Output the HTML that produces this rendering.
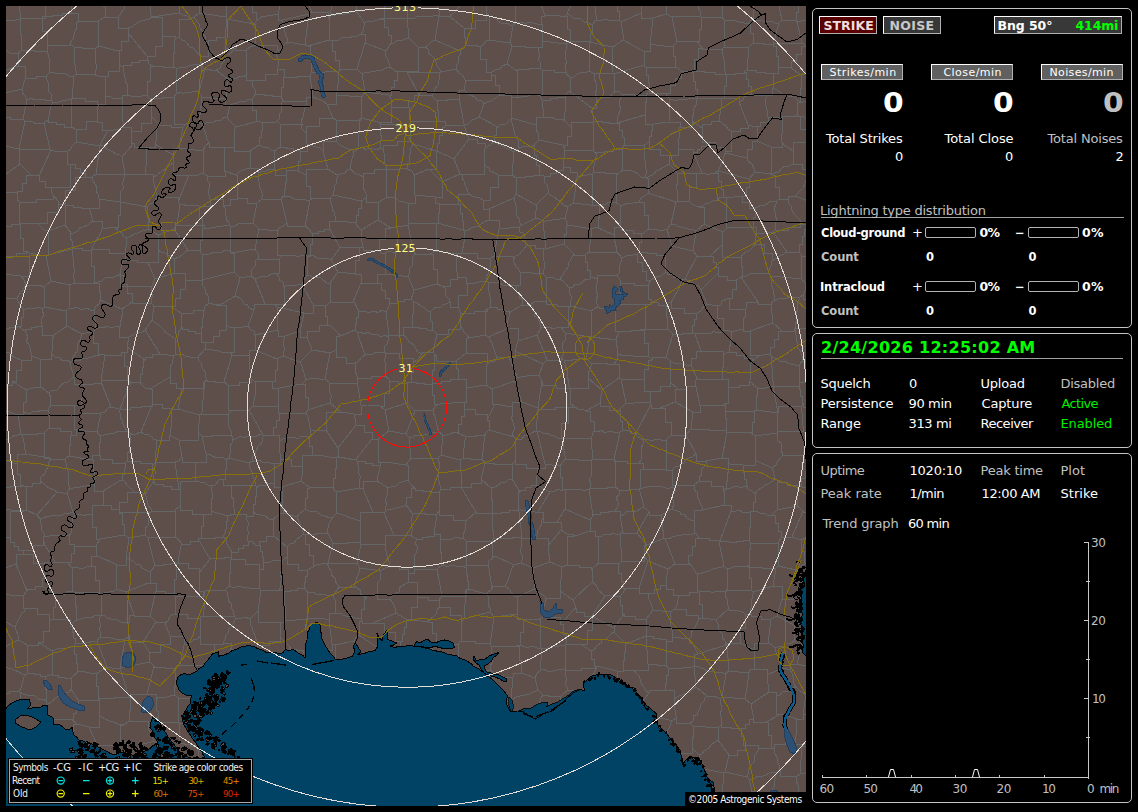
<!DOCTYPE html>
<html><head><meta charset="utf-8"><title>Lightning Monitor</title>
<style>
html,body{margin:0;padding:0;background:#000;}
body{width:1138px;height:812px;position:relative;overflow:hidden;font-family:"DejaVu Sans","Liberation Sans",sans-serif;font-size:13px;color:#fff;}
#map{position:absolute;left:6px;top:6px;width:800px;height:800px;overflow:hidden;background:#5e4f4b;}
#map svg{position:absolute;left:0;top:0;}
.panel{position:absolute;left:812px;width:318px;border:1px solid #c4c4c4;border-radius:5px;}
.t{position:absolute;white-space:nowrap;line-height:16px;height:16px;}
.c{font-family:"DejaVu Sans Condensed","DejaVu Sans","Liberation Sans",sans-serif;}
.btn{position:absolute;box-sizing:border-box;border:1px solid #e8e8e8;background:#606060;}
.bar{position:absolute;box-sizing:border-box;border:1px solid #b4b4b4;border-radius:2px;width:51px;height:11px;}
.hl{position:absolute;height:1px;background:#a0a0a0;}
#graph{position:absolute;left:812px;top:530px;}
</style></head><body>
<div id="map">
<svg width="800" height="800" viewBox="6 6 800 800" shape-rendering="crispEdges" fill="none" stroke-width="1">
<path d="M17 -8L21 18M47 -10L47 4L45 4L45 18L42 18M42 18L21 18M1 22L-9 16M1 22L5 21L7 20L13 20L16 20L20 19M20 19L21 18M1 22L-9 47M82 334L86 333L89 332L93 332M82 334L81 337L80 340L78 343L77 347L77 351L75 354L72 359L72 361M93 332L93 343L98 343L98 354L103 354M72 361L74 360L80 361L82 358L85 359L88 358L92 357L97 355L100 355L103 354M119 512L119 502L127 502L127 492L135 492M119 512L119 513M119 513L119 512L151 512M135 492L141 492L145 494M145 494L146 496L147 500L148 505L151 509L151 511M151 511L151 512M104 505L111 505L111 509L119 509L119 512M104 505L103 505L103 491M103 491L121 480M121 480L124 481L128 486L130 488L132 489L135 492M104 505L92 505L92 515M92 515L92 527L96 527L96 539L100 539M124 535L100 539M124 535L124 524L122 524L122 513L119 513M21 50L21 50L21 34L20 34L20 19M21 50L18 54M18 54L13 53L10 53L5 50L2 50L-2 50L-6 48L-9 47M231 1L226 -10M231 1L226 1L226 17M226 17L199 13M199 -3L199 13M273 519L273 523L274 528L273 532L274 536M273 519L269 519L265 516L261 515L256 514L253 512M253 512L253 516L246 516M246 516L247 520L248 522L248 526L247 529L249 533L247 537L248 541M274 536L266 536L266 541L259 541L259 545M248 541L253 542L255 545L259 545M283 513L287 514L289 515L294 516L297 517M283 513L279 514L276 517L273 519M297 517L304 534M304 534L302 535L300 537L296 540L294 543L290 544L287 547M287 547L274 536M436 355L436 361L456 361M436 355L434 355L434 370L432 370L432 385M432 385L432 383L441 383L441 381L450 381L450 379L458 379M456 361L457 364L456 367L459 371L458 376L458 379M615 310L615 304L620 304M615 310L612 309L608 310L603 308L602 309L597 307M617 275L597 275L597 279M617 275L620 280M620 280L620 304M597 307L597 304L596 300L598 295L596 292L596 286L597 283L597 279M569 288L573 287L575 284L580 284L583 282L585 279L590 279L592 277M569 288L569 292L571 296L571 300L570 302L571 306M597 307L591 311M592 277L597 279M591 311L571 306M42 18L42 18M21 50L21 50L34 50L34 51L47 51M47 51L47 45L52 45M42 18L42 31L47 31L47 45L52 45M52 -12L72 4M72 4L71 9L72 13M42 18L42 16L52 16L52 15L62 15L62 13L72 13M72 4L74 -1L78 -3M120 273L118 275M120 273L120 286L152 286M152 286L151 291L152 294L152 297L151 303M151 303L132 303L132 302M118 275L123 275L123 284L127 284L127 293L132 293L132 302M-1 331L0 330M-6 304L-6 308L-4 310L-4 316L-3 319L-2 324L-0 326L0 330M103 491L94 491L94 484M121 480L122 480L122 474L124 474L124 468L125 468L125 463M94 484L94 472L93 472L93 460L92 460M92 460L92 455L100 455M100 455L100 459L112 459L112 463L125 463M101 381L105 355M101 381L127 380M127 380L127 366L124 366L124 352L121 352M105 355L121 355L121 352M251 276L255 279M251 276L246 277L240 278M255 279L265 304M265 304L254 304L254 310M254 310L249 308L247 304L244 304L242 300L240 298L235 296M240 278L235 296M795 196L824 207M795 196L798 193L800 191L803 188L805 183L806 180L809 177L811 175M813 175L811 175M308 819L310 804M310 804L313 803L317 801L320 800L322 798L326 797L329 796M334 825L335 822L334 818L334 813L334 811L336 807L335 802L335 799M329 796L335 799M5 801L1 798L0 796L-3 793L-5 791M5 801L-2 801L-2 825M5 801L19 799M30 823L30 811L24 811L24 799L19 799M97 745L89 727M97 745L95 750M89 727L77 724M73 756L73 750L95 750M73 756L73 748L69 748M77 724L73 724L73 736L69 736L69 748M279 589L281 587L280 583L282 579L280 574L281 571L281 567L282 564L283 560M279 589L284 591M284 591L290 591L290 590L297 590L297 588L304 588L304 587M304 587L304 582L305 582L305 576L307 576L307 570L308 570M308 570L298 570L298 564L287 564L287 557M287 557L283 560M263 562L266 562L270 562L274 560L278 560L283 560M263 562L263 557L262 557L262 551L260 551L260 545L259 545M287 547L287 557M231 557L224 557L224 558L217 558L217 558L210 558L210 559M231 557L232 552M232 552L230 549L228 546L227 544L226 539L223 537M199 538L207 538L207 538L215 538L215 537L223 537L223 537M199 538L198 539M210 559L198 539M176 537L175 510M176 537L182 544M175 510L180 506M180 506L180 510L192 510L192 514L203 514M203 514L203 526L201 526L201 538L199 538M182 544L190 544L190 541L198 541L198 539M124 535L129 538M151 512L149 514L149 518L148 523L148 525L145 529L145 531L145 535M129 538L145 535M176 537L148 538M175 510L175 511L163 511L163 511L151 511M148 538L145 535M231 559L230 559L230 573L229 573L229 586M231 559L245 559L245 564L259 564L259 569M229 586L232 587L236 587L240 586L244 588L247 587L251 589L257 588L260 589M259 569L260 589M231 557L231 559M232 552L238 552L238 548L243 548L243 545L248 545L248 541M263 562L263 569L259 569M261 590L260 589M261 590L267 590L267 590L273 590L273 590L279 590L279 589M-1 331L0 335L0 338L2 341L3 346L3 348L4 352M4 352L4 356L-1 356L-1 360L-5 360L-5 364L-10 364M12 381L12 385L-2 385M12 381L16 381L16 370L21 370L21 360M21 360L16 358L14 357L10 354L9 352L4 352M16 564L16 554L23 554M16 564L27 591M23 554L33 554L33 563L44 563L44 572M44 572L45 576L42 580L43 583L42 586M42 586L35 586L35 589L27 589L27 591M23 550L23 554M23 550L18 550L18 546L14 546L14 542L10 542L10 538M-3 571L16 564M-3 537L10 537L10 538M-3 594L23 596M23 596L27 591M23 550L33 550L33 545L43 545L43 540M55 562L53 558L51 555L50 553L48 550L45 545L44 542L43 540M55 562L44 562L44 572M57 595L55 595L55 607L53 607L53 619M57 595L42 586M53 619L49 621M23 596L23 608L26 608M49 621L49 614L37 614L37 608L26 608M-7 615L15 627M26 608L24 612L22 613L19 619L18 620L17 623L15 627M795 332L796 335L796 340L798 344L797 348L799 349L801 352L802 356L802 361M795 332L794 331M802 361L799 366M799 366L795 365L791 364L788 363L785 361L780 361L777 358L774 358L771 356M770 355L770 347L774 347L774 339L778 339L778 331L782 331M770 355L771 356M794 331L782 331M828 353L828 361L802 361M795 332L795 328L822 328M254 24L255 24L255 45M254 24L227 19M227 19L225 37M246 50L250 47L255 45M246 50L235 50L235 48M235 48L225 48L225 37M194 17L199 13M194 17L197 22L199 24L200 28L202 31L202 34L206 37L205 41L208 43M226 17L227 19M225 37L216 37L216 40L208 40L208 43M510 43L489 40M510 43L511 38L511 33L513 29L512 26M512 26L510 25L507 23L501 23L498 21L495 18L492 17L489 16M489 16L489 40M75 515L73 518L72 523L71 525L71 528L71 533L69 536M75 515L73 512M73 512L70 513L66 513L62 515L59 515L55 515L50 516L48 516L43 518L40 519M69 536L66 535L62 536L57 535L56 535L50 535L49 536L44 536M44 536L44 534L41 529L42 526L40 522L40 519M92 515L87 514L84 516L80 514L78 514L75 515M100 539L96 546M96 546L74 546L74 544M74 544L69 544L69 536M67 493L73 512M67 493L70 488M94 484L91 485L87 485L85 486L80 487L77 487L73 488L70 488M55 562L67 562L67 562M43 540L44 536M74 544L74 553L71 553L71 562L67 562M10 538L10 511L24 511M-2 509L24 511M283 513L283 510L282 505L283 502L282 498L282 495L283 492L282 487M310 488L301 481M310 488L307 488L307 498L305 498L305 509M305 509L303 511L300 513L297 517M301 481L282 487M253 512L253 504L255 504L255 496L256 496L256 487L258 487M258 487L258 485L266 485L266 483L274 483M282 487L274 487L274 483M258 487L256 486M256 486L255 482L254 479L252 475L252 472L250 468L249 463M274 483L274 483L274 473L274 473L274 463M274 463L270 463L267 462L262 462L259 460L255 461L252 461M252 461L249 463M414 302L412 327M414 302L417 303L421 306L425 308L426 310L430 312M412 327L415 328L418 327L421 329L425 328L428 330L433 330M430 312L430 321L432 321L432 330L433 330M648 193L676 202M648 193L648 178L646 178M677 173L678 178L677 180L678 183L676 186L677 190L678 193L677 199L677 202M677 173L675 170L673 168L669 164M676 202L677 202M669 164L666 166L662 168L659 170L656 171L654 174L650 176L646 178M617 275L619 273L619 269L620 265L621 262L622 258M620 280L620 283L634 283L634 285L648 285M648 285L651 280M651 280L646 280L646 271L642 271L642 262L637 262L637 254M622 258L626 256L629 255L633 255L637 254M639 202L644 202L644 215L648 215L648 229M639 202L634 202L632 204L628 203L623 205L620 205M620 205L621 227M648 229L644 233M644 233L633 233L633 230L621 230L621 227M665 256L665 255L656 255L656 253L647 253L647 252L639 252M665 256L665 272L667 272M651 280L654 278L658 276L661 276L663 274L667 272M637 254L639 252M569 288L566 284L563 281L560 279M592 277L590 277L590 270L587 270L587 262L585 262L585 255M585 255L574 255L574 254M574 254L572 257L570 261L568 263L568 267L566 270L563 273L563 275L560 279M589 252L592 229M589 252L616 252L616 251M614 235L614 235L614 241L615 241L615 246L616 246L616 251M614 235L596 227M596 227L592 229M585 255L589 252M622 258L616 251M644 233L641 233L641 242L639 242L639 252M621 227L614 227L614 235M407 383L398 383L398 381L389 381L389 379M407 383L407 383L407 403M389 379L389 393L384 393L384 406L380 406M380 406L385 410M385 410L407 403M338 448L356 425M338 448L338 456L338 456M356 425L364 425L364 432L372 432L372 439M338 456L338 457L344 457L344 458L350 458L350 459L356 459M356 459L372 439M354 414L355 418L355 420L356 425M354 414L361 414L361 405M361 405L380 406M385 410L389 431M389 431L378 439M372 439L378 439M338 448L326 430M354 414L341 412M341 412L326 412L326 430M306 413L308 417L309 422L309 423L310 428M306 413L308 410M341 412L330 403M326 430L310 430L310 428M330 403L308 410M281 413L278 413L278 406M281 413L281 413L294 413L294 413L306 413M302 384L305 384L305 397L308 397L308 410M302 384L279 388M278 406L278 388L279 388M512 26L516 23M489 16L486 11M486 -1L486 -1L486 11M515 -2L515 23L516 23M538 -4L545 16M516 23L520 22L524 23L525 24L529 22L533 23L537 24L541 24M541 24L541 16L545 16M248 -2L248 5L252 5L252 12L256 12L256 19L259 19M280 -3L280 3L280 6L279 10L278 14M278 14L273 15L270 15L267 16L263 16L259 19M231 1L231 -0L240 -0L240 -2L248 -2M254 24L259 19M439 15L435 15L433 16L428 16L426 17L421 16L417 16L415 18L410 18L407 18M439 15L440 13L437 6L437 3L438 -1L438 -4L436 -9M407 18L407 7L407 7L407 -3L407 -3M98 282L102 281L105 278L111 277L114 277L118 275M98 282L97 283M122 309L132 302M122 309L100 300M97 283L99 283L99 291L100 291L100 300M91 251L91 266L94 266L94 282L98 282M91 251L91 250L82 250L82 248L73 248M73 248L72 249M72 249L72 252L73 257L73 260L73 264L74 268L74 273L73 276L74 279L74 283M97 283L74 283M96 329L94 310M96 329L100 327L105 328L106 326L112 328L116 326L119 326M119 326L120 326L120 320L121 320L121 315L122 315L122 309M94 310L96 306L99 304L100 300M125 258L125 260L137 260L137 262L148 262M125 258L123 261L122 265L121 269L120 273M152 286L155 279M148 262L155 279M91 251L92 249M125 258L125 256M92 249L109 249L109 253L125 253L125 256M73 248L73 246L72 241L70 238L71 233M71 233L74 233L78 231L80 227L83 227L88 225L90 223L93 221M93 221L102 221L102 229M92 249L93 246L95 242L97 239L99 236L101 232L102 229M257 203L261 200M257 203L247 203L247 198L237 198L237 193M250 168L246 169L243 170L239 172L236 175M250 168L258 168L258 172M261 200L262 197L262 193L261 190L259 186L259 182L258 178L259 176L258 172M236 175L237 175L237 193M36 223L38 224L41 227L44 230L48 231M36 223L47 223L47 212L58 212L58 201M48 231L65 225M65 225L65 214L65 214L65 204L64 204M58 201L58 204L64 204M72 249L48 255M48 255L48 243L48 243L48 231L48 231M71 233L65 225M65 203L64 204M65 203L65 205L73 205L73 207L81 207L81 208L89 208M93 221L89 208M145 494L154 481M127 461L125 463M127 461L140 461L140 463L152 463L152 466M152 466L154 481M231 485L223 485L223 479M231 485L232 490L231 493L231 496L234 500L233 504L234 508L234 510L234 514M223 479L219 480L215 485L212 486M212 486L211 490L212 492L213 496L211 501L211 503L211 507L211 511M211 511L227 516M234 514L227 516M256 486L231 485M249 463L229 458M226 460L229 458M226 460L226 469L225 469L225 479L223 479M246 516L246 514L234 514M203 514L211 514L211 511M223 537L225 533L226 529L226 524L228 519L227 516M248 326L244 326L242 328L239 327L234 328M248 326L250 329L254 331L255 335M249 356L232 355M249 356L249 350L255 350M232 355L230 352M255 350L255 335M234 328L234 352L230 352M198 357L193 358L190 357L185 356L182 354L180 354L175 355M198 357L199 361L201 363L202 367L205 372L205 376L207 380M207 380L204 382M204 382L204 388L182 388M173 356L175 355M173 356L173 359L172 364L170 367L170 371L170 374L170 377M170 377L170 383L176 383L176 388L182 388M232 355L224 382M230 352L226 352L221 352L217 350L213 350L211 349L205 349M205 349L198 357M224 382L215 382L215 381L207 381L207 380M200 415L178 409M200 415L201 414M201 414L202 412L202 407L202 404L203 400L203 397L204 392L203 389L203 385L204 382M178 409L182 388M171 412L171 408L162 408L162 404L152 404M171 412L171 409L178 409M150 389L152 389L152 404M150 389L170 377M248 326L254 310M255 335L278 330M275 304L277 307M275 304L265 304M277 307L278 330M255 350L277 359M283 356L277 359M283 356L283 353L285 349L283 345L284 339L285 336M285 336L278 336L278 330M275 304L284 304L284 287M255 279L258 278L262 276L265 277L268 276L271 274L276 273M284 287L283 282L279 280L279 277L276 273M323 151L328 169M323 151L320 148L316 147L310 145L307 144M328 169L306 169L306 175M300 151L307 151L307 144M300 151L300 161L298 161L298 170L296 170M306 175L302 173L300 172L296 170M287 223L281 199M287 223L287 226L305 226M305 226L310 200M310 200L306 200L303 199L297 199L294 199L290 196L288 196L283 196M281 199L283 196M313 198L310 200M313 198L310 198L310 186L306 186L306 175M286 175L286 182L285 182L285 189L284 189L284 196L283 196M286 175L286 170L296 170M261 200L281 199M275 169L275 175L286 175M275 169L271 169L266 171L261 172L258 172M277 231L259 229M277 231L277 255L283 255M259 229L255 249M283 255L279 259M279 259L258 259L258 254M258 254L255 249M253 223L257 227L259 229M253 223L257 203M287 223L285 225L279 228L277 231M308 256L310 256L310 244L312 244L312 233M308 256L307 256M312 233L309 229L305 226M307 256L302 255L300 256L296 256L292 255L286 255L283 255M251 276L251 274L252 269L255 266L255 261L258 258L258 254M276 273L279 273L279 259M240 278L236 274L234 272M255 249L231 253M234 272L234 253L231 253M230 226L230 234L230 234L230 242L230 242L230 251L229 251M230 226L235 226L238 224L241 223L246 223L249 224L253 223M231 253L229 251M235 296L231 299L229 299L224 303L221 304L216 305M234 328L229 327L226 324M216 305L226 305L226 324M205 349L206 342M226 324L226 330L219 330L219 336L213 336L213 342L206 342M755 172L759 172L763 173L769 173M755 172L754 169L752 164L748 161L747 158M747 158L747 149L752 149L752 141L757 141M769 173L771 173L771 147M757 141L771 147M793 164L793 151L793 151M793 164L789 166L785 166L782 168L779 172L776 172L772 175M769 173L772 175M793 151L789 148L787 147L784 145L782 142M771 147L782 147L782 142M811 175L811 169L802 169L802 164L793 164M793 151L793 142L806 142M821 143L806 142M795 196L788 196L788 201M823 223L817 223L817 225L812 225L812 227L806 227L806 229M806 229L806 224L800 224M788 201L789 204L791 206L792 210L794 214L798 218L800 220L800 224M772 175L775 175L775 187L779 187L779 199M788 201L788 199L779 199M755 172L749 179M747 158L725 153M749 179L718 171M725 153L724 156L723 161L721 164L720 167L718 171M677 173L702 173M689 201L677 202M689 201L689 187L696 187L696 173L702 173M702 173L702 173M645 177L646 174L646 169L645 167L646 164L644 158L645 155L644 153L644 148L644 145M645 177L641 177L638 174L635 172L632 171L628 170L623 170M624 145L644 145M624 145L622 149M623 170L622 170L622 149M123 768L122 794M123 768L112 768L112 769L102 769L102 769M122 794L108 798M102 769L99 773L97 778M97 778L108 778L108 798M79 818L79 812L78 812L78 806L77 806L77 800L75 800M104 818L104 799L107 799M107 799L103 799L101 798L96 799L92 798L89 798L87 800L83 799L78 799L75 800M229 800L227 801L223 799L219 800L216 800L212 798L207 799L205 798L201 797L198 797M229 800L230 800L230 811L231 811L231 821M198 797L198 800L200 805L200 809L201 812L199 817L201 820M230 798L229 800M230 798L233 798L239 796L242 796L246 796L250 794L253 794L257 793M257 793L257 800L265 800M265 800L265 813L255 813L255 827L244 827M586 358L591 363M586 358L590 337M591 363L599 363L599 363L607 363L607 364L614 364L614 364M591 336L590 337M591 336L591 337L599 337L599 338L608 338L608 339L616 339M616 339L616 346L617 346L617 354L618 354M618 354L617 360L614 364M561 358L563 355L563 350L562 348L562 344L565 340L565 336L565 333M561 358L564 360M565 333L590 337M564 360L572 360L572 359L579 359L579 358L586 358L586 358M588 378L588 373L590 370L591 366L591 363M588 378L602 390M602 390L619 378M619 378L619 364L614 364M561 327L568 327L568 308M561 327L565 333M591 311L591 319L591 319L591 328L591 328L591 336L591 336M568 308L571 306M621 331L615 331L615 310M621 331L618 334L616 339M650 391L650 403L650 403M650 391L644 391L644 379M644 379L621 379M621 379L626 403M626 403L628 403L634 403L635 402L639 402L643 403L646 402L650 403M519 754L520 757L521 763L519 765L520 770M519 754L538 747M520 770L520 776L528 776L528 782L536 782M538 747L538 749L542 754L544 757L544 760L548 765L547 767L550 771L551 775M551 775L536 782M510 779L510 778L502 778L502 776L495 776L495 775L488 775M510 779L510 770L520 770M519 754L514 751M514 751L510 752L506 751L501 751L499 751M499 751L488 775M510 779L510 779L510 787L510 787L510 795M483 798L489 798L489 804M483 798L488 776M489 804L489 795L510 795M488 776L488 775M465 800L471 800L471 800L477 800L477 799L483 799L483 798M465 800L460 797M460 797L459 793L459 788L458 786L458 781L458 777L459 775L458 769M458 769L458 763L464 763M488 776L464 763M499 751L497 748L494 746L490 744L488 742M464 763L464 755L465 755M465 755L471 755L471 746M471 746L488 742M514 751L514 751L514 721M488 742L492 725M492 725L514 721M-4 776L0 771M-7 750L0 771M304 534L305 534M308 570L316 565M316 565L313 565L313 555L309 555L309 544L305 544L305 534M305 509L309 511L312 511L315 511L320 514L321 515L325 516L330 518L333 517M333 517L331 520L329 524L328 528L327 531M305 534L316 534L316 533L327 533L327 531M210 559L199 573M225 590L215 590L215 590L205 590L205 591M225 590L229 586M199 573L199 591L205 591M235 617L234 615L233 611L231 607L231 603L228 601L228 597L227 592L225 590M235 617L203 616M203 616L203 611L204 609L204 603L204 600L203 595L204 592M205 591L204 592M258 645L269 645L269 641L280 641L280 637M258 645L257 641L255 638L255 636L253 631L252 627L251 626L250 621L250 619M258 611L250 619M258 611L258 622L284 622M284 622L280 622L280 637M236 618L240 619L242 618L245 617L250 619M236 618L235 617M261 590L258 611M286 621L284 591M286 621L284 622M254 696L258 696L262 696L264 696L269 699L272 697L276 700L280 700L283 700M254 696L254 700L253 704L254 706L255 709L254 714L254 718L255 720L255 724M255 724L258 725L263 725L264 727L268 727L273 728M273 728L285 707M285 707L283 700M362 621L362 623L373 623M362 621L359 621L359 635M373 623L384 623L384 632L395 632L395 642M395 642L384 642L384 652M359 635L384 652M400 641L395 642M400 641L400 649L411 649M411 649L410 654L411 656L409 661L410 665L409 669L407 673M385 669L388 671L393 670L396 671L400 672L403 672L407 673M385 669L381 665M381 665L384 665L384 652M120 668L150 662M120 668L129 697M150 662L154 666M129 697L130 698M130 698L130 694L147 694M154 666L147 694M333 767L333 763L333 759L333 755L333 753M333 767L326 775M333 753L329 751L325 751L321 749L318 748L313 747L311 747M326 775L324 775L319 773L315 774L311 772L307 770L305 770M305 770L311 747M302 799L277 802M302 799L302 785L301 785L301 772L300 772M300 772L300 769L286 769M277 802L276 801M276 801L283 771M286 769L283 771M310 804L305 801L302 799M280 824L280 817L279 817L279 809L278 809L278 802L277 802M329 796L328 791L329 787L327 783L327 779L326 775M305 770L300 772M280 745L279 746M280 745L280 736L305 736M305 736L311 747M279 746L283 746L283 757L286 757L286 769M265 800L270 800L276 801M231 769L230 769L230 752M231 769L231 773L255 773M230 752L237 752L237 751L244 751L244 749L251 749L251 748M255 773L256 773M256 773L258 773L258 762L259 762L259 752M259 752L259 748L251 748M230 798L231 795L228 789L228 787L229 783L227 779L227 775M257 793L255 793L255 773M227 775L231 769M283 771L280 771L275 771L272 771L268 771L264 771L260 774L256 773M279 746L276 747L274 748L268 750L266 751L263 750L259 752M280 745L276 745L276 736L273 736L273 728M253 725L253 748L251 748M253 725L255 724M127 753L132 752L134 750L138 748L141 746L143 744L147 743L151 742L154 741M127 753L127 741L120 741M120 741L120 725L124 725M154 741L148 728M148 728L148 721L129 721M124 725L129 721M128 763L144 770M128 763L127 757L127 753M144 770L144 757L152 757L152 745L160 745M160 745L154 741M123 768L123 763L128 763M97 745L120 745L120 741M102 769L95 750M89 727L99 727L99 716M99 716L102 717L105 719L110 721L113 722L118 724L121 724L124 725M99 716L99 708L99 708L99 700L99 700M99 700L99 699M99 699L99 698L114 698L114 697L129 697M130 698L130 710L129 710L129 721L129 721M794 331L796 326L795 325L797 320L796 315L797 312L797 308L797 305L799 300L799 298M782 331L773 323M773 323L771 304M771 304L774 300M774 300L776 300L780 298L783 299L787 298L791 297L797 297L799 298M770 355L767 354L763 355L760 355M773 323L750 331M760 355L750 355L750 331M806 229L804 229L804 236L802 236L802 244L799 244L799 252M799 252L801 254M801 254L801 256L814 256L814 257L828 257M17 66L-8 76M17 66L25 66L25 79M25 79L22 89M22 89L-4 95M18 54L18 66L17 66M246 50L246 75M246 75L243 77L240 76L237 78L231 78L228 79M235 48L233 50L231 53L228 55L225 58L224 61L220 66L220 68L216 70M228 79L216 70M510 43L512 46M489 40L486 41L484 44L480 47M512 46L507 64M507 64L502 66L500 69L495 70L492 72M480 47L480 59L486 59L486 72L492 72M464 90L465 85L465 80M464 90L467 93L470 95L475 97L477 100L482 101L484 104M499 95L496 98L491 101L487 102L484 104M499 95L499 85L495 85L495 75L491 75M491 75L491 80L465 80M12 381L26 390M26 390L26 402L23 402L23 414L19 414M-6 407L18 415M19 414L18 415M-5 443L-1 442L1 441L6 440L8 439L11 438L15 435L18 435L21 434M18 415L21 434M-2 487L10 487L10 486L22 486L22 485M-7 457L17 464M17 464L17 474L20 474L20 485L22 485M25 454L25 450L24 447L24 443L23 438L22 434M25 454L17 454L17 464M21 434L22 434M24 486L26 486L26 510M24 486L32 486L32 483L40 483L40 481M57 492L37 515M57 492L54 490L49 488L46 486L43 483L40 481M37 515L26 510M24 511L26 510M22 485L24 486M67 493L63 493L57 492M40 519L37 515M279 441L283 439L286 438L291 437L294 437L298 439L301 436L306 436M279 441L280 453M280 453L280 459L291 459L291 466L302 466M306 436L309 436L309 446L312 446L312 455M312 455L302 455L302 466M281 413L279 413L279 420L276 420L276 427L273 427L273 435M273 435L279 435L279 441M310 428L310 436L306 436M273 435L263 435M274 463L280 463L280 453M263 435L263 437L262 442L260 445L258 446L256 451L255 455L252 457L252 461M301 481L301 478L303 474L302 470L302 466M338 456L336 458M336 458L332 457L329 457L324 456L321 455L316 456L312 455M310 488L310 487L332 487M336 458L336 468L335 468L335 478L333 478L333 487L332 487M460 325L460 313L461 313M460 325L462 328L464 332L467 335L469 338M461 313L474 313L474 311L487 311L487 309M487 309L485 309L485 335M469 338L485 335M430 312L432 310L436 307L441 307L444 304L446 304L450 302M433 330L437 334M437 334L448 334L448 329L460 329L460 325M450 302L450 307L458 307M458 307L461 313M436 355L433 352M433 352L437 334M456 361L466 353M466 353L466 338L469 338M488 282L487 281M488 282L488 286L488 290L489 292L490 297L491 300L490 302L491 307M487 281L483 281L479 282L475 283M475 283L467 283L467 295L458 295L458 307M491 307L487 309M489 337L485 335M489 337L508 328M491 307L497 307L497 309L503 309L503 311L509 311L509 313M508 328L507 324L508 320L509 317L509 313M466 353L487 353L487 365M497 357L495 361L491 361L487 365M497 357L495 353L494 349L493 347L492 343L490 340L489 337M475 283L466 283L466 277L457 277L457 272M450 302L449 299L446 296L445 293L445 288L442 286M457 272L457 279L450 279L450 286L442 286M433 352L422 352L422 354M412 327L403 327L403 335M403 335L406 337L409 342L411 343L414 345L416 349L418 352L422 354M409 382L411 382L411 372L413 372L413 363M409 382L416 382L416 383L424 383L424 384L432 384L432 385M432 385L432 385M422 354L419 358L417 360L413 363M361 405L357 381M330 383L329 387L329 391L331 395L331 398L330 403M330 383L357 383L357 380M357 380L357 381M389 379L385 376M357 381L357 378L371 378L371 376L385 376M409 382L407 383M413 363L413 358L399 358L399 353L385 353M385 376L386 372L385 368L386 364L384 360L386 356L385 353M693 251L696 231M693 251L672 246M696 231L692 229L688 229L685 228L681 227L677 226L675 224L671 224M672 246L667 229M667 229L671 224M648 229L651 229L655 229L658 230L664 230L667 229M665 256L666 253L670 250L672 246M648 193L646 195L641 198L639 202M676 202L671 224M621 331L621 331L631 331L631 330L640 330M618 354L623 356L625 355L628 355L633 356L637 356L640 356L643 357L648 356M640 330L644 330L644 343L648 343L648 356M644 379L644 369L648 369L648 360L652 360M621 379L619 378M648 356L652 360M666 305L666 317L667 317L667 329L668 329M666 305L658 305L658 302L651 302L651 299M645 304L651 304L651 299M645 304L645 329L642 329M642 329L642 329L668 329M620 304L645 304M648 285L648 299L651 299M640 330L642 329M545 249L564 244M545 249L546 247L545 241L544 240L544 235L544 231L543 229L543 225L544 221M564 244L564 234L566 234L566 225L568 225M544 221L546 221L552 220L555 219L558 220L562 218L565 218M568 225L565 218M574 254L564 244M592 229L568 225M568 207L565 218M568 207L573 203M596 227L598 227L598 217L599 217L599 206M573 203L599 206M547 360L537 335M547 360L543 364M543 364L515 351M537 335L518 341M518 341L515 351M561 358L561 360L547 360M541 328L537 335M541 328L545 327L549 327L554 329L556 328L561 327M517 377L509 357M517 377L521 377L524 376L527 376L531 375L535 375L539 375M539 375L543 364M509 357L515 357L515 351M497 357L509 357M508 328L518 328L518 341M403 335L398 336L393 335L389 335M385 353L385 352M385 352L384 347L387 344L388 341L388 337M389 335L388 337M356 459L357 461M386 462L378 462L378 439M386 462L380 462L380 467M380 467L380 465L372 465L372 463L365 463L365 461L357 461M325 379L321 380L317 378L314 378L309 379L306 380M325 379L330 353M306 380L305 377L304 373L302 368L302 366L300 362M300 362L312 350M312 350L318 350L318 351L324 351L324 352L330 352L330 353M302 384L306 380M330 383L325 379M283 356L300 362M277 359L277 370L275 370L275 381L272 381M279 388L272 388L272 381M507 64L517 71M499 95L511 95L511 101M511 101L511 97L517 97M491 75L492 72M517 97L517 97L517 71M638 -3L640 -3L640 5L641 5L641 13M621 22L641 13M621 22L619 20M619 20L619 11L617 11L617 2L616 2L616 -7L615 -7M614 74L614 91L619 91M614 74L612 73M619 91L615 92L613 93L610 97L606 97L603 97L600 99L596 101M612 73L606 73L606 73L601 73L601 73L595 73L595 74M596 101L597 97L595 94L597 89L596 85L596 83L594 78L595 74M613 47L589 42M613 47L612 73M589 42L589 52L589 52L589 61L589 61L589 71L589 71M589 71L595 74M567 14L565 16M567 14L570 15L573 18L578 18L581 19L584 22L589 23L592 25M565 16L567 16L567 29L570 29L570 42M570 42L588 41M592 25L592 33L590 33L590 41L588 41M613 47L623 40M589 42L588 41M623 40L624 35L623 34L622 28L621 25L621 22M596 20L599 21L605 19L608 20L611 20L615 20L619 20M596 20L592 25M541 24L542 24L542 33L542 33L542 41M545 16L550 15L554 16L557 15L560 16L565 16M570 42L566 44M566 44L542 41M512 46L512 46L525 46L525 47L538 47M517 71L517 69L529 69L529 68L540 68M540 68L540 62L538 60L540 55L538 51L538 47M538 47L542 47L542 41M567 14L568 11L570 8L571 5L573 2L574 -1L575 -5M596 20L596 15L595 12L595 7L593 5L593 0L592 -4M672 17L666 14M672 17L677 42M677 42L673 46M666 14L653 18M653 18L650 45M673 46L669 46L664 46L662 45L658 46L654 44L650 45M614 74L644 65M623 40L643 51M644 65L644 51L643 51M653 18L641 18L641 13M643 51L650 51L650 45M435 40L439 16M435 40L460 51M464 28L450 17M464 28L464 37L465 37L465 45L466 45M450 17L439 16M460 51L466 45M409 38L418 47M409 38L407 18M439 15L439 16M407 18L407 18M425 47L418 47M425 47L427 46L431 42L435 40M456 69L456 65L458 63L458 57L460 55L460 51M456 69L441 72M441 72L439 68L437 66L436 62L434 58L431 55L428 53L428 49L425 47M473 -6L472 -4L467 0L465 1L462 5L460 6L458 8L454 13L452 14L450 17M486 11L486 20L475 20L475 28L464 28M480 47L475 45L472 46L466 45M465 80L463 76L460 73L459 73L456 69M278 14L278 20L283 20M311 12L311 10L309 6L309 1L309 -4L308 -6M311 12L309 14M283 20L309 14M382 18L384 18L384 6L385 6L385 -7M382 18L407 18L407 18M52 45L70 45L70 43M72 13L78 13L78 21M70 43L73 39L74 35L74 33L77 28L76 24L78 21M158 235L149 229M158 235L158 235L158 250M148 262L158 262L158 250M125 256L127 238M149 229L146 230L142 231L138 233L134 234L131 236L127 238M102 229L115 227M127 238L123 236L122 233L118 231L115 227M99 199L99 208L89 208M99 199L120 202M115 227L118 227L118 215L120 215L120 202M277 121L275 123L270 122L267 122L263 123M277 121L280 124M280 124L280 147M263 123L262 123L262 130L261 130L261 137L259 137L259 145M259 145L263 147L268 147L271 150L274 151M274 151L280 147M255 94L252 100M255 94L264 94L264 95L272 95L272 96L281 96L281 97M281 97L283 100M283 100L282 102L281 108L281 112L279 114L279 119L277 121M259 121L256 121L256 110L252 110L252 100M259 121L263 123M301 128L301 124L280 124M301 128L303 124L301 122L303 117L304 112L305 108L306 105L306 101M306 101L295 101L295 101L283 101L283 100M301 128L306 133M306 133L307 144M300 151L300 150L293 150L293 148L286 148L286 147L280 147M250 151L234 151L234 141M250 151L259 145M234 141L235 136L234 131L236 127M259 121L236 127M250 151L250 151L250 157L250 157L250 162L250 162L250 168M275 169L274 151M173 155L155 144M173 155L173 148L179 148M159 124L157 129L156 132L156 137L156 141L155 144M159 124L159 125L171 125L171 127L183 127M183 127L179 148M225 171L225 176L208 176M225 171L224 171L224 159L224 159L224 147M224 147L209 147L209 143M202 173L208 176M202 173L203 173L203 166L203 166L203 159L203 159L203 151M203 151L205 146L209 143M234 141L234 147L224 147M236 175L225 171M189 175L194 175L198 175L202 173M189 175L173 175L173 163M173 163L173 163L173 155M179 148L203 151M-10 205L-2 205L-2 198L5 198L5 192M-3 227L4 227L4 226L11 226L11 224L19 224L19 223M19 223L19 202L19 202M5 192L17 192L17 199M19 202L17 199M-1 179L5 192M20 224L20 238L23 238L23 251L26 251M20 224L19 223M26 251L26 253L16 253L16 256L5 256L5 258L-5 258M53 195L53 199L36 199L36 202L19 202M53 195L58 201M36 223L20 223L20 224M31 175L26 175L26 183L22 183L22 191L17 191L17 199M31 175L20 164M20 164L-1 179M31 175L39 176M53 195L51 191L51 187M39 176L39 181L45 181L45 187L51 187M82 334L67 326M70 363L72 361M70 363L68 360L62 361L60 358L55 357L51 354M67 326L54 335M54 335L52 340L53 342L52 347L52 351L51 354M21 360L31 360L31 356M41 387L36 387L33 388L29 389L26 390M41 387L40 387L40 359M40 359L31 356M26 251L29 253M-2 274L3 274L5 274L9 274L15 276L17 275L21 276M21 276L29 276L29 253M48 255L46 256M29 253L46 256M152 405L152 406L141 406L141 407L130 407L130 409L120 409M152 405L141 432M141 432L136 434L132 434M119 409L120 413L120 417L122 420L123 424L125 428L127 431M119 409L120 409M132 434L127 431M140 382L135 382L131 382M140 382L142 385L145 388L150 389M131 382L130 385L127 388L126 391L126 395L124 398L123 401L122 404L120 409M152 404L152 405M100 436L104 435L109 434L111 433L114 433L119 431L123 431L127 431M100 436L97 432M97 432L101 413M111 407L108 408L105 412L101 413M111 407L119 409M101 381L101 382M127 380L131 382M111 407L101 382M100 455L99 451L99 448L99 445L101 440L100 436M127 461L127 452L129 452L129 443L130 443L130 434L132 434M145 360L127 347M145 360L145 357L152 357L152 354L160 354M160 354L145 330M145 330L142 332L139 332L135 333L133 335L129 337M127 347L129 337M121 352L127 352L127 347M140 382L140 374L142 374L142 367L143 367L143 360L145 360M173 356L168 355L165 354L160 354M96 329L93 332M103 354L105 355M119 326L119 337L129 337M175 355L175 339M145 330L152 320M175 339L173 337L168 334L166 333L164 330L161 327L159 325L154 322L152 320M151 303L154 306M154 306L152 320M249 356L250 361L249 365L249 368L250 370L250 376L251 379M224 382L228 385M228 385L239 385L239 382L251 382L251 379M272 381L256 382M251 379L256 382M278 406L253 406M256 382L255 387L255 389L256 393L254 399L254 401L253 406M70 363L74 377M101 382L101 383L93 383L93 384L84 384M74 377L74 384L84 384M41 387L49 393M51 354L51 359L40 359M74 377L71 379L68 382L64 383L61 385L59 388L57 390L51 391L49 393M101 413L81 413L81 405M84 384L81 405M158 250L161 252L165 253L167 254L171 257L174 259M155 279L174 273M174 273L174 259L174 259M158 235L174 229M174 229L188 250M174 259L179 257L182 255L184 253L188 250M234 272L202 280M229 251L225 250L222 252L219 252L214 252L209 254L205 254L202 254M202 280L202 280L202 271L202 271L202 263L202 263L202 254M174 229L177 225M177 225L204 225L204 229M204 229L202 229L202 240L200 240L200 252M188 250L200 250L200 252M757 141L757 126L752 126M752 126L760 126L760 122L768 122L768 117M782 142L781 138L782 134L782 130L782 126L782 122M782 122L782 117L768 117M806 142L806 129L800 129L800 116L795 116M782 122L782 116L795 116M823 125L820 124L817 123L813 121L810 120L807 119L802 116L800 117L797 114M797 114L795 116M801 75L826 69M801 75L801 88L800 88L800 101L799 101M819 98L815 98L811 99L808 101L803 102L800 102M800 102L799 101M797 114L797 102L800 102M725 153L725 151M693 152L702 173M693 152L697 152L697 149L701 149L701 146L706 146L706 142M715 173L718 171M715 173L710 174L706 174L702 173M725 151L725 147L715 147L715 142L706 142M752 126L748 125M748 125L748 128L740 128L740 131L731 131M725 151L731 151L731 131M721 98L721 102L721 106L721 108L720 114L719 116L720 121M721 98L697 98M697 98L696 99M696 99L696 102L696 105L693 110L694 114L692 117L692 121M720 121L711 121L711 124L702 124L702 128M692 121L702 128M739 102L748 125M739 102L739 98L722 98M722 98L721 98M731 131L728 129L726 126L723 124L720 121M726 74L715 74L715 72L704 72L704 71L694 71L694 70M726 74L726 86L724 86L724 98L722 98M691 72L694 70M691 72L693 72L693 81L695 81L695 89L697 89L697 98M706 142L702 142L702 128M654 124L652 124L652 130L651 130L651 136L649 136L649 142M654 124L669 122M649 142L649 149L660 149L660 155L670 155M680 127L680 122L669 122M680 127L678 131L680 133L679 138L678 142L679 146L678 149M678 149L678 155L670 155M669 164L669 161L670 155M646 178L645 177M644 145L649 142M670 99L669 122M670 99L673 100L678 100L683 99L684 100L688 99L693 98L696 99M692 121L692 127L680 127M693 152L693 149L678 149M622 94L634 94L634 95L646 95L646 95M622 94L622 97L619 101L619 104L621 109L620 111L618 116L617 120L617 123M617 123L645 115M646 95L646 102L645 102L645 108L645 108L645 115L645 115M624 145L624 137L622 137L622 130L619 130L619 123L616 123M616 123L617 123M654 124L645 124L645 115M592 174L592 205L602 205M592 174L594 172M594 172L605 172L605 173L616 173L616 175M616 175L616 184L616 184L616 193L616 193L616 203L616 203M616 203L611 202L609 202L606 204L602 205M573 203L574 199L574 195L575 192L575 188L575 183L576 180L577 177M577 177L592 174M599 206L602 205M565 150L563 167M565 150L594 151M563 167L570 167L570 172L577 172L577 177M594 151L596 154M596 154L596 157L595 161L594 166L593 168L594 172M623 170L616 175M622 149L613 149L613 151L604 151L604 152L596 152L596 154M620 205L616 203M97 778L92 778L89 778L87 779L84 781L78 780L75 781L72 781M108 798L107 799M75 800L73 797L70 792M70 792L72 781M47 818L47 802L49 802M70 792L49 802M73 756L71 760L69 764L69 767L67 771M72 781L69 779L69 774L67 771M69 748L62 748L62 745L55 745L55 741L48 741L48 738M48 738L52 768M67 771L52 771L52 768M178 828L178 815L178 815L178 801L178 801M198 797L196 795M196 795L193 797L190 797L186 798L181 800L178 801M155 822L152 804M128 820L133 799M152 804L143 797M133 799L143 797M178 801L171 797M171 797L152 804M122 794L133 799M148 776L148 776L155 776L155 775L162 775L162 775L169 775M148 776L143 797M169 775L170 775L170 786L171 786L171 797M144 770L148 776M515 827L515 815L520 815L520 804L525 804M551 826L544 826L544 814L536 814L536 803M525 804L532 801M532 801L536 803M489 804L495 823M510 795L514 796L515 800L519 801L521 802L525 804M536 782L534 782L534 791L532 791L532 801M551 775L551 776L563 776M563 776L567 776L567 786L570 786L570 796M570 796L536 803M465 800L463 800L463 813L461 813L461 827M437 822L436 822L436 811L435 811L435 800M460 797L435 800M675 402L675 389L678 389M675 402L693 412M693 412L700 412L700 406M700 406L695 382M695 382L695 386L686 386L686 389L678 389M650 391L660 391L660 386L670 386L670 382M660 408L651 408L651 404M660 408L675 402M650 403L651 404M670 382L678 389M798 539L802 540L805 538L808 539L813 539L815 539L819 538L823 538M798 539L792 537M792 537L803 511M803 511L803 512L810 512L810 513L818 513L818 513L825 513M798 539L801 539L801 551L804 551L804 564M804 564L824 562M436 644L458 644M436 644L432 648M432 648L432 648L432 655L432 655L432 662L432 662L432 669M459 666L458 644M459 666L456 668L452 670L449 669L448 673L442 674L440 675M440 675L432 669M411 649L432 648M407 673L412 679M412 679L432 669M443 693L418 695M443 693L443 688L441 685L442 681L440 679L440 675M418 695L412 686M412 686L412 679M440 724L449 698M440 724L451 724L451 726L463 726L463 728M470 719L463 719L463 728M470 719L457 696M457 696L457 698L449 698M443 693L449 693L449 698M418 695L418 698L417 703L415 704L415 709L414 712L413 717L414 720M414 720L436 726M436 726L440 724M465 755L461 752L459 752L456 749L451 748L449 748L444 745L441 744L437 742M471 746L469 743L467 738L467 736L464 733L463 728M437 742L437 738L436 733L436 729L436 726M484 716L484 725L492 725M484 716L470 716L470 719M466 565L466 565L466 541M466 565L464 567M440 539L440 552L441 552L441 565L442 565M440 539L443 539L448 539L452 539L456 537L459 538L463 538M463 538L466 541M442 565L445 566L449 566L454 565L456 566L461 566L464 567M77 724L71 719M99 700L99 700L88 700L88 700L78 700M71 719L73 719L73 713L76 713L76 706L78 706L78 700M96 674L79 671M96 674L96 686L98 686L98 699L99 699M79 671L71 678M71 678L71 689M78 700L71 689M71 719L71 719L59 719L59 719L47 719M71 689L69 692L66 692L62 695L59 696L55 698L53 701L51 702L47 705M47 705L47 705L47 719M48 738L46 735M46 735L45 730L43 728L44 722M44 722L47 719M16 771L19 768L23 767L28 764M16 771L16 784L18 784L18 797L21 797M28 764L39 771M39 771L39 782L38 782L38 792L37 792M21 797L21 792L37 792M-5 747L14 743M0 771L16 771L16 771M14 743L27 755M27 755L28 759L28 764M19 799L21 797M46 735L36 735L36 745L27 745L27 755M52 768L39 771M49 802L49 792L37 792M316 565L327 563M333 543L327 531M333 543L328 563M328 563L327 563M333 596L335 600L336 603L335 608L336 613M333 596L330 595L326 595L323 594L319 594L316 594L313 592L308 593M307 618L309 618L314 619L319 618L320 618L325 619L329 620M307 618L307 593L308 593M329 620L329 613L336 613M361 619L361 609L364 609L364 599L366 599M361 619L358 618L355 618L350 616L346 616L343 615L341 613L336 613M366 599L363 595L360 594L360 590L357 588L354 586M354 586L354 587L339 587M339 587L333 596M304 587L308 593M339 587L338 585L335 581L335 578L331 575L331 571L329 568L327 563M286 621L306 619M306 619L307 618M182 544L180 548L180 551L179 556L178 559L178 563M199 573L199 568L188 568L188 563L178 563M178 563L178 563M148 538L155 566M178 563L170 563L170 564L163 564L163 565L155 565L155 566M204 592L204 596L175 596M175 596L174 595M178 563L176 563L176 579L174 579L174 595M134 615L134 616L150 616M134 615L129 615L129 623M150 616L156 622M143 642L156 622M143 642L128 642L128 637M129 623L128 637M256 649L258 645M256 649L259 653L258 659L260 663M260 663L262 665M262 665L276 669M280 637L284 641L286 643L290 647M276 669L278 667L279 662L281 660L284 657L285 654L288 651L290 647M305 736L308 730M335 748L333 753M335 748L325 727M308 730L314 730L314 729L319 729L319 728L325 728L325 727M285 707L289 710L293 711L296 712L299 715L302 716M308 730L308 716L302 716M335 748L357 738M356 727L357 738M356 727L356 721L330 721M325 727L325 721L330 721M359 635L356 637L354 641M381 665L361 667M354 641L354 645L355 650L357 652L357 657L359 660L360 663L361 667M231 673L230 675M231 673L230 671L231 666L232 663L231 660L231 656L230 652L231 648M230 675L219 675L219 674L207 674L207 674M207 674L211 674L211 659L214 659L214 644M231 648L231 643L223 643M223 643L223 644L214 644M253 694L256 694L256 685L259 685L259 675L262 675L262 665M253 694L249 694L245 695L242 693L238 694M260 663L231 673M238 694L230 675M256 649L248 649L248 649L239 649L239 649L231 649L231 648M236 618L234 622L232 626L229 629L228 633L226 635L225 639L223 643M174 614L187 614L187 618L200 618L200 622M174 614L170 616L168 621L165 623M165 623L170 636M170 636L184 636L184 645M184 645L187 644L191 642L194 639L198 639L200 636M200 636L200 636L200 622M203 616L200 616L200 622M175 596L175 605L175 605L175 614L174 614M150 616L156 591M156 622L165 623M174 595L174 593L165 593L165 591L156 591M143 642L149 652M149 652L160 652L160 644L170 644L170 636M150 662L149 662L149 652M180 665L176 668M180 665L181 661L181 656L182 653L183 650L184 645M154 666L154 667L165 667L165 668L176 668M180 665L205 665L205 676M205 676L207 674M214 644L200 644L200 636M158 717L159 712L157 711L156 707L157 703L156 699M158 717L158 722L178 722M178 722L178 710L178 710L178 698L179 698M156 699L159 697L163 698L167 697L170 696L174 695M174 695L179 698M147 694L156 694L156 699M148 728L152 725L152 721L155 719L158 717M176 668L175 668L175 677L175 677L175 686L174 686L174 695M205 676L205 679L204 684L204 688L203 692L203 696M203 696L203 697L191 697L191 698L179 698M253 725L230 725M229 751L230 752M229 751L229 728L227 728M230 725L227 728M254 696L253 694M238 694L233 698M230 725L233 698M203 696L204 698M233 698L233 698L219 698L219 698L204 698M567 691L567 687L565 683L567 679L565 675L565 670M567 691L584 690M565 670L581 670L581 668L596 668L596 666M584 690L586 686L587 684L590 681L591 678L594 673L595 671L596 666M333 767L362 771M357 738L357 744L362 744M362 744L362 744L362 753L362 753L362 762L362 762L362 771M362 771L362 771M335 799L349 798M362 771L362 780L358 780L358 789L354 789L354 798L349 798M771 304L758 304L758 302M750 331L743 331L743 329M743 329L743 326L743 320L746 316L745 313L746 309M758 302L746 302L746 309M803 295L805 291L805 288L805 283M803 295L803 299L809 299L809 302L814 302L814 306L819 306M805 283L809 283L813 282L817 282L819 281L823 280L827 278L830 277L833 276M774 300L774 295L773 292L773 289L771 283L771 281L771 276M771 276L802 279M799 298L803 295M802 279L805 283M802 279L801 254M150 99L150 98L162 98L162 97L174 97M150 99L151 99L151 108L151 108L151 116M151 116L159 124M183 127L186 124M174 97L174 124L186 124M666 14L666 5L667 5L667 -3L668 -3L668 -11L669 -11M730 -7L726 -7L726 5L722 5L722 17M722 17L722 17L712 17L712 17L701 17M700 16L700 11L698 8L698 3L698 -1M700 16L701 17M672 17L700 16M677 42L677 41L697 41M697 41L699 41L699 29L701 29L701 17M739 102L743 100L744 97L749 95L751 94M768 117L767 115L767 110L766 106L765 103L766 98L766 95M751 94L751 95L766 95M799 101L797 100L794 97L788 96L785 95L782 94L780 92L775 89L772 88M766 95L772 95L772 88M801 75L798 73L794 70L791 68M773 73L773 88L772 88M773 73L778 73L778 67M791 68L787 67L783 68L778 67M773 45L773 44L763 44L763 43L753 43M773 45L779 23M753 18L756 20L760 20L763 21L768 22L771 21L775 23L779 23M753 18L748 23M753 43L753 33L750 33L750 23L748 23M722 17L724 20M755 -4L756 -1L754 3L753 8L754 9L753 15L753 18M724 20L727 21L732 20L736 21L739 22L744 23L748 23M821 17L817 18L814 19L809 21L807 20L801 21L797 22M797 22L802 43M822 48L822 46L807 46M802 43L807 46M791 68L791 61L796 61L796 54L801 54L801 46L807 46M778 67L778 56L776 56L776 46L773 46M773 46L773 43L802 43M479 117L498 127M479 117L475 119L472 120L468 124L464 124M464 125L464 124M464 125L469 139M469 139L477 139L477 143L485 143L485 148M498 127L496 127L496 135L494 135L494 142M485 148L490 145L494 142M511 101L511 110L511 110L511 118L512 118M484 104L479 117M511 119L512 118M511 119L509 121L506 124L500 125L498 127M464 90L459 90L459 97M459 97L464 124M445 127L445 121L438 121M445 127L445 125L464 125M459 97L459 99L447 99L447 100L436 100M438 121L438 110L437 110L437 100L436 100M407 72L440 73M407 72L419 95M440 73L439 76L439 80L438 85L435 89L434 92L432 96M419 95L432 95L432 96M406 71L418 71L418 47M406 71L407 72M441 72L440 73M436 100L432 96M413 144L411 141M413 144L411 148L410 152L410 154L409 158L409 163L407 164L407 169M407 169L402 168L399 169L394 170L390 169L386 169M386 169L386 166L384 162L385 158L384 153L383 150M411 141L397 141L397 145L383 145L383 150M72 568L75 567L79 568L84 568L86 567L91 566M72 568L72 576L72 576L72 583L72 583L72 591L72 591M91 566L95 566L95 580L99 580L99 593M99 593L74 592M72 591L74 592M96 546L96 556L98 556M67 562L72 568M98 556L91 556L91 566M57 595L61 594L66 594L67 591L72 591M101 615L97 615L94 616L91 618L87 617L84 618L78 620L76 620M101 615L102 595M76 620L76 606L75 606L75 592L74 592M102 595L99 593M53 619L70 619L70 626M70 626L72 624L76 620M25 454L50 458M22 434L29 434L29 434L37 434L37 433L44 433L44 433M44 433L44 458L50 458M70 488L68 484L68 482L69 478L68 473L68 471L67 468L66 463L65 459M92 460L69 456M69 456L65 459M40 481L41 477L45 474L46 470L48 467L49 462L51 459M65 459L51 459L51 459M51 459L50 458M491 258L490 262L491 267L488 270L488 274L486 277L487 281M491 258L477 258L477 253L462 253L462 247M457 272L456 253M462 247L462 253L456 253M414 302L411 299M411 299L413 294L414 290M442 286L437 284M414 290L437 284M456 253L456 253L449 253L449 252L442 252L442 251L435 251M435 251L430 254M437 284L437 269L433 269L433 254L430 254M277 307L304 313M285 336L300 331M304 313L300 331M312 350L307 337M300 331L300 337L307 337M357 380L357 376L355 371L356 366L355 363M385 352L379 353L376 352L373 354L368 354L365 355M355 363L359 361L362 357L365 355M330 353L336 350M355 363L346 363L346 357L336 357L336 350M388 337L385 335L381 337L377 334L374 334L371 334L368 332L365 334L360 332L357 332M365 355L357 332M779 199L776 202M800 224L800 227L788 227L788 230L775 230M776 202L776 204L774 209L775 212L775 216L777 219L776 222L775 225L775 230M749 179L749 187L746 187L746 196L742 196M776 202L771 201L768 203L765 205L761 205L758 207L755 208M742 196L742 202L749 202L749 208L755 208M749 382L749 385L739 385L739 387L728 387M749 382L750 380L750 375L751 371L750 368L751 363L752 361M722 379L728 379L728 387M722 379L722 379L722 367L723 367L723 355M752 361L752 358L744 358L744 355L736 355L736 352L728 352M723 355L728 352M760 355L755 359L752 361M743 329L731 332M728 352L729 352L729 345L730 345L730 339L731 339L731 332M746 309L729 309L729 298M731 332L728 330M728 330L723 330L723 318L717 318L717 306M717 306L721 305L722 301L727 299L729 298M568 207L563 205L561 202L558 200L554 197L550 195L548 193M563 167L563 170L556 170L556 173L550 173L550 176L544 176M548 193L548 189L547 185L544 182L544 179L544 176M513 285L520 285L520 272M513 285L516 285L516 292L519 292L519 298L522 298L522 305M520 272L543 274M535 301L530 305M535 301L546 301L546 277M546 277L543 274M522 305L526 305L530 305M491 258L494 256M488 282L492 282L494 283L499 282L503 285L507 285L509 286L513 285M494 256L513 256L513 260M513 260L514 262L516 267L518 268L520 272M509 313L522 305M513 260L516 256L520 254L521 252L524 249L527 245M543 250L544 254L543 259L545 263L544 266L544 269L543 274M543 250L543 248L535 248L535 245L527 245M541 328L540 324L539 321L537 317L534 316L534 312L533 307L530 305M568 308L568 306L557 306L557 304L546 304L546 301L535 301M560 279L557 280L553 277L550 278L546 277M545 249L543 250M433 410L433 412L435 417L436 421L437 425L437 427L439 432M433 410L424 410L424 410L415 410L415 411M439 432L436 432L431 433L428 434L424 435L419 436L415 435L413 437L409 437M415 411L406 434M409 437L406 434M432 385L432 395L434 395L434 404L437 404M407 403L415 411M437 404L433 410M389 431L406 434M386 462L406 465M406 465L411 458M411 458L409 437M495 404L487 420M495 404L492 404L492 389M487 420L487 414L475 414L475 409L464 409M492 389L486 385M486 385L466 388M466 388L466 402L460 402M460 402L464 402L464 409M512 407L512 410L513 416L511 417L513 422L514 426L514 430L512 434L514 437M512 407L495 404M489 430L489 420L487 420M489 430L514 437M515 381L492 389M515 381L522 402M522 402L512 402L512 407M515 381L517 377M487 365L486 385M458 379L466 379L466 388M437 404L440 404L445 403L450 404L452 403L456 402L460 402M538 408L538 409M538 408L542 381M538 409L555 409L555 407L572 407L572 404M542 381L542 385L556 385L556 388L570 388M572 404L570 404L570 388M570 388L570 388M522 402L538 408M539 375L542 381M564 360L565 363L565 366L567 369L567 373L567 377L569 382L568 384L570 388M588 378L588 388L570 388M602 390L600 403M626 403L619 410M600 403L600 406L609 406L609 410L619 410M636 433L651 404M636 433L631 433L629 431L625 430L622 431M622 431L622 421L620 421L620 410L619 410M514 437L517 439M538 409L536 431M517 439L522 439L524 436L529 435L531 433L536 431M484 165L485 148M484 165L484 174L462 174M462 174L460 174M469 139L454 159M454 159L460 174M445 127L442 127L442 135L439 135L439 143L437 143L437 151M454 159L437 151M413 144L436 151M438 121L410 121L410 126M411 141L410 126M437 151L436 151M312 233L318 233L318 231L324 231L324 229L329 229L329 227M313 198L330 198L330 198M330 198L331 203L332 206L332 209L334 212L335 216L335 221M329 227L329 221L335 221M411 299L404 299L404 301L397 301L397 303L389 303L389 306M389 335L386 312M389 306L386 312M406 465L408 465L408 480M380 467L379 471L378 475L377 478L377 481M377 481L388 488M408 480L405 481L402 482L399 483L396 486L391 487L388 488M439 432L443 435M464 409L464 416L461 416L461 424L458 424L458 432L455 432M455 432L450 434L446 435L443 435M463 692L488 698M463 692L466 674M466 674L491 670M488 698L489 697M489 697L490 693L490 691L491 687L492 684L493 681L492 677L493 673M493 673L491 670M484 716L484 707L486 707L486 698L488 698M457 696L463 692M459 666L466 674M492 647L490 645M492 647L491 651L491 655L493 658L492 663L490 666L491 670M458 644L461 641M461 641L475 641L475 643L490 643L490 645M514 721L516 719M516 719L509 702M509 702L505 700L501 699L496 699L492 698L489 697M488 562L495 556M488 562L492 589M492 589L492 586L505 586M505 586L507 582L508 580L509 577L511 571L512 568L514 565M495 556L514 565M488 562L488 565L466 565M466 541L492 541M495 556L492 556L492 541M487 593L488 596L489 600L488 605L490 608L490 612M487 593L483 593L479 592L475 591L473 590L468 589M466 590L468 589M466 590L464 619M464 619L490 612M492 589L487 593M517 614L494 617M517 614L518 597M494 617L490 612M518 597L514 596L511 592L510 590L505 586M464 567L466 567L466 574L467 574L467 581L468 581L468 589M461 623L461 641M461 623L464 619M490 645L494 617M563 145L539 140M563 145L567 145L567 136L571 136L571 127M544 117L536 117L536 125M544 117L547 117L552 117L555 119L556 120L562 119L565 121M536 125L536 130L538 133L538 136L539 140M565 121L571 127M565 150L563 145M594 151L593 122M571 127L571 122L593 122M619 91L622 94M616 123L616 123L609 123L609 122L602 122L602 121L594 121M596 101L596 108L592 108M592 108L594 121M594 121L593 122M570 77L570 91L569 91M570 77L566 74M566 74L566 72L554 72L554 70L542 70M565 95L569 91M565 95L565 97L557 97L557 98L550 98L550 100L542 100M542 70L542 94L535 94M542 100L540 96L535 94M589 71L585 73L583 72L577 74L574 77L570 77M592 108L569 91M566 44L566 48L566 50L565 55L566 60L567 62L565 65L566 71L566 74M540 68L542 70M565 121L564 117L565 112L565 109L565 106L565 103L566 98L565 95M544 117L542 100M517 97L521 97L525 96L528 96L532 94L535 94M536 125L512 118M681 71L677 67M681 71L681 78L675 78L675 85L670 85L670 93L665 93M677 67L677 67L645 67M645 67L646 67L646 75L648 75L648 83L649 83L649 91M665 93L649 93L649 91M697 41L702 48M702 48L698 48L698 59L694 59L694 70M691 72L691 71L681 71M673 46L673 56L675 56L675 67L677 67M670 99L665 93M644 65L645 67M646 95L649 91M255 45L277 45L277 51M252 80L246 80L246 75M252 80L265 80L265 74L277 74L277 69M277 69L278 66L278 62L278 59L276 55L277 51M252 80L252 85L255 90L255 94M281 97L281 87L283 87L283 77L284 77M277 69L284 69L284 77M283 20L282 23L284 26L285 32L286 36L287 38L288 42M277 51L281 49L284 45L288 42M309 14L305 45M288 42L305 45M397 72L390 67M397 72L397 80L394 80L394 87L391 87L391 95L389 95M389 95L365 92M365 92L362 74M390 67L386 68L382 70L379 70L376 71L371 71L369 73L366 72L362 74M311 12L328 12L328 18M308 46L305 45M308 46L329 40M329 40L329 29L329 29L329 18L328 18M330 -7L331 -4L330 -0L330 4L332 8L330 12L331 16M331 16L328 18M356 -1L356 -1L356 11M331 16L335 15L339 14L341 14L345 14L350 13L352 12L356 11M105 17L118 17L118 20M105 17L98 21M98 21L98 46L99 46M118 20L118 28L128 28M128 28L128 33M128 33L128 41L121 41L121 50L114 50M114 50L99 46M131 -11L129 -7L129 -4L127 -2L126 3L125 6L124 9L121 13L119 17L118 20M101 -4L103 -4L103 6L105 6L105 17M78 21L88 21L88 21L98 21L98 21M70 43L74 47M74 47L82 47L82 48L89 48L89 48L96 48L96 48M96 48L99 46M150 -4L150 -2L151 3L150 6L151 11L150 13L152 17M152 17L149 19L145 20L141 21L137 23L136 24L131 27L128 28M151 116L151 123L141 123L141 131L131 131M155 144L155 147L146 147M146 147L134 147L134 143M134 143L131 143L131 131M153 66L149 64L148 60M153 66L150 66L150 81L147 81L147 96M148 60L139 60L139 62L131 62L131 65L123 65L123 67M123 67L123 72L124 73L125 78L125 81L127 84L128 89L127 92L128 95M147 96L145 95L139 97L135 96L131 96L128 95M119 65L123 67M119 65L119 50L114 50M147 56L148 60M147 56L128 33M150 99L147 96M122 98L122 101L122 107L122 110L122 112L123 116L122 119L123 122L123 127M122 98L122 95L128 95M131 131L131 127L123 127M152 17L179 13M152 17L162 17L162 36M162 36L175 36L175 39M190 19L187 16L183 15L179 13M190 19L179 19L179 37M179 37L175 39M172 -10L179 -10L179 13M152 17L152 17M147 56L155 56L155 46L162 46L162 36M173 67L173 53L174 53L174 39L175 39M173 67L163 67L163 66L153 66L153 66M194 17L190 19M208 43L208 56L201 56M201 56L198 54L196 51L193 48L190 47L187 43L185 41L182 40L179 37M157 197L155 200L153 203L150 204L147 207M157 197L153 178M147 207L121 202M153 178L153 174L146 174M146 174L139 174L139 174L132 174L132 174L125 174L125 174M121 202L120 199L120 196L121 191L124 188L122 184L123 182L124 178L125 174M125 174L125 174M178 202L180 204M178 202L178 197L157 197M149 229L147 207M177 225L180 204M189 175L178 202M173 163L153 178M120 202L121 202M146 147L147 152L146 156L147 159L146 162L146 166L145 169L146 174M122 157L134 143M122 157L125 174M210 199L223 199L223 205M210 199L210 206L199 206M199 206L199 218L202 218L202 229L204 229M223 205L225 208L225 212L226 216L226 219L229 223L229 225M229 225L204 229M237 193L237 199L230 199L230 205L223 205M208 176L207 180L210 183L209 189L208 193L209 195L210 199M180 204L183 204L186 206L191 205L196 205L199 206M204 229L204 229M230 226L229 225M200 252L202 254M20 164L19 164L19 149M19 149L14 148L10 147L8 146L4 147L0 146L-4 145M19 149L25 121M19 149L19 149M23 119L25 121M23 119L10 119L10 117L-3 117L-3 116M22 89L22 92L25 96L27 100M27 100L23 119M54 335L42 335L42 326M31 356L31 353L30 348L29 345L26 341L28 338L26 333L25 331M42 326L36 326L36 327L31 327L31 329L25 329L25 331M0 330L3 329L7 329L12 327L15 328L18 326M18 326L25 331M226 460L224 458L219 457L217 458L212 456L209 454L206 454M212 486L208 485L203 482L200 482L196 481M206 454L206 462L195 462M195 462L196 481M180 506L180 490M196 481L180 481L180 490M154 481L154 484L163 484L163 486L171 486L171 489L179 489M180 490L179 489M155 463L175 462M155 463L157 440M157 440L169 440L169 435M175 462L179 461L182 457M182 457L179 440M169 435L179 440M152 466L155 463M179 489L175 462M141 432L144 434L147 434L152 437L153 439L157 440M171 412L171 420L171 420L171 427L170 427L170 435L169 435M195 462L182 462L182 457M206 454L202 436M198 432L198 440L179 440M198 432L202 436M200 415L198 432M206 342L201 342L201 333M175 339L178 336L178 333L180 330L182 327M201 333L195 333L195 331L188 331L188 329L182 329L182 327M249 410L240 410L240 410L232 410L232 410M249 410L263 435M263 435L260 434L257 436L250 436L248 436L243 438L241 436L235 439L233 439M228 414L232 410M228 414L229 417L228 423L229 427L231 431L231 434M231 434L233 439M228 385L228 410L232 410M253 406L249 410M263 435L263 435M229 458L230 454L230 451L230 446L232 443L233 439M201 414L228 414M202 436L211 436L211 435L221 435L221 435L231 435L231 434M337 175L340 174L345 173L347 170L351 169M337 175L337 178L336 184L334 186L334 191L333 195M333 195L361 201M351 169L354 173L360 175L363 177M363 177L364 179L363 184L363 188L365 191L366 194L366 198M361 201L366 198M354 152L353 156L352 159L351 163L350 165L351 169M354 152L351 149L348 149L342 146L340 145L336 141M336 141L323 141L323 151M328 169L337 175M330 198L333 195M354 222L351 223L345 221L343 221L340 222L335 221M354 222L356 222L356 215L358 215L358 208L361 208L361 201M354 152L358 149M386 169L386 169M358 149L363 147L365 150L369 148L374 149L376 150L381 148M383 150L381 148M386 169L374 169L374 173L363 173L363 177M185 281L189 280L193 280L199 281L202 280M185 281L185 289L180 289L180 298L175 298L175 306L170 306M202 280L202 284L205 289L205 292L208 296L208 298L209 303M170 306L181 313M181 313L193 313L193 310L204 310L204 307M209 303L204 307M174 273L185 273L185 281M202 280L202 280M154 306L170 306M216 305L209 303M182 327L181 327L181 313M201 333L201 329L203 326L202 321L203 318L203 315L204 311L204 307M169 775L173 771M196 795L197 795L197 785L198 785L198 776M173 771L198 776M160 745L160 747L171 747M173 771L171 747M229 751L199 752M227 775L223 775L220 775L217 776L214 774L210 776L205 776L203 774L198 775M199 752L198 775M198 775L198 776M686 435L696 454M686 435L671 435M696 454L692 457L689 458L686 459L684 463L680 465L679 466L675 467L672 470M671 435L666 440M666 440L666 448L666 448L666 456L666 456L666 464L666 464M672 470L666 470L666 464M660 408L665 408L665 422L671 422L671 435M691 429L693 412M691 429L686 435M636 433L637 436L640 438L643 440M643 440L647 439L651 441L654 440L659 439L663 441L666 440M666 357L673 334M666 357L670 361M670 361L674 363L679 363L682 364L686 365L691 365M691 365L691 358L696 358L696 351L701 351M701 351L695 334M673 334L682 334L682 333L692 333L692 331M692 331L695 334M652 360L652 357L666 357M668 329L673 334M670 382L670 361M697 378L695 382M697 378L691 365M722 379L697 379L697 378M723 355L723 351L701 351M728 330L724 330L722 332L716 333L714 331L711 333L707 333L702 334L700 333L695 334M514 565L521 563M521 563L522 560L522 555L520 551L521 548L521 543L522 539M493 539L492 541M493 539L493 538L502 538L502 538L512 538L512 537L521 537M521 537L522 539M781 538L792 537M781 538L778 543M804 564L796 570M796 570L778 566M778 566L778 566L778 555L778 555L778 543M698 574L697 589M698 574L702 573L705 572L709 571L713 569L717 568L722 567L724 566M699 591L697 589M699 591L703 591L708 591L711 592L714 592L718 591L723 591L726 592M724 566L727 569M727 569L727 589M727 589L726 592M728 609L728 606L727 602L727 599L725 596L726 592M728 609L716 620M716 620L713 619L710 619L705 618M705 618L702 618L702 604L699 604L699 591M622 561L620 534M622 561L618 565M595 536L597 536L601 537L604 534L609 535L614 533L616 535L620 534M595 536L598 536L598 563M618 565L618 563L598 563M575 536L590 531M575 536L567 536L567 565M567 565L579 565L579 567L591 567L591 569M595 536L595 531L590 531M598 563L596 566L591 569M624 614L622 614L622 605L620 605L620 596M624 614L614 628M614 628L592 616M605 596L609 595L613 597L615 596L620 596M605 596L592 616M592 616L592 616M639 588L639 593L648 593M639 588L639 588L626 588M648 593L648 597L650 601L651 604L653 610M653 610L646 619M646 619L635 619L635 616L624 616L624 614M626 588L623 593L620 596M626 588L623 588L623 581L621 581L621 573L618 573L618 565M592 582L596 585L597 587L599 591L603 594L605 596M592 582L592 569L591 569M576 608L573 600M576 608L576 612L584 612L584 616L592 616M573 600L592 582M566 644L566 634L563 634L563 624L560 624M566 644L581 644L581 644M560 624L562 622L566 619L568 616L571 613L572 611L576 608M581 644L587 644L587 630L592 630L592 616M826 380L799 383M825 407L803 407L803 403M803 403L802 403L802 396L800 396L800 389L799 389L799 383M799 366L799 366L799 374L799 374L799 383M799 383L799 383M728 387L728 403L725 403M700 406L700 405L708 405L708 405L716 405L716 405L723 405M725 403L723 405M691 429L709 429L709 430L726 430L726 431M723 405L725 405L725 418L726 418L726 431M706 461L722 458M706 461L696 461L696 454M722 458L727 432M726 431L727 432M797 506L777 510M797 506L797 506L797 496L797 496L797 486M777 510L777 480M777 480L777 482L787 482L787 485L797 485M797 486L797 485M781 538L781 531L778 531L778 523L775 523L775 515L772 515M803 511L800 508L797 506M772 515L777 510M825 492L797 486M797 485L801 485L801 478L805 478L805 471L810 471L810 464M810 464L810 466L823 466M728 609L731 611L735 610L739 611L742 612L747 615L750 614M726 645L725 641L722 637L722 633L719 631L718 627L718 624L716 620M726 645L726 645M726 645L726 643L740 643M750 614L745 614L745 628L740 628L740 643M538 747L540 744M540 744L540 732L537 732L537 721L534 721M516 719L516 718L532 718M534 721L532 718M509 702L511 699M493 673L493 675L503 675L503 677L513 677M513 677L511 699M543 695L541 698L540 701L538 705L537 709L536 711L533 715L532 718M543 695L538 690M511 699L513 699L518 696L520 696L525 695L529 694L533 692L536 691L538 690M14 743L14 739L18 736L18 732L20 727L20 723M20 723L17 722L12 721L11 719L7 718L3 715L-1 715L-4 713M44 722L36 722L36 722L28 722L28 721M20 723L28 721M47 705L46 701M28 721L20 721L20 692M46 701L43 699L38 699L35 696L29 695L27 695L23 694L20 692M373 512L360 512L360 521M373 512L363 489M360 521L337 513M360 488L363 489M360 488L336 492M336 492L337 513M377 481L363 481L363 489M384 513L380 512L375 512L373 512M384 513L385 512M388 488L387 493L387 495L385 501L387 504L385 508L385 512M333 517L337 513M333 543L347 543L347 542L360 542L360 542M360 542L360 521M357 461L358 465L359 468L358 472L360 476L360 479L359 484L360 488M332 487L336 492M385 547L385 544L361 544M385 547L390 566M381 571L385 568L390 566M381 571L377 570L375 570L371 569L367 569L365 568L360 569M361 544L357 563M360 569L357 563M384 513L394 535M394 535L385 535L385 547M360 542L361 544M366 599L366 595L377 595M354 586L360 569M377 595L378 591L377 586L378 582L380 580L380 575L381 571M328 563L357 563M150 572L150 583L148 583M150 572L146 570L142 568L140 565L136 564L133 561L129 559L126 558M148 583L126 592M126 558L126 565L117 565M117 565L116 589M126 592L116 589M155 566L150 572M156 591L156 583L148 583M129 538L126 558M134 615L126 592M98 556L117 565M102 595L105 592L109 592L114 591L116 589M101 615L101 615M101 615L104 615L107 618L111 619L114 619L117 620L121 622L126 622L129 623M125 639L122 639L117 640L113 638L111 638L108 637L103 637L100 637M125 639L120 668M120 668L117 669L112 668L107 667M107 667L97 641M97 641L100 637M101 615L99 619L100 623L101 627L99 628L101 634L100 637M128 637L125 639M120 668L120 668M96 674L107 667M74 646L75 644M74 646L74 654L76 654L76 663L77 663L77 671L79 671M75 644L75 643L83 643L83 642L90 642L90 641L97 641M75 644L75 638L73 638L73 632L72 632L72 626L70 626M362 717L366 717L369 717L372 716L378 716L381 715L385 715L389 716M362 717L359 713L358 710L357 707L356 703L356 699M358 693L356 699M358 693L382 689M389 716L388 712L390 709L389 703L388 700L388 696M388 696L382 689M385 669L384 674L383 679L384 681L382 686L382 689M355 673L361 667M355 673L357 673L357 683L358 683L358 693M412 686L410 687L406 688L403 690L398 692L395 692L391 695L388 696M302 716L302 709L310 709L310 702L317 702M330 721L329 721L329 711L328 711L328 700M317 702L317 700L328 700M356 727L362 727L362 717M356 699L347 699L347 699L338 699L338 699L329 699L329 699M329 699L328 700M306 619L310 650M329 620L332 644M332 644L332 650L310 650M362 621L361 619M354 641L335 645M332 644L335 645M355 673L339 671M335 645L335 671L339 671M290 647L290 649L296 649L296 650L303 650L303 652L309 652M310 650L309 652M329 699L329 696L328 693L328 688L327 686L327 681L326 678M339 671L326 671L326 678M212 724L205 724L205 715M212 724L203 724L203 735L195 735L195 746M205 715L202 717L196 718L193 719L191 719L186 722L183 723L179 724M179 724L179 728L179 732L179 737L179 741M179 741L179 743L184 743L184 744L190 744L190 746L195 746M227 728L212 724M204 698L204 703L205 706L205 710L205 715M199 752L195 746M178 722L179 724M171 747L171 741L179 741M407 743L391 743L391 754M407 743L407 722L409 722M409 722L392 722L392 718M392 718L381 744M381 744L381 754L391 754M414 720L409 722M389 716L392 718M362 744L367 743L370 744L375 743L378 745L381 744M434 747L423 747L423 748L412 748L412 748M434 747L432 770M412 748L413 751L413 755L416 760L416 762L417 766L418 770M418 770L431 771M432 770L431 771M437 742L434 747M407 743L412 748M458 769L432 769L432 770M435 800L434 799M434 799L431 771M391 754L391 765M418 770L408 774M391 765L408 774M362 771L362 775L376 775M391 765L391 768L386 768L386 772L381 772L381 775L376 775M349 798L352 801L356 804M356 804L355 826M176 94L181 92L183 94L187 92L192 92L195 91L199 92M176 94L176 94L176 81L176 81L176 68M199 92L205 69M176 68L179 68L182 67L186 67L190 65L193 65L196 64L200 64M200 64L205 69M173 67L176 68M174 97L176 94M201 56L200 56L200 64M216 70L212 71L209 69L205 69M202 97L201 97L201 106L200 106L200 114L199 114L199 123M202 97L210 97L210 98L218 98L218 98L225 98L225 99M227 118L230 105M227 118L225 117L221 120L217 120L214 122L208 122L206 123L202 124M202 124L199 123M225 99L225 105L230 105M186 124L191 123L195 123L199 123M199 92L202 97M228 79L228 82L226 88L225 90L227 95L225 99M252 100L248 99L245 102L241 101L237 103L233 104L230 105M236 127L227 118M209 143L207 139L206 135L205 132L204 129L202 124M802 -8L800 -8L800 2L798 2L798 12L796 12L796 21M777 -3L782 20M796 21L791 20L790 20L786 21L782 20M797 22L796 21M779 23L782 20M773 45L773 46M749 47L749 47L737 47L737 47L724 47M749 47L747 69M726 74L725 71L724 66L725 63L724 60L723 55L722 52L722 49M726 74L735 74L735 73L744 73L744 72M722 49L724 47M744 72L747 69M753 43L749 47M724 20L724 47M773 73L765 73L765 72L756 72L756 70L747 70L747 69M726 74L726 74M702 48L702 49L712 49L712 49L722 49M751 94L751 86L748 86L748 79L746 79L746 72L744 72M342 69L339 71M342 69L339 69L339 60L335 60L335 51L332 51L332 41M308 46L310 46L310 60L311 60L311 73M329 40L332 41M339 71L311 73M284 77L297 77L297 76L310 76L310 76M311 73L310 76M306 101L306 97L313 97M310 76L313 97M362 97L336 95M362 97L361 118M360 119L361 118M360 119L360 120L348 120L348 120L336 120M336 120L333 118M333 118L327 104M327 104L336 104L336 95M365 92L362 97M342 69L357 69L357 69M362 74L357 69M339 71L338 75L339 78L338 84L337 87L337 91L336 95M336 141L336 141L336 131L336 131L336 120M358 149L360 119M306 133L306 126L319 126L319 118L333 118M313 97L318 99L321 100L323 101L327 104M378 122L381 124M378 122L391 122L391 99M381 124L395 124L395 125L410 125L410 125M391 99L391 107L408 107M408 107L409 107L409 113L409 113L409 119L410 119L410 125M381 148L380 144L381 140L382 138L380 133L380 129L381 124M361 118L378 122M389 95L391 99M410 126L410 125M397 72L406 71M419 95L414 95L414 101L408 101L408 107M49 428L60 428L60 431L71 431L71 435M49 428L49 425L49 420L49 418L49 413L48 410M48 410L51 405M51 405L74 405L74 412M74 412L74 429L76 429M76 429L76 435L71 435M44 433L49 428M69 456L69 445L70 445L70 435L71 435M19 414L23 415L25 412L29 414L34 411L38 412L41 410L43 411L48 410M49 393L51 398L50 400L51 405M81 405L74 405L74 412M97 432L93 431L91 431L87 432L83 430L80 429L76 429M386 169L386 197L391 197M366 198L366 202L379 202M379 202L382 200L386 198L391 197M458 204L449 204L449 204L439 204L439 203M458 204L460 204L460 213L462 213L462 221L463 221L463 230M463 230L437 223M439 203L439 213L438 213L438 223L437 223M462 247L463 247L463 242L464 242L464 236L464 236L464 231M464 231L463 230M435 251L436 251L436 237L436 237L436 223M437 223L436 223M408 276L409 274L409 269L412 266L412 260L413 257L415 253M408 276L404 277L400 275L397 275L393 274L389 275L385 274M381 253L385 253L385 274M381 253L385 253L389 251L392 252L397 252L402 251L406 251L409 251L413 250M413 250L415 253M414 290L408 276M430 254L415 254L415 253M389 306L389 298L385 298L385 290L381 290L381 283L377 283M377 283L377 274L385 274M408 225L408 224M408 225L413 250M436 223L408 223L408 224M284 287L288 285L294 286L297 285L302 284M304 313L313 313L313 305M313 305L302 284M307 256L307 275M307 275L302 284M353 302L355 303L357 308L359 311M353 302L342 302L342 302L330 302L330 302M359 311L358 311L358 317L356 317L356 324L355 324L355 330M330 302L325 307M325 307L325 316L327 316L327 325L330 325M330 325L333 328L335 330L338 333L340 336M340 336L355 330M386 312L382 310L378 313L375 311L371 312L367 312L362 311L359 311M377 283L372 283L372 283L366 283L366 283L361 283L361 283M361 283L353 302M357 332L355 330M313 305L325 305L325 307M330 283L330 302M330 283L327 283L323 280L321 278L317 277L312 277L310 275L307 275M307 337L307 331L319 331L319 325L330 325M336 350L336 336L340 336M773 232L756 234M773 232L787 252M772 261L787 252M772 261L772 253L764 253L764 244L755 244M755 244L756 234M775 230L773 232M755 208L755 217L753 217L753 227L750 227M750 227L756 227L756 234M799 252L787 252L787 252M768 273L771 276M768 273L770 268L771 266L772 261M723 197L726 198M723 197L720 197L718 200L713 201L709 203L706 203L703 206L699 207M726 198L727 228M699 207L704 207L704 224M704 224L723 232M723 232L727 228M715 173L718 173L718 181L721 181L721 189L723 189L723 197M742 196L726 198M689 201L692 204L696 206L699 207M750 227L727 228M696 231L704 224M717 306L707 304M692 331L692 325L694 325L694 319L696 319L696 313L697 313M697 313L701 311L704 306L707 304M666 305L671 302M697 313L684 313L684 308L671 308L671 302M667 272L667 274L673 274L673 277L678 277L678 279L683 279M671 302L673 299L674 297L677 292L678 290L680 285L681 283L683 279M755 244L753 247L750 250L746 252L743 254L741 257M723 232L722 232L722 245M722 245L722 257L741 257M768 273L765 273L761 273L757 274L754 273L750 274L746 276L743 276M741 257L741 266L742 266L742 276L743 276M758 302L741 277M729 298L732 298L732 289L736 289L736 280M736 280L741 277M743 276L741 277M484 165L489 168L490 171L495 173L498 175M462 174L462 178L464 181L465 185L466 187L468 192L469 194M469 194L472 196L475 197L480 198L483 200M498 175L498 187L490 187L490 200L483 200M542 175L533 175L533 176L525 176L525 177L516 177L516 178M542 175L539 175L539 165L536 165L536 155L534 155L534 145M534 145L531 147L526 146L522 147L519 148M512 175L516 178M512 175L514 152M514 152L519 148M539 140L534 145M544 176L542 175M511 119L512 123L513 126L514 131L514 134L516 136L518 140L518 143L519 148M494 142L514 152M498 175L498 175L512 175M572 404L575 407M600 403L586 411M575 407L579 410L582 409L586 411M643 440L643 444L641 449L642 451L641 455L641 460L639 463M666 464L666 469L643 469M639 463L643 463L643 469M644 507L639 488M644 507L640 509L637 511L635 512L631 511L626 512L625 514L620 516M620 516L620 511L615 511M639 488L639 489L629 489L629 490L619 490M615 511L617 508L618 505L618 502L616 497L619 495L619 490M640 488L639 488M640 488L640 469L643 469M614 460L615 460L615 469L615 469L615 478L615 478L615 487M614 460L614 461L627 461L627 463L639 463M619 490L615 487M408 225L403 226L400 226L395 227L391 228M381 253L379 250M379 250L379 239L385 239L385 228L391 228M354 222L361 230M379 202L378 220M361 230L378 220M391 197L395 197L399 201L404 202L407 203M407 203L408 203L408 224M391 228L378 220M355 274L355 260L359 260L359 247L363 247M355 274L338 272M331 260L340 248M331 260L332 262L334 264L336 269L338 272M340 248L363 247M363 247L363 247M361 283L361 274L355 274M379 250L363 250L363 247M330 283L333 279L335 276L338 272M308 256L313 255L317 258L319 258L322 258L327 258L331 260M329 227L340 248M361 230L362 235L361 237L362 242L363 247M408 480L411 485L415 488M385 512L388 509L393 509L396 508L400 507L404 506L406 505M415 488L411 488L411 497L406 497L406 505M434 534L434 536L428 536L428 537L422 537L422 539L417 539M434 534L437 514M411 536L417 539M411 536L412 531L412 527L411 525L411 520L412 517L412 513M437 514L437 514L425 514L425 513L412 513M394 535L411 536M406 505L409 509L412 513M411 458L438 458M443 435L441 455M438 458L441 455M492 647L492 646L504 646L504 646L516 646M517 614L517 619L523 619M523 619L523 632L520 632L520 645L517 645M516 646L517 645M513 677L513 673L521 673M516 646L519 646L519 660L521 660L521 673M523 619L539 619M539 619L540 619L540 629L540 629L540 638L540 638L540 648M517 645L520 645L525 647L529 647L533 646L537 648L540 648M538 690L535 678M521 673L535 678M533 568L533 568L533 579L534 579L534 589M533 568L550 562M562 567L560 591M562 567L550 562M534 589L536 591L539 593L543 595L546 598M546 598L560 598L560 591M518 597L534 589M521 563L533 568M567 565L562 567M573 600L560 591M543 617L544 613L543 608L544 607L545 603L546 598M543 617L539 619M560 624L560 617L543 617M391 43L386 51M391 43L391 35L388 35L388 27L384 27L384 19L380 19M386 51L365 43M365 43L365 34L361 34M361 34L363 31L364 26L364 23M380 19L377 20L371 22L368 21L364 23M409 38L405 39L401 41L398 40L394 43L391 43M390 67L389 63L388 60L385 55L386 51M382 18L380 19M357 69L365 43M332 41L337 40L339 40L342 37L347 37L350 38L353 36L357 36L361 34M356 11L359 15L362 19L364 23M19 149L50 149M25 121L28 121L33 122L36 124L41 123L44 123M44 123L50 149M39 176L51 150M50 149L51 150M25 79L25 78L36 78L36 76L46 76M27 100L31 98L34 100L38 99L43 99L48 101L51 100M51 100L51 94L48 91L48 87L49 84L47 80L46 76M47 51L48 54L49 58L49 62L50 66L49 70L50 72M50 72L46 76M74 283L70 285M46 256L51 281M51 281L70 285M94 310L90 310L87 308L84 309L80 309L76 307L73 309L69 308M70 285L69 308M67 326L66 311M69 308L66 311M719 542L724 566M719 542L719 540L709 540L709 538L699 538M698 574L696 573L693 568L692 566L688 563M699 538L695 538L695 546L692 546L692 555L688 555L688 563M703 510L694 510L694 521M703 510L702 507L700 503L699 500L697 497L697 492L694 490L694 485M694 521L691 520L687 518L685 515L680 514L680 512L674 510L672 509M672 509L674 504L673 500L672 497L673 493L676 491L675 487M694 485L677 485M677 485L675 487M699 481L699 477L702 475L701 470L703 467L706 465L706 461M699 481L694 485M672 470L672 485L677 485M640 488L643 488L647 487L651 486L654 487L659 486L663 487L666 488L670 488L675 487M492 513L501 513L501 512L509 512L509 510L518 510L518 509M492 513L492 522L492 522L492 530L493 530L493 539L493 539M521 537L521 534L521 529L520 526L520 522L519 517L519 512L518 509M518 509L518 509M522 539L522 538L535 538M550 562L549 562L549 554L548 554L548 546M548 546L548 538L535 538M575 536L572 534L567 534L564 532L561 530M548 546L561 530M489 430L485 434M455 432L465 436M485 434L485 435L475 435L475 436L465 436M584 690L593 701M596 666L597 666M593 701L596 701L599 700L603 697L608 697L609 697L613 696L616 694M616 694L617 694L617 686L617 686L617 679L617 679L617 671M597 666L617 671M581 644L591 651M614 628L614 632M591 651L594 650L597 646L601 643L602 640L606 639L608 637L611 634L614 632M747 566L748 565M747 566L749 566L749 578L751 578L751 590M748 565L748 567L762 567L762 568L776 568M753 592L751 590M753 592L773 586M773 586L776 568M719 542L720 541M749 541L746 540L741 542L737 541L736 543L731 542L729 542L723 541L720 541M749 541L750 542M750 542L750 549L749 549L749 557L749 557L749 565L748 565M727 569L731 568L735 566L738 566L743 566L747 566M727 589L727 590L739 590L739 590L751 590M778 566L776 568M778 543L750 543L750 542M751 614L750 614M751 614L750 610L751 608L751 602L752 599L753 594L753 592M782 599L793 599L793 596L805 596L805 593M782 599L782 586L773 586M805 593L801 593L801 581L796 581L796 570M771 356L771 361L771 363L772 367L772 372L773 374L772 378L773 381L773 386M749 382L752 383L754 386L758 388M758 388L760 388L765 388L769 387L773 386M799 383L799 386L773 386M773 386L773 386M729 755L737 755L737 750L745 750L745 745M729 755L725 772M745 745L758 745L758 750M725 772L747 777M747 777L748 774L748 771L751 766L752 764L755 761L754 756L756 754L758 750M753 715L753 719L749 719L749 724L745 724L745 728L741 728M753 715L753 722L766 722M741 728L741 736L743 736L743 745L745 745M758 750L758 748L771 748M766 722L768 722L768 735L771 735L771 748M822 626L807 620M807 620L807 617L806 613L806 609L806 604L807 602L805 597L805 593M825 590L815 590L815 591L805 591L805 593M805 593L805 593M767 675L769 692M767 675L767 669L755 669M749 673L749 669L755 669M749 673L748 677L748 680L747 684L747 687L746 693L745 695L745 699M769 692L751 704M745 699L751 704M728 671L749 673M728 671L728 658L727 658L727 645L726 645M740 643L754 650M754 650L755 669M753 715L751 704M766 722L781 714M776 696L776 714L781 714M776 696L776 692L769 692M751 614L751 616L761 616L761 619L771 619M754 650L754 643L768 643M768 643L771 619M782 599L777 616M807 620L794 625M794 625L777 616M777 616L771 619M802 821L805 804M805 804L812 804L812 802L819 802L819 800L826 800L826 797M417 539L415 543L417 546L417 550L416 553L414 557L414 561L414 564L414 569M390 566L399 566L399 569L408 569L408 573M414 569L414 573L408 573M440 539L440 534L434 534M442 565L437 569M414 569L414 569L437 569M466 590L466 596L442 596M437 569L442 596M20 692L19 691M-1 696L-1 693L9 693L9 691L19 691M299 688L316 673M299 688L288 688L288 690M288 690L288 675L283 675M283 675L283 667L296 667L296 658L309 658M309 658L310 661L314 666L314 669L316 673M317 702L317 695L308 695L308 688L299 688M326 678L326 673L316 673M283 700L284 697L285 693L288 690M276 669L279 671L283 675M309 652L309 658M672 637L689 639M672 637L673 633L672 630L671 628L670 623L671 618L671 617L670 612M689 639L692 636L691 633L695 627L696 625L698 621M698 621L698 615L686 615L686 609L675 609M670 612L675 609M653 610L670 612M646 619L647 636M647 636L653 636L653 638L660 638L660 639L666 639L666 641M666 641L672 641L672 637M726 645L698 654M705 618L698 618L698 621M698 654L697 652L695 648L693 644L690 643L689 639M680 595L689 595L689 592L697 592L697 589M680 595L678 599L677 601L677 605L675 609M666 582L666 589L673 589L673 595L680 595M666 582L666 585L660 585L660 589L654 589L654 593L648 593M382 821L381 821L381 815L381 815L381 810L380 810L380 804M409 827L409 803L411 803M384 799L403 797M384 799L380 804M411 803L406 800L403 797M356 804L368 804L368 804L380 804L380 804M434 799L411 799L411 803M376 775L377 780L377 782L380 786L380 789L381 791L383 794L384 799M408 774L408 797L403 797M442 182L429 169M442 182L442 197L435 197M435 197L415 195M415 195L414 175M414 175L429 169M460 174L442 182M436 151L436 169L429 169M469 194L458 194L458 204M439 203L435 203L435 197M407 203L415 203L415 195M407 169L412 171L414 175M685 279L689 281L691 282L695 285L699 286L701 290M685 279L697 256M701 290L718 273M718 273L718 267L716 267L716 262L713 262L713 256L710 256M697 256L710 256L710 256M707 304L701 290M683 279L685 279M693 251L697 256M736 280L727 280L727 276L718 276L718 273M722 245L710 256M464 231L468 230L471 228L474 227L479 226L481 224L484 222L489 220M483 200L483 209L489 209M489 220L489 209L489 209M494 256L499 229M489 220L499 220L499 229M527 245L525 242L525 238L523 233L520 232L519 227M499 229L519 227M622 431L620 432M586 411L590 411L590 421L594 421L594 431M594 431L598 432L601 430L605 433L609 431L613 432L617 433L620 432M614 460L614 459M620 432L614 459M536 431L537 431M575 407L568 407L568 423L561 423L561 438M537 431L541 432L543 433L547 433L550 435L554 436L558 438L561 438M492 513L492 513M518 509L518 492L520 492M512 479L520 492M512 479L508 480L506 482L501 483L498 485L495 487L491 488M491 488L491 488L491 500L492 500L492 513M540 671L542 649M540 671L544 669L547 671L553 671L557 670L561 669L564 669M542 649L565 645M564 669L565 669L565 645M535 678L537 673L540 671M540 648L542 649M567 691L563 694L560 697M565 670L564 669M543 695L548 695L548 696L554 696L554 696L560 696L560 697M566 644L565 645M597 666L594 666L594 659L591 659L591 651M48 120L48 122L56 122L56 124L64 124L64 127L72 127M48 120L49 116L49 112L50 110L51 106L53 102M72 127L71 127L71 113L71 113L71 99M53 102L57 102L59 102L62 101L67 100L71 99M44 123L48 120M51 100L53 102M122 157L120 155L116 154L113 152L109 150L107 149L103 146L100 145M123 127L119 129L114 130L113 130L108 130M100 145L108 130M72 98L74 76M72 98L85 98L85 101L97 101L97 104M76 74L95 75M76 74L74 76M98 76L105 76L105 97M98 76L95 75M105 97L105 104L97 104M50 72L53 72L57 74L62 73L66 74L69 76L74 76M71 99L72 98M72 127L75 129M75 129L86 129L86 121L97 121L97 113M97 113L97 108L97 104M74 47L74 50L74 55L74 59L74 62L75 65L76 71L76 74M96 48L95 52L96 57L95 59L96 64L97 66L96 70L95 75M119 65L119 71L108 71L108 76L98 76M122 98L116 98L112 98L110 96L105 97M108 130L102 130L102 122L97 122L97 113M44 287L44 307M44 287L39 285L35 286L33 285L29 285L26 285M26 285L17 298M44 308L41 308L38 307L34 309L30 308L26 309L23 309M44 308L44 307M17 298L18 301L20 304L23 309M51 281L46 285L44 287M66 311L44 307M21 276L24 280L26 285M-1 298L8 298L8 298L17 298L17 298M42 326L41 321L42 318L44 315L42 310L44 308M18 326L21 326L21 317L23 317L23 309M757 823L755 820L753 817L752 812L751 809L748 805L746 802M746 802L746 804L737 804L737 805L728 805M722 822L722 814L725 814L725 805L728 805M771 796L773 798M771 796L773 791L772 789L775 786L774 782L775 779L776 775L777 772M773 798L777 797L781 797L785 798L788 797L792 796L795 796L798 796M798 796L799 792L798 788L798 785L796 780L797 776M797 776L780 776L780 769M777 772L780 769M770 821L773 798M752 791L750 796L748 799L746 802M752 791L771 796M752 791L749 779M749 779L753 779L755 778L758 776L763 776L766 775L771 772L774 772L777 772M805 804L798 796M749 779L747 777M771 748L774 749M774 749L775 754L777 757L777 761L779 765L780 769M725 772L724 773M728 805L722 796M722 796L724 773M706 826L706 812L702 812L702 799L698 799M722 796L719 797L713 797L710 798L706 799L702 798L698 799M666 582L668 569M688 563L688 564L675 564M668 569L675 564M639 588L648 561M668 569L648 561M699 538L696 533M696 533L693 534L688 534L683 534L682 535L676 536L674 536L669 539L665 538M675 564L665 538M622 561L644 561L644 556M648 561L644 556M615 511L608 511L608 512L600 512L600 514L593 514L593 516M615 487L607 487L607 488L599 488L599 488L590 488L590 488M590 488L589 489M589 489L593 516M620 516L623 532M590 531L590 528L590 524L590 520M623 532L620 534M590 520L593 516M518 509L521 510L525 510L530 511L535 512L538 512M535 538L537 535L538 530L539 529L542 524L541 522L543 518M538 512L543 512L543 518M561 530L561 522L557 522M543 518L543 522L557 522M590 520L565 509M557 522L565 509M589 489L586 490L582 490L578 489L574 489L568 489L565 489M565 509L565 489M481 479L481 483L471 483L471 487L461 487M481 479L485 463M461 487L461 482L461 478L462 476L461 473L460 468L460 464L460 460M485 463L482 459M482 459L482 459L476 459L476 459L470 459L470 458L464 458M460 460L464 458M512 479L512 464L512 464M512 464L503 464L503 464L494 464L494 463L485 463L485 463M491 488L481 479M517 439L515 439L515 461M485 434L482 459M515 461L512 464M465 436L465 440L464 445L464 448L463 452L463 454L464 458M441 455L460 460M537 485L536 482L537 476L537 472L537 468M537 485L550 492M564 489L562 491L558 489L555 491L550 492M564 489L562 489L562 477L560 477L560 466M560 466L556 465L552 465L549 464L545 464M537 468L545 468L545 464M520 492L520 490L525 490L525 487L531 487L531 485L537 485M515 461L515 464L526 464L526 468L537 468M538 512L550 492M565 489L564 489M537 431L545 464M634 670L648 670L648 664M634 670L623 670L623 667M623 667L623 660L624 660L624 652L625 652L625 644L626 644M648 664L646 636M646 636L626 644M617 671L623 671L623 667M614 632L626 644M647 636L646 636M666 641L666 641L666 649L666 649L666 657L666 657L666 665M666 665L666 665L657 665L657 664L648 664M725 403L725 411L754 411M727 432L727 432L750 432M750 432L752 432L752 422L754 422L754 411M758 388L757 388L757 395L756 395L756 402L756 402L756 410M754 411L756 410M773 386L778 413M756 410L778 413M723 491L725 489M723 491L724 491L724 505M725 489L729 488L731 488L735 486L739 487L743 487L747 486M724 505L731 505L731 511M731 511L736 511L739 510L742 512L746 513L750 512M752 511L753 511L753 502L755 502L755 494M752 511L750 512M755 494L752 491L748 489L747 486M699 481L711 481L711 486L723 486L723 491M722 458L728 458L728 463M728 463L728 472L727 472L727 481L726 481L726 489L725 489M703 510L724 505M728 463L730 464L735 464L739 464L743 465M743 465L743 472L744 472L744 479L746 479L746 486L747 486M720 541L731 511M696 533L694 533L694 521M749 541L749 527L750 527L750 512L750 512M772 515L767 515L765 513L760 513L756 511L752 511M777 480L775 478M775 478L773 481L768 484L766 484L763 487L761 488L757 491L755 494M820 688L806 695M806 695L803 714M825 722L803 714M806 695L802 692L800 691L796 687M796 687L791 689L789 691L786 691L782 692L780 695L776 696M781 714L797 719M803 714L803 719L797 719M774 749L774 744L785 744L785 739L795 739M797 719L796 723L796 727L797 732L796 735L795 739M800 774L802 744M800 774L797 776M802 744L795 744L795 739M775 648L778 647L784 646L787 643L790 644L794 641M775 648L776 652L777 654L779 657L781 660L781 665L783 668M797 664L801 648M797 664L790 664L790 670M801 648L794 641M790 670L783 668M768 643L772 645L775 648M794 625L794 641M767 675L783 668M823 668L818 667L817 668L812 667L808 666L804 665L801 665L797 664M823 642L823 645L812 645L812 648L801 648M796 687L794 684L793 681L793 677L792 673L790 670M800 774L825 769M802 744L802 746L813 746L813 747L824 747M377 595L377 599L390 599M408 573L408 582M390 599L392 595L396 593L399 592L399 588L402 586L407 583L408 582M373 623L396 613M390 599L392 602L394 605L395 608L396 613M15 627L16 630L18 635L18 640M-3 651L18 640M19 691L21 688L22 684L23 681L24 677L26 675M-7 663L-3 663L-0 667L3 667L8 668L12 669L14 670L19 672L22 674L26 675M728 671L726 674M745 699L722 697M722 697L726 674M698 654L694 654L694 666M726 674L723 673L718 672L716 673L713 671L707 671L704 669L701 668L697 666L694 666M666 665L668 668M694 666L694 666M668 668L671 668L676 668L679 668L683 668L686 667L692 667L694 666M678 806L676 818M678 806L672 806L672 799M672 799L672 801L653 801M652 822L652 819L653 815L653 812L652 807L653 805L653 801M698 799L698 799M698 799L696 799L690 801L689 802L685 803L682 805L678 806M574 801L580 801L580 800L586 800L586 800L591 800L591 799M574 801L566 825M591 799L596 823M570 796L574 801M516 194L514 198M516 194L536 205M514 198L515 202L516 206L517 209L516 211L517 216L519 219L520 223L520 226M536 205L537 209L535 213L536 218M536 218L520 226M516 178L516 183L517 187L516 191L516 194M489 209L514 198M548 193L536 205M519 227L520 226M544 221L536 218M563 440L563 444L563 447L564 451L565 456L565 459M563 440L563 438L591 438M565 459L578 459L578 460L591 460L591 460M591 438L593 459M591 460L593 459M561 438L563 440M560 466L565 459M594 431L591 438M590 488L591 483L589 480L591 476L591 473L591 469L592 463L591 460M614 459L604 459L604 459L593 459L593 459M461 487L476 512M461 487L450 487L450 489L440 489L440 491M439 511L439 511L439 504L439 504L439 498L439 498L439 492M439 511L439 515L453 515L453 520L467 520M467 520L476 512M439 492L440 491M492 513L476 513L476 512M461 487L461 487M438 458L438 460L440 465L439 469L438 473L438 476L439 481L439 483L441 487L440 491M415 488L415 490L423 490L423 491L431 491L431 492L439 492M437 514L439 511M463 538L463 535L465 530L465 527L465 524L467 520M67 152L71 149L72 146L76 142M67 152L67 164L70 164M76 142L100 146M70 164L75 164L75 168L80 168L80 172L85 172L85 177M100 146L96 174M85 177L85 177L92 177M96 174L92 177M51 150L54 151L60 151L63 151L67 152M75 129L76 129L76 142M51 187L70 187L70 164M100 145L100 146M65 203L65 190L75 190L75 177L85 177M125 174L96 174M99 199L98 194L96 191L97 187L95 184L93 181L92 177M665 538L647 545M665 538L663 538L663 530L662 530L662 523L661 523L661 515M649 512L649 515L661 515M649 512L637 533M637 533L647 545M644 556L644 545L647 545M665 538L665 538M672 509L661 515M644 507L649 512M623 532L623 533L637 533M743 465L755 465L755 460M750 432L755 436M755 436L756 439L755 442L755 446L755 449L755 454L756 458L755 460M775 478L772 468M772 468L755 460M417 594L417 607L411 607L411 619L406 619M417 594L417 597L428 597L428 600L439 600M439 607L436 612L436 614L433 617L430 619L428 622M439 607L439 600M428 622L406 619M406 619L406 619M408 582L417 582L417 594M396 613L406 619M442 596L439 600M436 644L436 633L432 633L432 622L428 622M461 623L461 615L450 615L450 607L439 607M400 641L402 641L402 634L404 634L404 627L406 627L406 619M38 642L38 645L27 645M38 642L52 651M27 645L27 648L27 652L27 654L28 660L27 663L28 665L27 670L28 673M52 651L53 654L52 657L52 661L53 667L52 670L52 674M28 673L34 673L34 674L40 674L40 676L45 676L45 677M52 674L45 677M49 621L49 631L43 631L43 642L38 642M18 640L24 643L27 645M74 646L71 647L67 648L64 649L59 648L55 650L52 651M26 675L28 673M71 678L65 678L65 677L58 677L58 675L52 675L52 674M46 701L46 689L45 689L45 677L45 677M560 697L568 722M593 701L593 716L591 716M591 716L568 722M534 721L534 721L545 721L545 722L556 722L556 723L567 723M568 722L567 723M540 744L544 743L548 743L552 742L555 742L558 742L561 743L566 742M567 723L567 723L567 732L566 732L566 742M624 823L621 811M653 801L649 797L649 795L646 791L643 789M643 789L632 789L632 800L621 800L621 811M729 755L718 740M724 773L704 769M718 740L715 742L712 744L709 748L704 751L702 754L699 755M699 755L704 769M698 799L698 789L696 789L696 778L694 778M704 769L702 772L698 774L694 778M672 799L674 796L674 791L674 789L674 784L676 780L675 777M694 778L685 778L685 778L675 778L675 777M648 775L648 781L643 781M648 775L672 775M643 789L643 789L643 781M675 777L672 775M722 697L721 698M694 666L696 687M696 687L707 696M721 698L718 698L715 696L710 697L707 696M741 728L731 728L731 727L721 727L721 725M721 698L720 701L721 705L722 709L720 714L721 717L722 720L721 725M718 740L718 740L718 728M721 725L718 728M612 728L614 742M612 728L617 724M644 750L641 750L637 750L633 750L628 751L624 751L621 750M644 750L647 747M647 747L640 727M614 742L617 744L618 748L621 750M640 727L632 727L632 726L624 726L624 725L617 725L617 724M616 694L619 697L622 701M612 728L600 724M591 716L591 724L600 724M622 701L617 701L617 724M668 668L668 675L666 675L666 683L665 683L665 690L663 690M696 687L692 690L690 692L687 693L682 695L681 695L677 697L674 699M674 699L674 690L663 690M634 670L636 673L639 676L640 679L641 683L644 687L646 691L649 693M663 690L649 690L649 693M640 727L646 716M622 701L622 702L642 702M646 716L646 713L643 709L643 705L642 702M649 693L642 702M803 403L802 406M778 413L778 413M802 406L778 406L778 413M567 770L567 769L581 769L581 767L594 767M567 770L567 770L567 756L566 756L566 742M566 742L576 742L576 743L586 743L586 744M586 744L586 753L594 753M594 767L594 753L594 753M563 776L567 770M566 742L566 742M600 724L586 744M614 742L610 742L609 745L604 747L601 749L597 750L594 753M593 798L609 801M593 798L598 770M609 801L615 801L615 789L621 789L621 777M598 770L601 770L605 769L611 770L614 769M621 777L618 773L614 769M591 799L593 798M621 811L621 801L609 801M594 767L598 770M643 781L621 781L621 777M621 750L621 760L618 760L618 769L614 769M644 750L648 775M692 748L692 753L674 753M692 748L692 748L692 737L693 737L693 726M663 742L672 721M663 742L674 753M690 723L693 726M690 723L676 723L676 718M676 718L672 721M699 755L696 752L695 751L692 748M672 775L674 753M718 728L693 726M647 747L663 742M646 716L650 718L654 719L656 719L662 718L665 719L669 720L672 721M707 696L705 698L704 701L701 704L700 708L698 712L697 715L693 716L693 721L690 723M674 699L675 703L674 706L675 710L676 716L676 718M777 433L777 437L778 441L781 443L781 448L781 450L783 455M777 433L777 432M777 432L803 431M783 455L783 455L803 455M803 455L808 435M808 435L803 431M755 436L777 433M772 468L776 465L777 462L781 457L783 455M778 413L777 432M802 406L801 409L802 413L802 417L802 420L802 424L803 426L803 431M810 464L808 459L805 458L803 455M823 433L818 434L816 434L811 435L808 435" stroke="#646566"/>
<path d="M6.0 708.0 L8.8 705.0 L12.0 703.0 L15.5 701.1 L18.7 700.1 L22.0 699.0 L25.1 699.5 L29.5 700.0 L31.0 705.0 L27.0 709.0 L29.7 708.6 L33.1 707.8 L37.0 708.0 L40.2 707.5 L43.1 705.6 L47.0 705.0 L47.5 709.0 L47.8 711.5 L48.0 715.0 L53.0 717.6 L53.7 720.2 L53.0 724.0 L57.0 724.2 L60.0 725.0 L62.8 727.0 L66.5 730.0 L69.3 729.2 L72.6 727.5 L72.9 731.4 L74.0 735.0 L76.7 737.3 L79.0 740.0 L82.1 740.4 L85.0 742.0 L87.4 742.3 L91.0 743.5 L94.4 744.9 L96.9 746.7 L100.2 747.8 L103.4 749.6 L107.0 751.5 L109.4 753.0 L113.0 754.6 L116.0 754.5 L119.3 753.0 L122.7 752.1 L125.0 752.0 L128.2 753.7 L131.2 754.7 L135.0 756.0 L137.6 754.6 L141.9 752.9 L145.3 750.9 L148.0 749.6 L150.7 747.8 L152.9 745.7 L155.7 744.5 L157.6 742.0 L156.0 739.3 L153.9 736.5 L153.2 734.0 L152.0 730.1 L150.0 727.5 L150.7 724.4 L151.1 720.8 L152.7 717.6 L155.9 719.6 L160.0 722.6 L160.9 725.6 L162.5 727.4 L164.3 730.9 L166.0 733.0 L167.4 735.9 L170.1 739.5 L172.0 742.0 L174.4 745.0 L175.7 746.9 L177.8 750.0 L180.0 752.0 L183.3 753.2 L184.9 755.0 L188.0 757.0 L190.6 758.0 L194.1 758.7 L197.0 760.0 L200.3 758.4 L205.0 757.0 L202.8 754.1 L201.6 751.3 L199.0 748.0 L197.3 745.7 L195.7 742.4 L194.3 740.9 L192.0 738.0 L190.5 735.1 L187.8 731.2 L186.0 728.0 L184.1 724.9 L182.7 720.7 L182.0 718.0 L183.6 713.5 L186.0 710.0 L187.8 706.4 L190.0 704.0 L190.3 699.5 L192.0 696.0 L188.4 695.3 L186.0 695.0 L181.8 693.0 L179.0 690.0 L177.9 686.5 L176.5 684.0 L176.9 680.3 L178.0 677.0 L180.8 674.7 L184.0 673.5 L188.0 674.4 L191.0 674.0 L194.0 672.5 L197.0 671.0 L199.4 668.2 L203.0 666.5 L205.3 662.9 L208.0 660.0 L211.0 656.0 L213.0 653.0 L215.3 653.0 L219.0 651.7 L218.0 656.7 L221.0 655.4 L224.0 655.0 L229.0 653.0 L232.1 650.6 L235.0 649.5 L238.0 648.8 L241.0 646.8 L245.0 646.4 L248.0 645.5 L251.1 646.0 L254.8 646.8 L257.9 648.8 L262.0 650.0 L265.2 651.9 L268.4 653.0 L271.5 652.1 L275.0 652.0 L278.3 653.7 L280.7 654.0 L283.6 651.9 L285.6 649.0 L289.0 651.0 L293.0 649.0 L295.9 651.3 L298.0 653.0 L303.0 655.4 L305.0 658.0 L305.0 654.7 L305.5 650.7 L306.0 648.0 L305.8 643.7 L307.0 640.0 L307.1 636.3 L307.8 632.0 L309.5 628.9 L310.0 626.0 L312.7 623.4 L317.0 622.5 L320.0 624.6 L320.9 628.5 L320.5 631.0 L321.5 633.8 L321.3 637.0 L322.3 639.6 L324.0 643.0 L325.3 645.6 L327.5 649.0 L329.4 652.1 L331.0 654.0 L333.5 656.5 L335.0 659.0 L338.2 659.7 L341.0 659.5 L343.4 659.0 L347.0 658.0 L352.0 656.5 L354.6 652.0 L354.4 649.4 L353.0 646.0 L355.5 643.5 L358.0 647.0 L361.0 652.0 L357.0 654.7 L360.4 654.1 L363.0 653.5 L365.5 653.0 L369.0 651.7 L371.8 651.5 L375.0 650.5 L377.2 647.1 L378.0 644.0 L377.4 641.0 L377.4 636.2 L376.7 633.0 L379.0 637.0 L382.0 641.0 L382.5 637.0 L384.0 634.0 L386.6 630.8 L388.0 636.0 L387.8 639.4 L392.0 641.0 L396.5 643.0 L393.8 644.9 L390.0 646.0 L392.8 647.0 L396.5 647.0 L400.3 646.9 L402.6 646.4 L406.0 646.0 L408.6 645.2 L413.0 646.0 L415.5 646.3 L418.6 645.6 L421.7 647.3 L425.0 648.0 L429.0 648.6 L432.0 650.0 L434.8 650.4 L437.9 651.5 L441.1 651.9 L444.6 652.7 L447.2 654.1 L450.6 654.3 L454.0 655.7 L457.0 656.0 L459.9 658.2 L463.0 659.3 L466.0 660.2 L469.0 662.5 L471.4 663.8 L473.3 666.3 L476.1 667.6 L479.4 669.4 L481.6 671.0 L483.8 672.9 L486.6 675.1 L488.4 676.7 L491.4 678.5 L493.4 680.6 L496.6 683.3 L498.7 686.0 L501.0 688.0 L503.7 690.5 L505.4 693.2 L507.4 695.8 L506.7 699.7 L506.0 703.0 L507.6 706.0 L509.3 709.5 L511.0 711.8 L514.3 711.9 L517.0 711.0 L520.8 711.1 L523.4 711.8 L526.3 714.3 L529.0 715.5 L532.2 716.7 L534.5 719.0 L539.0 716.5 L543.0 714.0 L548.0 712.0 L553.0 710.5 L555.0 708.2 L558.0 706.0 L559.9 703.6 L562.9 702.0 L564.8 699.7 L567.8 697.0 L570.6 695.6 L572.7 693.0 L576.5 691.0 L580.0 689.6 L585.0 690.8 L583.9 687.4 L583.8 683.4 L587.0 680.0 L590.0 677.0 L593.5 675.5 L597.0 674.8 L602.0 674.0 L607.0 674.0 L611.0 675.0 L614.6 677.0 L618.0 680.0 L622.0 683.4 L627.0 685.5 L631.8 688.0 L634.6 690.0 L637.0 693.0 L639.9 696.2 L641.7 698.0 L642.9 701.2 L644.8 703.0 L646.6 705.6 L651.0 709.0 L654.4 712.0 L656.5 714.0 L656.4 717.6 L657.3 721.1 L657.7 725.0 L662.0 729.0 L666.0 732.7 L667.6 735.1 L670.0 738.0 L673.7 742.6 L676.1 744.4 L678.0 747.4 L680.0 750.0 L680.2 753.1 L681.9 756.7 L682.0 760.7 L683.5 763.4 L686.0 760.0 L689.7 757.0 L694.0 757.5 L699.0 758.8 L701.5 763.0 L703.7 768.0 L705.1 771.7 L705.2 773.7 L706.8 777.0 L709.3 779.9 L713.0 782.0 L713.2 784.5 L713.9 788.6 L714.5 791.0 L715.8 793.7 L715.7 797.6 L717.0 800.0 L718.6 803.3 L720.0 806.0 L716.4 805.4 L714.3 805.9 L710.4 806.6 L708.2 806.4 L704.4 806.5 L701.4 806.5 L698.9 805.8 L696.1 806.6 L692.7 805.5 L690.0 805.6 L686.5 805.5 L683.4 805.6 L680.7 805.7 L678.4 805.7 L675.0 805.5 L671.8 805.3 L668.7 805.3 L666.3 806.1 L662.6 806.0 L660.6 805.4 L657.4 805.9 L654.0 806.5 L650.9 806.0 L648.3 806.7 L644.8 806.5 L642.3 806.2 L638.9 805.8 L635.4 805.5 L632.4 806.3 L629.7 805.5 L626.4 806.5 L624.5 806.2 L620.7 805.6 L617.7 805.9 L614.5 805.9 L611.7 806.6 L609.7 806.1 L605.6 806.7 L602.7 805.8 L599.3 805.8 L597.0 806.0 L593.6 806.0 L590.3 805.7 L587.4 805.9 L584.4 805.3 L581.7 805.6 L579.1 806.0 L576.4 806.2 L573.3 806.5 L569.8 805.8 L567.7 805.5 L564.3 806.2 L560.4 806.5 L558.5 806.2 L555.3 806.4 L551.5 806.0 L549.0 806.5 L546.4 806.5 L543.1 806.5 L540.3 806.3 L536.6 805.3 L533.5 805.8 L530.4 806.5 L528.1 806.2 L525.2 806.3 L522.0 805.3 L519.4 806.3 L516.0 806.0 L513.2 805.4 L510.3 805.7 L506.4 805.7 L504.3 805.6 L501.3 806.7 L498.0 805.8 L495.0 806.3 L492.4 806.2 L489.2 805.4 L485.5 805.7 L483.3 805.7 L480.1 805.3 L476.4 805.7 L474.2 806.3 L471.2 805.7 L468.0 806.0 L465.0 805.5 L462.6 805.6 L459.7 806.6 L455.3 805.9 L453.4 806.7 L449.9 805.7 L446.6 806.6 L443.6 806.1 L440.5 806.0 L438.6 805.5 L435.4 806.0 L432.5 806.3 L428.6 806.6 L426.0 805.3 L422.3 806.0 L419.9 805.7 L416.5 805.8 L413.7 806.5 L410.3 806.4 L408.5 805.5 L405.6 806.3 L402.6 805.7 L398.8 805.9 L396.7 806.1 L392.8 805.9 L389.7 805.4 L386.4 806.5 L383.7 806.6 L380.6 805.7 L378.0 805.6 L374.8 806.6 L372.5 806.4 L369.2 806.6 L366.6 806.1 L363.3 805.4 L360.3 805.9 L357.4 806.2 L353.7 805.4 L351.6 805.5 L348.0 805.8 L344.7 806.3 L342.7 805.7 L339.2 805.7 L336.1 805.9 L332.5 805.5 L329.6 806.6 L327.0 805.6 L324.6 806.7 L320.9 805.5 L317.6 805.4 L314.8 805.4 L311.6 805.7 L309.1 806.5 L306.3 805.9 L302.9 806.0 L299.8 805.8 L296.4 805.7 L294.7 805.5 L291.0 806.2 L288.5 805.6 L284.7 805.6 L281.9 805.9 L279.6 806.5 L276.5 805.3 L272.3 806.3 L270.6 806.0 L267.1 805.3 L263.8 806.6 L261.5 806.5 L258.7 805.6 L254.5 805.5 L252.0 806.3 L249.6 806.3 L246.2 806.4 L242.9 806.1 L239.4 806.4 L236.6 806.6 L234.2 805.7 L230.5 805.7 L228.2 806.3 L224.5 805.4 L222.0 806.1 L218.8 805.6 L216.1 805.3 L212.7 805.9 L210.6 806.2 L207.5 806.0 L203.6 805.6 L201.6 806.3 L197.7 805.3 L195.0 806.2 L191.9 805.7 L189.2 806.6 L185.6 805.3 L182.8 805.9 L180.3 805.6 L177.4 806.3 L174.0 805.6 L171.7 805.7 L168.4 805.6 L164.6 806.4 L161.7 806.6 L159.0 805.6 L155.6 805.9 L153.2 806.6 L149.5 805.9 L146.6 806.7 L143.5 805.4 L140.4 805.9 L138.6 806.5 L135.3 806.7 L132.6 805.8 L128.6 806.6 L126.3 805.3 L123.2 805.8 L119.8 805.8 L116.5 805.3 L113.7 805.8 L111.6 805.5 L108.6 805.6 L104.8 806.5 L102.5 805.9 L98.4 806.0 L95.8 806.6 L92.6 805.8 L90.6 805.3 L86.9 806.4 L84.4 805.4 L80.3 805.4 L78.6 805.7 L75.3 806.6 L71.8 805.7 L69.6 806.2 L65.7 806.3 L62.7 805.7 L59.3 806.4 L57.6 806.2 L54.6 805.3 L50.6 806.0 L48.6 806.6 L44.8 805.7 L41.9 806.0 L39.6 805.6 L36.4 806.3 L33.5 806.4 L30.2 805.8 L26.7 805.8 L24.4 805.4 L20.6 806.4 L17.6 805.4 L14.3 806.1 L11.8 806.7 L9.5 806.7 L6.0 806.0Z" fill="#004364" stroke="#000" stroke-width="1" stroke-linejoin="round"/>
<path d="M6 709V806H719" fill="none" stroke="#004364" stroke-width="2.5"/>
<path d="M518.5 710.5L524 708L530.8 708L536 705L540.7 703L548 702L546.8 706.8L552 704L558 702L563 698.5L567.8 695.8L572 692L577.6 689.6L580 689.6L572.7 693L562.9 702L553 710.5L543 714L534.5 719L523.4 711.8Z" fill="#004364" stroke="#000" stroke-width="0.8"/>
<path d="M523 713.5L533 717M536 716.5L548 712M551 710.5L566 700.5" fill="none" stroke="#000" stroke-width="1.4"/>
<path d="M509 697L512 700L513.5 706L512.5 711L510.5 711L508.5 704Z" fill="#004364" stroke="#000" stroke-width="0.7"/>
<path d="M414.0 645.0 L417.0 641.5 L420.0 643.0 L423.0 641.0 L427.0 639.0 L431.0 642.0 L435.0 643.0 L440.0 641.0 L444.6 640.0 L449.0 641.0 L453.0 643.0 L454.5 647.7 L450.0 648.5 L444.6 649.0 L440.0 647.5 L435.0 646.5 L430.0 647.5 L425.0 647.2 L420.0 646.5 L416.0 647.0Z" fill="#004364" stroke="#000" stroke-width="1" stroke-linejoin="round"/>
<path d="M474.0 656.0 L476.6 661.0 L481.0 659.0 L484.0 660.0 L489.0 656.0 L494.0 654.0 L498.8 652.6 L497.0 655.0 L493.0 658.0 L491.4 661.0 L488.0 664.0 L484.0 666.0 L485.0 669.0 L486.5 672.0 L490.0 672.5 L494.0 674.0 L498.8 674.8 L503.0 677.0 L506.0 678.5 L507.0 681.5 L504.0 681.5 L500.0 679.0 L495.0 677.0 L489.0 675.5 L484.0 673.0 L481.0 669.0 L479.0 665.0 L476.0 663.0 L473.0 659.0Z" fill="#004364" stroke="#000" stroke-width="1" stroke-linejoin="round"/>
<path d="M806.0 570.0 L804.5 574.0 L803.5 580.0 L802.5 585.0 L799.5 592.0 L802.0 600.0 L800.0 607.0 L802.5 615.0 L800.0 622.0 L803.0 630.0 L801.0 638.0 L803.5 646.0 L802.0 652.0 L806.0 656.0Z" fill="#004364" stroke="#000" stroke-width="1"/>
<path d="M300.0 60.0 L303.0 57.5 L305.7 56.7 L309.0 57.0 L313.0 59.0 L313.4 62.0 L315.0 65.0 L316.3 67.3 L316.6 69.6 L318.0 72.0 L320.2 73.7 L322.0 75.0 L321.3 79.0 L320.0 82.0 L320.9 84.1 L321.8 87.0 L322.0 90.0 L322.8 92.8 L323.5 96.0" fill="none" stroke="#213f5d" stroke-width="4.4" stroke-linecap="round" stroke-linejoin="round"/>
<path d="M300.0 60.0 L303.0 57.5 L306.2 57.0 L309.0 57.0 L313.0 59.0 L313.8 61.8 L315.0 65.0 L315.7 67.6 L317.1 69.5 L318.0 72.0 L319.9 73.9 L322.0 75.0 L321.0 78.3 L320.0 82.0 L320.9 84.8 L321.7 87.0 L322.0 90.0 L322.7 93.3 L323.5 96.0" fill="none" stroke="#2c4f72" stroke-width="2.4000000000000004" stroke-linecap="round" stroke-linejoin="round"/>
<path d="M368.0 260.0 L372.0 259.0 L375.5 261.6 L378.0 263.0 L380.0 264.0 L382.8 265.2 L386.0 267.0 L389.7 269.1 L392.0 271.0 L395.0 273.3 L396.7 276.0" fill="none" stroke="#213f5d" stroke-width="3" stroke-linecap="round" stroke-linejoin="round"/>
<path d="M368.0 260.0 L372.0 259.0 L375.3 261.0 L378.0 263.0 L380.5 264.6 L383.7 265.4 L386.0 267.0 L389.1 269.1 L392.0 271.0 L394.1 273.4 L396.7 276.0" fill="none" stroke="#2c4f72" stroke-width="1" stroke-linecap="round" stroke-linejoin="round"/>
<path d="M440.0 376.0 L440.5 373.1 L442.0 371.0 L443.7 369.6 L446.0 368.0 L448.0 365.4 L449.6 363.6" fill="none" stroke="#213f5d" stroke-width="3" stroke-linecap="round" stroke-linejoin="round"/>
<path d="M440.0 376.0 L440.6 373.4 L442.0 371.0 L444.1 369.2 L446.0 368.0 L447.6 365.6 L449.6 363.6" fill="none" stroke="#2c4f72" stroke-width="1" stroke-linecap="round" stroke-linejoin="round"/>
<path d="M423.8 413.8 L424.8 417.0 L425.0 420.0 L425.9 422.4 L428.0 426.0 L428.7 428.7 L429.9 430.8 L430.6 434.0" fill="none" stroke="#213f5d" stroke-width="2.6" stroke-linecap="round" stroke-linejoin="round"/>
<path d="M423.8 413.8 L424.1 417.1 L425.0 420.0 L426.4 422.8 L428.0 426.0 L428.7 429.0 L429.6 431.4 L430.6 434.0" fill="none" stroke="#2c4f72" stroke-width="1" stroke-linecap="round" stroke-linejoin="round"/>
<path d="M526.8 502.0 L527.0 504.5 L528.1 508.0 L528.0 510.0 L528.5 512.2 L529.7 514.9 L530.0 518.0 L530.0 521.6 L531.2 524.4 L532.0 527.0 L532.4 530.3 L532.9 532.0 L532.8 535.3 L534.0 538.0" fill="none" stroke="#213f5d" stroke-width="4.4" stroke-linecap="round" stroke-linejoin="round"/>
<path d="M526.8 502.0 L527.3 505.0 L527.3 507.4 L528.0 510.0 L528.6 512.7 L529.1 515.2 L530.0 518.0 L530.7 521.3 L531.0 524.0 L532.0 527.0 L532.7 530.1 L532.8 532.2 L533.9 535.6 L534.0 538.0" fill="none" stroke="#2c4f72" stroke-width="2.4000000000000004" stroke-linecap="round" stroke-linejoin="round"/>
<path d="M614.2 285.1 L613.4 288.0 L612.0 288.9 L612.0 297.8 L614.4 298.3 L614.9 301.5 L613.9 305.3 L611.1 306.2 L609.2 304.3 L609.2 307.2 L605.0 306.2 L604.1 308.1 L606.4 310.0 L606.9 313.2 L609.7 312.8 L610.6 310.9 L616.3 310.4 L615.3 308.1 L618.6 305.3 L620.5 302.9 L620.0 300.6 L623.3 299.2 L623.7 296.4 L626.1 295.9 L627.5 293.6 L624.7 293.1 L622.3 290.8 L621.9 286.6 L620.0 286.6 L620.5 291.7 L623.3 294.5 L615.3 295.0 L615.3 292.2 L618.6 289.8 L616.7 287.5 L615.3 288.0Z" fill="#2c4f72" stroke="#213f5d" stroke-width="1"/>
<path d="M540.0 602.0 L543.0 603.0 L544.0 610.0 L549.0 612.0 L553.0 608.0 L556.0 603.0 L557.0 609.0 L562.9 610.0 L562.0 613.0 L556.0 614.0 L551.0 617.0 L544.0 618.0 L541.0 613.0Z" fill="#2c4f72" stroke="#213f5d" stroke-width="1"/>
<path d="M122.0 659.0 L124.0 654.0 L129.0 652.0 L134.0 654.0 L136.0 659.0 L134.0 665.0 L128.0 668.0 L123.0 666.0Z" fill="#2c4f72" stroke="#213f5d" stroke-width="1"/>
<path d="M141.0 707.0 L144.0 700.0 L148.0 696.0 L152.0 698.0 L154.0 704.0 L151.0 710.0 L146.0 713.0 L142.0 712.0Z" fill="#2c4f72" stroke="#213f5d" stroke-width="1"/>
<path d="M43.0 681.0 L46.0 680.0 L50.0 684.0 L52.0 689.0 L48.0 689.0 L45.0 686.0Z" fill="#2c4f72" stroke="#213f5d" stroke-width="1"/>
<path d="M58.0 686.0 L60.0 685.0 L63.0 691.0 L67.0 696.0 L72.0 701.0 L78.0 704.0 L84.0 706.0 L84.0 710.0 L78.0 710.0 L70.0 707.0 L63.0 703.0 L59.0 696.0Z" fill="#2c4f72" stroke="#213f5d" stroke-width="1"/>
<path d="M784.4 727.7 L788.0 729.0 L791.0 735.0 L794.0 741.0 L796.8 748.0 L795.0 754.0 L790.0 752.0 L787.0 745.0 L785.0 738.0Z" fill="#2c4f72" stroke="#213f5d" stroke-width="1"/>
<path d="M769.0 793.0 L772.0 790.0 L776.0 790.0 L778.0 793.0Z" fill="#2c4f72" stroke="#213f5d" stroke-width="1"/>
<path d="M783.0 653.0 L782.3 654.3 L782.7 657.4 L781.0 660.0 L781.7 662.3 L781.2 663.2 L780.8 665.3 L779.8 668.0 L780.3 670.8 L782.1 671.2 L782.0 674.0 L782.7 675.6 L784.7 677.5 L786.0 679.6 L786.1 680.8 L788.5 684.2 L789.0 685.0 L789.4 687.6 L792.0 690.0 L793.3 690.9 L794.1 693.1 L794.0 696.0 L794.1 698.5 L794.1 700.2 L793.7 703.0 L792.3 705.2 L791.1 707.4 L790.0 709.0 L788.6 711.4 L787.5 714.0 L785.1 716.8 L785.0 719.0 L784.8 720.4 L785.2 723.7 L784.4 725.0 L785.1 726.2 L786.0 729.0" fill="none" stroke="#000" stroke-width="4.2" stroke-linejoin="round"/>
<path d="M783.0 653.0 L782.0 656.3 L781.0 660.0 L780.2 664.0 L779.8 668.0 L780.7 671.0 L782.0 674.0 L784.0 676.5 L786.0 679.6 L787.6 682.0 L789.0 685.0 L792.0 690.0 L793.1 693.2 L794.0 696.0 L793.9 699.2 L793.7 703.0 L791.9 705.9 L790.0 709.0 L787.5 714.0 L785.0 719.0 L785.0 721.8 L784.4 725.0 L786.0 729.0" fill="none" stroke="#0a5c8e" stroke-width="2.4" stroke-linejoin="round"/>
<path d="M210.5 691.2L213.4 692.2L212.1 694.6L209.4 694.1ZM194.1 710.3L192.0 710.7L191.1 709.1L192.5 706.8L193.7 706.7L194.1 707.6ZM191.7 706.6L191.2 704.4L194.0 704.5L194.7 706.8L192.9 707.5ZM222.6 679.1L223.3 676.6L225.0 675.9L224.6 678.3L223.6 679.8ZM197.4 727.2L196.8 728.7L193.6 725.3L195.3 724.4ZM223.9 676.8L222.3 677.4L220.2 676.0L220.5 674.6L222.1 674.0L224.5 675.1L224.9 676.3ZM193.7 713.9L196.9 714.0L197.0 717.0L194.1 718.0ZM213.7 706.4L214.5 707.1L214.6 708.0L213.8 708.8L213.1 708.0L213.1 707.1ZM211.6 711.8L212.7 712.1L213.0 713.2L211.8 714.2L210.2 714.1L210.5 712.6ZM191.3 730.6L189.7 729.0L191.2 727.6L193.0 729.5ZM203.5 715.6L201.9 717.8L199.8 718.1L198.3 716.7L199.2 714.2L201.1 712.9L202.3 714.1ZM217.4 677.9L218.2 679.4L218.7 682.4L216.6 681.4L215.2 678.8L215.8 676.7ZM194.9 704.2L195.3 703.5L196.1 703.1L196.7 703.8L196.6 704.5L196.4 705.5L195.5 705.0ZM212.2 684.7L211.1 684.1L211.7 683.7L212.5 684.0L213.7 684.6L213.3 685.1ZM216.5 694.7L217.3 694.1L218.6 696.0L218.7 697.9L218.2 698.7L217.4 697.6L216.4 696.3ZM219.6 705.3L217.6 707.0L216.5 705.2L218.3 704.5ZM228.1 686.4L227.3 687.2L226.4 687.7L225.3 687.1L225.2 685.7L226.4 684.5L228.2 684.8ZM217.6 682.2L215.6 681.1L217.0 679.7L219.1 679.7L219.7 681.2L219.8 683.1ZM192.3 722.0L191.4 722.7L189.2 722.4L189.2 721.0L191.6 720.9ZM225.2 693.9L225.1 695.0L223.9 695.1L224.0 694.3ZM214.5 705.0L213.4 703.9L214.7 703.7L215.6 704.4L215.7 705.3ZM188.2 722.3L188.9 720.8L190.7 719.8L192.9 719.7L190.3 722.0ZM203.7 687.4L205.4 687.5L206.6 688.3L205.3 688.6L203.7 688.4ZM221.3 689.2L221.0 687.7L221.3 686.2L222.8 686.0L222.7 687.5L222.5 688.6ZM216.2 698.8L215.3 698.8L214.8 698.0L215.5 696.9L216.3 697.9ZM213.0 682.9L213.9 682.4L214.6 683.0L214.9 683.5L214.9 684.2L214.0 684.3L213.5 683.7ZM207.3 690.8L208.1 689.9L208.5 690.5L208.7 691.4L207.9 692.2L207.5 691.6ZM222.6 676.5L221.7 674.9L221.6 673.6L222.6 672.6L223.5 673.2L223.8 674.5ZM225.5 675.4L225.1 677.6L222.9 678.2L221.0 677.4L222.6 675.4ZM199.8 722.5L199.6 723.4L198.2 723.1L197.7 722.7L197.6 721.7L199.2 721.9ZM202.6 709.1L200.8 708.2L202.3 707.3L203.8 708.5ZM212.8 707.4L212.1 707.0L212.0 706.1L213.0 705.4L214.6 704.5L214.4 706.0L214.1 707.2ZM187.9 722.8L187.1 724.3L185.0 723.4L184.1 721.4L185.9 720.6L187.4 720.7L189.6 721.5ZM214.4 705.7L213.6 709.0L210.4 706.0L212.6 704.2ZM211.6 698.2L212.1 699.0L210.8 699.1L209.7 698.7L210.6 697.7ZM212.6 680.6L212.3 678.6L214.0 678.4L215.4 678.9L215.8 681.3L213.6 682.2ZM186.3 713.7L187.1 713.2L188.5 713.1L188.9 715.0L187.6 715.4L186.7 714.7ZM188.0 717.4L187.5 720.2L186.4 721.9L185.4 720.8L185.4 719.0L186.4 716.7ZM189.5 713.0L190.7 710.5L192.2 711.1L191.7 713.3ZM206.2 700.4L205.1 700.0L204.9 697.5L206.2 697.1L206.6 699.1ZM213.7 693.3L214.9 695.4L214.0 696.4L212.2 695.6L212.2 694.1ZM214.9 696.0L213.7 696.8L212.3 696.9L211.2 695.6L211.7 694.0L213.4 695.1ZM222.1 687.1L224.1 688.1L224.0 690.4L220.7 689.5ZM202.4 701.7L203.1 704.0L202.4 705.9L200.1 704.5L200.1 701.8ZM194.1 709.8L192.5 708.1L193.1 705.5L195.8 705.9L197.0 708.5ZM212.3 693.1L209.2 691.1L209.3 687.0L212.4 687.8L213.7 689.8ZM214.5 676.6L215.4 677.8L214.2 679.0L213.0 678.2L211.9 677.6L212.5 676.5L213.5 675.8ZM214.1 703.8L214.5 702.5L215.8 701.7L216.5 702.0L215.4 703.7ZM205.3 711.3L204.6 712.4L203.6 712.1L203.9 710.1L204.9 708.6L206.2 709.1ZM206.3 699.9L207.0 700.6L207.0 701.7L205.9 701.9L205.2 700.8ZM218.9 679.2L217.7 679.0L216.6 678.5L217.4 677.7L218.7 676.8L219.4 677.9L219.9 678.7ZM200.4 697.6L200.5 699.4L200.0 700.0L199.6 698.4ZM190.3 726.3L190.5 727.3L189.3 727.7L188.0 727.5L187.7 726.5L188.3 725.8L189.6 725.2ZM217.0 680.9L217.5 682.2L216.4 682.8L215.1 682.2L215.0 681.3L215.6 680.9ZM206.7 690.3L208.4 688.9L210.4 689.1L209.4 690.7ZM200.0 713.5L200.1 711.9L201.6 711.8L202.2 712.5L202.6 713.9L200.8 714.9ZM194.1 707.2L193.7 708.5L191.6 706.4L192.8 705.4ZM186.9 718.4L185.4 717.2L185.3 715.5L187.4 714.4L188.7 716.8Z" fill="#5e4f4b" stroke="#000" stroke-width="1" stroke-linejoin="round"/>
<path d="M191.9 727.6L193.3 729.8L192.0 730.9L190.3 730.4L189.8 728.4ZM210.9 709.3L209.4 709.1L207.9 708.1L208.6 707.6L209.4 707.2L210.2 708.2ZM209.7 697.9L210.5 696.5L211.6 696.7L210.5 698.4ZM210.2 687.9L212.8 685.5L215.3 687.8L212.6 690.0ZM215.4 701.7L214.8 699.8L213.8 697.7L216.0 696.2L218.5 697.1L218.1 699.5L217.1 700.5ZM221.5 691.4L220.9 690.3L222.5 690.5L223.9 690.5L224.1 691.7L222.9 692.2L221.6 692.2ZM188.5 731.4L188.4 727.9L190.8 728.2L191.5 730.7ZM185.9 716.0L186.7 715.7L187.5 715.4L188.3 716.9L187.9 718.0L186.8 717.4ZM219.3 682.7L219.0 681.9L219.4 681.0L220.8 681.5L220.8 682.8ZM209.4 679.9L210.4 681.0L208.5 683.7L207.0 683.2L208.0 680.1ZM221.4 675.5L223.3 675.6L224.9 679.1L222.2 679.3ZM195.4 722.2L197.2 723.8L195.3 725.6L194.2 724.1ZM195.8 714.1L193.7 715.4L192.3 713.3L193.8 710.6L196.1 711.6ZM225.6 682.1L226.2 683.8L223.5 683.5L222.9 681.5ZM210.1 702.5L210.2 706.2L207.4 704.8L207.3 701.7ZM221.9 674.3L224.7 674.4L226.9 676.1L226.1 678.5L222.9 677.5ZM201.7 710.4L200.6 708.9L201.3 707.7L202.7 707.3L203.4 709.9L202.8 711.1ZM221.2 685.0L218.9 684.3L220.0 682.6L221.9 683.0ZM203.4 704.0L205.6 701.9L206.9 703.3L204.6 705.7ZM211.5 684.2L212.7 681.8L214.0 681.8L213.5 683.2ZM197.4 718.0L196.9 716.6L198.3 716.5L199.7 718.2L198.8 719.1ZM222.8 692.1L223.1 693.2L222.4 693.6L221.4 693.0L221.4 692.0L221.2 690.9L222.2 690.9ZM208.5 709.7L210.0 707.4L211.7 708.2L210.9 710.1ZM200.3 719.8L201.7 720.8L200.0 721.6L197.2 721.3L197.1 719.8L198.7 719.1ZM214.1 688.4L213.8 686.6L214.9 684.3L216.6 685.0L216.5 686.9ZM223.3 675.4L223.6 674.4L225.0 674.5L224.2 675.6ZM198.5 707.4L197.5 705.3L199.0 704.1L200.5 705.1L200.7 707.3ZM194.2 720.1L195.3 720.2L196.3 720.2L196.4 722.7L195.2 723.6L194.2 724.3L193.8 722.5ZM191.5 705.1L192.9 704.5L195.3 704.9L195.2 707.1L193.7 708.3L191.6 706.9ZM208.7 707.6L209.6 707.0L210.5 707.9L209.2 709.2ZM212.4 687.9L214.2 688.8L214.1 691.2L211.9 690.5ZM223.9 701.9L220.8 700.1L221.8 696.8L225.9 698.6ZM225.7 680.0L221.5 681.3L221.9 677.9L225.3 676.3ZM217.5 681.5L217.9 684.0L216.0 683.1L214.8 682.8L214.8 680.9L216.0 678.8L217.9 679.3ZM202.1 713.4L202.0 712.1L202.9 711.5L203.8 711.9L204.1 712.8L203.7 713.7L202.9 714.1ZM214.9 678.4L215.2 677.2L216.6 677.9L217.4 679.3L215.7 679.2ZM193.8 707.4L194.9 707.9L195.8 709.5L195.5 711.9L194.3 709.5ZM195.6 707.9L196.1 708.8L196.0 709.6L195.3 709.6L194.9 708.6L194.3 707.6L194.8 706.9ZM193.8 701.7L196.2 702.0L198.6 702.4L199.1 704.4L197.6 705.9L195.4 704.7L194.1 703.6ZM208.9 698.7L211.1 700.5L209.8 702.9L207.5 703.4L205.5 701.8L206.6 699.5ZM214.0 702.6L213.8 703.3L212.8 703.7L212.1 703.1L212.3 702.0L213.7 701.6ZM213.3 689.4L212.8 690.7L211.5 690.5L211.3 689.6L211.2 688.6L212.4 688.4L213.6 688.3ZM215.3 706.0L213.6 706.8L212.6 705.3L213.5 703.4L215.0 701.8L216.6 702.7L217.6 704.8ZM189.3 717.6L188.8 716.1L190.4 715.2L190.9 717.2ZM209.4 681.6L207.8 680.9L207.6 680.1L208.4 679.6L209.6 680.1L209.7 680.7ZM205.2 695.4L206.1 693.8L208.2 693.9L207.4 695.4ZM218.5 687.1L217.5 685.8L218.8 684.8L219.8 685.9L219.7 687.0ZM190.8 729.8L190.1 727.6L191.9 726.4L194.5 726.8L193.4 728.9ZM216.1 683.0L218.1 681.6L218.3 683.9L215.3 685.6ZM221.2 677.9L222.4 679.5L221.8 681.4L220.2 680.2ZM193.9 706.5L195.4 707.1L195.9 708.9L194.2 708.7ZM188.2 718.8L187.2 719.8L186.5 719.5L187.3 718.2L188.0 717.7L189.0 717.4ZM212.0 705.0L210.5 704.0L210.9 702.8L212.8 703.9ZM222.4 689.0L223.0 689.0L223.5 689.8L223.6 690.4L223.2 690.4L222.3 690.0ZM185.9 715.8L184.5 714.1L185.8 712.7L187.5 711.0L188.6 714.1L187.8 716.7ZM212.5 686.6L212.7 687.8L211.9 688.1L211.4 686.1L211.8 685.0ZM203.0 716.8L199.7 714.8L200.3 712.5L204.7 715.0ZM220.8 701.3L221.0 702.9L219.6 703.0L219.4 700.8ZM202.5 703.6L203.8 704.3L203.6 706.3L202.3 706.1L201.6 704.8ZM192.1 728.6L193.4 727.4L194.3 729.2L192.6 729.9ZM207.0 714.3L205.0 713.1L207.3 710.9L209.8 712.6ZM189.7 725.3L189.2 726.6L188.0 725.9L187.7 724.6L189.2 724.1ZM213.2 688.6L212.2 687.8L212.3 686.8L212.6 686.0L213.5 686.1L214.9 686.4L214.6 688.0ZM216.1 686.5L217.6 685.9L217.5 688.4L216.7 688.9ZM211.6 683.0L212.8 683.8L212.8 685.1L211.0 685.7L209.5 685.5L207.8 684.4L209.6 683.0ZM215.9 678.8L216.7 680.7L215.0 682.7L214.9 680.3ZM211.6 694.5L209.8 694.3L210.0 692.2L211.9 691.9L212.9 693.4ZM208.5 696.2L207.7 697.2L206.4 696.7L206.1 695.3L207.5 695.1L208.2 695.3ZM202.4 711.0L202.1 713.3L199.2 712.9L200.1 710.8ZM221.0 674.2L221.4 673.1L222.2 672.5L223.0 672.9L223.4 674.2L222.0 674.4ZM202.8 712.9L201.6 709.9L203.2 708.1L204.8 709.3L206.1 710.9L204.8 712.1ZM214.3 691.6L214.2 692.7L213.7 693.5L212.7 693.6L211.8 693.0L212.2 692.0L213.0 691.6ZM215.0 673.1L216.5 673.5L217.4 674.4L218.4 676.6L215.9 676.0L213.4 676.5L214.3 674.4ZM197.9 723.5L197.9 724.2L196.9 724.5L195.9 724.1L195.3 723.2L196.5 722.7L197.7 722.6ZM194.3 728.2L195.3 727.5L195.9 729.6L194.4 729.8ZM228.7 674.3L226.3 673.9L226.4 672.2L226.9 670.6L228.5 671.5L230.1 672.6ZM207.3 710.3L208.7 710.9L209.0 712.5L208.4 713.9L207.2 713.4L206.2 711.8ZM222.0 691.7L222.8 692.5L222.5 693.4L221.9 694.0L221.2 693.1L220.8 691.9ZM213.0 680.7L214.8 682.1L212.0 684.5L210.4 682.7ZM212.0 702.6L212.5 701.0L213.7 702.8L212.7 703.8ZM200.3 712.3L197.9 710.5L199.0 707.8L201.8 707.8L202.6 709.8L202.3 711.4ZM198.5 723.2L198.5 724.7L197.6 723.9L197.1 722.7L196.5 720.6L197.7 721.3L198.5 721.8ZM212.8 688.5L213.7 689.4L214.0 690.6L213.1 690.7L212.1 690.0L211.6 689.2L211.5 688.1ZM209.3 700.6L208.1 698.8L207.8 697.8L208.2 696.3L210.7 697.5L211.7 699.3L210.5 699.7ZM192.0 719.6L193.5 720.5L195.6 721.2L194.1 721.8L192.6 721.8L190.8 721.3L191.0 720.4ZM188.8 724.6L190.2 724.8L191.0 725.8L189.7 727.1L188.5 725.9ZM214.6 698.5L214.5 696.0L216.9 695.5L216.1 697.9ZM182.8 719.4L181.4 715.8L184.0 716.8L185.2 719.5ZM218.5 683.2L216.6 684.0L215.2 683.7L214.4 682.0L215.8 681.1L217.0 681.5ZM193.3 729.0L193.2 727.4L194.3 726.8L195.2 727.4L194.8 728.5ZM214.8 683.9L215.7 685.9L213.5 685.2L213.1 683.0ZM205.5 699.6L206.8 703.0L203.0 703.0L203.1 700.3Z" fill="#000" stroke="#000" stroke-width="1" stroke-linejoin="round"/>
<path d="M208.0 737.8L209.7 740.2L207.7 742.3L206.1 740.3L205.7 738.3ZM212.1 738.7L211.4 737.8L212.8 737.8L214.1 737.9L213.8 738.8L213.0 739.2ZM219.1 741.4L218.0 741.3L217.0 740.2L218.7 739.5L219.7 739.8L220.1 740.7ZM237.2 757.1L238.0 756.1L238.9 756.1L239.8 756.6L239.3 758.1L238.0 757.8ZM199.5 732.0L200.2 729.9L202.0 730.4L202.4 732.2ZM212.5 743.6L214.1 745.7L212.0 747.8L210.9 744.8ZM203.8 741.0L202.4 740.9L201.3 739.1L202.7 739.1ZM234.8 755.5L235.3 756.7L234.2 757.4L234.0 756.2ZM194.8 736.9L193.0 735.1L193.9 733.5L195.6 735.7ZM221.3 746.6L220.4 745.5L221.5 744.0L222.8 742.6L224.7 742.9L224.6 744.8L223.0 746.1ZM192.4 730.5L192.7 729.7L193.5 729.0L194.2 729.5L193.7 730.4L192.9 731.1ZM233.6 755.3L232.3 755.7L232.8 754.6L234.3 753.7L234.9 754.1L234.4 754.7ZM221.9 746.5L222.5 745.4L223.8 745.4L224.5 746.5L222.7 747.1ZM214.8 744.4L213.4 745.1L212.3 744.6L211.6 743.7L213.5 743.0L215.7 742.2L216.4 743.4ZM225.7 746.5L224.7 747.3L224.6 745.6L225.7 743.6L226.1 744.9ZM216.1 744.4L216.2 746.4L214.1 746.1L213.7 744.5L213.9 742.7L215.6 743.2ZM223.6 751.4L223.8 752.5L222.7 752.6L223.0 751.4ZM192.1 730.5L193.2 730.0L193.6 730.7L192.4 731.1ZM200.9 731.5L200.7 730.3L201.6 729.6L202.2 729.7L202.5 730.7L202.0 732.1L201.1 732.9ZM225.8 753.4L225.0 754.0L224.2 753.2L223.5 752.0L225.2 751.6L226.3 752.6ZM210.9 736.1L209.8 736.4L209.5 735.8L208.9 735.0L210.3 734.2L211.5 734.5L211.5 735.3Z" fill="#5e4f4b" stroke="#000" stroke-width="1" stroke-linejoin="round"/>
<path d="M205.2 731.5L207.4 730.7L209.6 731.4L210.1 733.5L208.5 734.9L206.6 734.7L204.8 733.7ZM200.5 735.4L200.7 734.0L201.6 732.9L202.9 733.7L202.5 735.1ZM208.2 738.1L209.4 737.4L210.4 737.8L210.4 739.3L209.0 739.2ZM216.8 739.0L216.2 741.4L215.0 741.4L214.4 740.4L215.3 738.3L216.4 737.9ZM216.7 738.6L215.7 740.9L212.9 740.1L214.3 737.9ZM213.6 748.9L212.2 747.8L212.7 746.2L213.4 745.7L214.7 745.6L215.0 747.8L214.9 749.6ZM213.5 744.2L214.9 745.1L213.5 746.6L212.1 745.5ZM201.8 731.1L201.1 730.6L200.6 729.4L202.0 728.6L202.9 729.5L203.6 730.2L203.2 731.5ZM216.7 736.4L215.9 738.8L214.6 740.1L214.0 738.9L214.4 737.1ZM219.0 750.8L218.1 750.5L218.2 749.0L219.3 749.1L219.6 750.4ZM223.2 748.8L224.5 749.7L225.9 750.6L224.6 750.5L223.4 750.5L222.5 749.3ZM227.6 754.7L227.0 753.9L228.0 753.3L229.2 754.1ZM199.0 740.1L197.0 740.8L196.8 739.4L198.0 738.5L199.3 737.8L200.3 738.2L201.0 739.3ZM195.7 731.4L195.7 729.8L197.4 730.3L198.7 730.8L199.0 732.5L197.2 733.5L195.8 732.5ZM199.2 737.6L201.7 739.0L201.4 740.6L198.6 739.0ZM222.2 750.9L221.1 749.2L221.9 747.6L223.0 749.1L223.5 750.5ZM220.0 741.3L219.2 741.7L218.5 741.3L217.8 740.8L218.5 740.4L219.1 740.1L219.4 740.6ZM233.2 753.6L231.0 754.7L230.7 753.0L231.9 751.7ZM193.5 727.5L195.1 728.6L195.3 731.1L193.5 731.1L192.4 728.8ZM231.6 750.7L230.7 750.4L231.6 749.7L232.7 749.6L232.4 750.4ZM206.5 738.1L206.7 737.3L207.6 736.9L208.4 737.5L208.2 738.4L207.7 739.2L207.1 738.5ZM201.9 739.6L201.2 738.8L201.4 737.8L202.7 737.7L202.5 738.9ZM209.9 736.8L211.4 739.9L209.3 740.0L207.7 737.3ZM235.3 751.9L233.7 753.3L231.9 752.2L233.8 750.7L235.3 750.9ZM198.2 735.7L198.2 734.0L199.1 734.7L199.2 736.4ZM215.0 743.7L216.6 742.9L216.8 743.9L215.6 744.6ZM197.9 727.0L200.8 727.4L200.1 729.7L198.0 728.9ZM223.0 749.9L223.1 750.3L222.6 750.0L222.1 749.7L221.7 749.1L222.2 749.0L222.9 749.3ZM198.3 732.6L198.5 733.5L197.2 732.9L196.4 731.8L196.2 730.7L197.7 731.5ZM195.4 728.2L196.2 728.7L195.9 729.2L194.9 729.2L193.9 728.3L194.3 727.7ZM209.0 744.2L207.7 745.6L207.1 744.3L209.0 742.8ZM215.6 741.4L214.1 741.4L213.6 738.8L214.6 737.2L215.6 738.4ZM230.6 748.3L231.6 748.3L231.0 750.1L230.0 750.8L229.5 749.8ZM195.9 733.8L198.3 732.8L200.1 732.7L200.3 733.8L198.1 734.3ZM228.0 751.1L228.7 749.4L230.4 750.1L232.0 750.6L231.6 752.0L230.9 753.4L229.0 752.9ZM223.2 747.6L223.7 746.1L225.6 745.3L226.3 747.4L224.8 749.5ZM216.5 738.6L217.8 739.3L217.1 739.9L215.5 740.1L214.7 739.2L215.0 738.5ZM226.3 751.6L227.0 752.7L225.8 752.7L224.7 753.1L224.8 751.8L224.6 750.4L225.9 750.2ZM206.9 742.9L208.2 744.0L207.2 745.0L205.8 744.2Z" fill="#000" stroke="#000" stroke-width="1" stroke-linejoin="round"/>
<path d="M157.6 748.6L159.2 748.6L160.1 749.4L158.2 749.6L157.3 749.2ZM163.5 754.2L163.6 757.0L161.3 758.7L160.2 756.0L160.6 753.7ZM162.0 726.8L161.5 729.0L160.2 729.0L159.5 726.0ZM162.9 739.1L166.1 738.0L166.0 741.9L162.4 741.6ZM162.4 751.6L160.9 753.4L158.7 753.4L160.0 752.1ZM158.8 727.9L159.8 728.9L159.7 729.9L158.2 729.4L157.3 728.5L157.0 727.7L157.8 727.5ZM165.9 740.6L164.9 740.7L164.1 740.4L164.1 739.2L164.9 738.4L165.9 738.6L166.1 739.6ZM159.1 747.8L156.7 746.8L156.2 743.5L158.3 744.2ZM165.9 755.7L166.6 756.2L166.3 757.1L165.3 757.5L164.1 757.2L164.8 756.0ZM159.0 738.5L157.6 739.4L157.0 738.1L157.7 737.3L158.8 737.6ZM177.0 754.9L176.8 755.8L175.8 755.5L175.2 754.5L175.5 753.7L176.2 753.8L176.7 754.2ZM166.0 753.0L167.4 752.1L168.8 753.3L169.9 754.3L169.6 756.0L167.9 755.6L166.3 755.0ZM178.1 754.5L177.7 753.3L178.9 753.4L179.6 753.9L179.8 754.9L178.7 755.1ZM164.4 757.3L166.3 756.0L166.8 758.1L165.1 758.7ZM180.6 754.5L183.1 755.4L184.0 757.3L184.3 759.6L181.6 759.0L180.3 757.8L180.0 756.4ZM162.7 752.6L161.5 753.0L160.1 751.4L162.0 750.3ZM159.7 729.2L161.7 728.9L159.3 731.6L157.4 731.3ZM171.3 757.8L170.3 757.6L169.7 756.7L169.8 755.4L170.7 754.8L171.3 755.7L171.3 756.5ZM174.1 750.1L174.3 749.0L174.2 747.6L175.2 748.5L175.8 748.9L175.8 749.9L175.1 750.2ZM182.3 757.9L184.1 757.8L184.0 758.9L183.5 759.4L182.5 759.2L181.8 758.6ZM176.3 742.1L174.8 741.9L175.8 740.2L177.1 740.6ZM183.0 755.8L181.6 754.2L182.7 753.6L184.2 754.1L186.3 754.8L185.9 755.8L184.7 755.9ZM158.6 751.9L156.8 751.7L156.6 749.8L157.9 749.4ZM173.7 749.4L171.1 748.4L171.2 746.0L173.7 747.4ZM171.9 757.4L171.3 756.7L170.9 755.0L171.8 754.6L172.8 754.6L172.5 756.4ZM155.3 726.0L156.3 726.0L156.4 726.4L155.6 726.6L154.9 726.5L154.3 726.1ZM183.6 748.8L182.9 750.8L181.5 750.1L181.6 748.4L182.3 747.3ZM161.4 725.4L161.9 727.0L162.4 728.5L161.5 727.9L160.6 727.2L160.5 725.7Z" fill="#5e4f4b" stroke="#000" stroke-width="1" stroke-linejoin="round"/>
<path d="M159.1 750.2L161.5 750.5L160.3 752.3L159.8 754.1L157.8 752.9L157.1 751.6L157.6 750.3ZM164.1 753.5L164.8 752.4L166.8 752.7L166.9 755.6L165.9 757.2L163.7 756.0ZM189.8 755.5L187.2 753.2L189.4 750.2L193.0 751.1L193.4 754.9ZM172.6 737.0L175.4 737.8L174.4 739.8L171.8 738.6L170.6 737.4ZM165.1 737.2L166.1 737.7L166.9 738.4L165.5 739.5L163.8 740.3L162.9 739.4L164.2 738.3ZM182.7 756.4L183.1 755.4L184.4 755.7L185.8 756.0L185.0 757.1L183.6 757.1ZM185.8 748.0L185.4 749.0L184.1 748.7L183.1 748.1L183.3 747.3L184.0 746.9L185.0 747.1ZM183.9 750.0L182.6 748.9L183.5 747.4L185.3 747.9L185.3 749.3L185.0 750.4ZM166.0 746.0L168.7 746.3L167.5 749.3L164.9 749.6L163.6 746.8ZM156.4 753.4L157.4 756.3L154.9 756.2L153.6 753.7ZM167.5 752.4L166.3 752.5L165.5 752.4L165.2 752.0L165.2 751.6L166.0 751.2L167.1 751.7ZM159.7 747.5L160.6 748.2L160.8 749.7L159.5 750.6L158.2 750.6L157.9 749.4L158.2 747.9ZM194.6 758.0L197.0 756.4L198.8 758.3L198.0 760.8L194.8 761.0ZM188.6 751.7L187.2 751.4L188.3 749.0L189.8 749.9ZM177.4 759.6L176.5 758.7L177.2 757.8L177.6 756.8L178.6 757.4L179.3 758.3L178.6 759.3ZM168.1 743.9L166.0 743.6L164.5 743.1L165.2 741.6L166.4 740.6L167.7 741.7ZM169.2 756.9L167.8 758.7L166.3 757.5L165.3 755.7L166.6 753.5L169.1 752.5L169.2 755.3ZM179.3 752.1L181.1 753.4L179.7 755.5L177.9 754.6L177.6 753.1ZM156.3 755.3L155.2 758.9L153.0 756.0L154.5 753.9ZM159.8 725.3L159.9 726.8L158.0 726.5L156.8 725.9L156.9 725.0L157.4 724.1L158.6 724.6ZM166.3 741.7L167.0 742.7L165.3 743.6L164.2 742.3ZM171.5 755.9L172.7 755.3L174.3 755.5L173.7 756.8L172.9 756.9ZM161.0 740.8L159.1 740.8L158.5 739.6L159.8 739.2L160.6 739.5ZM172.1 756.7L169.9 755.9L167.6 754.6L169.2 754.1L171.5 754.7ZM178.5 750.5L178.7 751.6L177.8 752.3L177.7 750.8ZM154.2 754.3L155.5 754.9L156.7 755.9L155.7 757.0L154.4 758.3L152.8 757.3L152.8 755.4ZM176.5 748.2L177.3 747.3L178.4 747.3L179.6 748.1L178.9 749.4L177.5 749.2ZM156.3 752.9L155.2 752.2L155.0 750.9L155.4 750.2L156.4 751.7ZM178.1 756.9L179.5 756.4L179.4 758.1L177.2 760.2L176.5 758.6ZM157.8 721.8L155.9 721.8L154.7 720.6L155.5 719.8L157.6 720.4ZM185.6 749.5L185.3 748.5L186.4 747.9L187.4 748.0L186.6 749.3ZM172.0 743.8L172.8 746.3L170.9 746.0L169.5 743.6L169.7 741.9L171.1 742.2ZM162.5 727.7L164.0 726.3L165.6 726.7L165.5 729.6L163.1 730.3ZM156.9 728.8L156.7 729.3L155.8 729.2L154.9 728.1L154.8 727.5L155.5 727.5L156.5 727.9ZM161.9 748.5L164.4 748.0L163.1 750.4L161.6 750.0ZM180.7 742.2L178.9 743.8L178.0 741.7L179.8 741.1ZM154.6 733.6L154.1 735.8L152.7 736.5L150.7 735.9L150.9 733.0L152.9 732.7ZM155.9 742.9L156.9 743.1L157.4 743.7L157.0 744.6L156.1 744.8L155.0 744.3ZM194.2 759.5L193.6 758.4L193.1 757.6L195.2 757.0L196.2 757.4L196.9 758.3ZM158.3 757.0L159.6 756.8L162.0 757.2L161.9 758.2L160.1 758.4L158.1 757.8ZM169.6 740.7L170.3 742.3L168.6 742.8L167.6 742.0L167.0 741.1L167.7 740.3L168.6 740.1ZM165.9 736.6L167.2 736.3L167.4 738.7L167.5 741.0L166.3 740.7L165.9 739.1Z" fill="#000" stroke="#000" stroke-width="1" stroke-linejoin="round"/>
<path d="M76.3 758.8L75.7 756.8L78.1 756.3L79.3 758.1L78.3 759.9ZM84.5 755.0L85.8 755.5L86.5 756.4L86.1 756.8L85.0 756.3ZM86.6 750.8L86.1 750.5L85.5 750.0L87.1 749.5L88.4 749.5L88.3 750.1L88.0 750.8ZM90.6 743.5L90.1 744.9L89.4 746.3L88.0 745.9L87.6 744.1L88.7 743.2L89.5 743.3ZM87.7 743.1L86.2 743.2L85.2 742.2L86.9 741.5L88.0 742.2ZM98.8 753.4L97.2 753.5L98.4 752.6L99.5 752.8ZM72.4 752.8L70.8 752.6L72.0 750.8L73.7 750.0L75.1 750.7L74.2 752.8ZM69.5 748.8L72.3 747.8L72.6 750.4L70.0 750.9ZM92.8 746.4L93.7 744.9L94.2 745.3L93.6 746.6ZM86.1 744.1L87.2 745.0L86.6 746.6L85.3 747.0L84.5 745.7L84.5 743.5ZM88.0 745.6L88.3 747.1L86.7 746.8L85.8 745.6L86.9 745.0ZM78.1 750.1L79.5 749.8L80.0 751.4L80.3 753.0L78.7 753.1L77.9 751.6L76.8 750.3ZM105.5 754.0L104.8 755.1L103.9 755.6L102.4 756.1L101.8 754.9L102.6 753.7L104.1 753.8ZM84.0 745.1L85.2 744.4L86.8 745.3L85.8 747.1L85.0 748.1L84.2 747.4L83.8 746.4ZM85.8 756.7L84.7 757.7L84.0 756.4L84.1 754.4L85.6 754.6L86.9 755.2ZM88.4 747.0L89.2 747.8L88.8 748.8L87.5 748.8L87.1 747.9L86.3 747.0L87.3 746.6ZM78.9 743.3L80.6 744.4L82.0 746.0L79.8 745.7L78.5 744.6Z" fill="#5e4f4b" stroke="#000" stroke-width="1" stroke-linejoin="round"/>
<path d="M100.6 750.5L99.5 752.8L98.7 751.5L99.4 749.5L101.2 748.4ZM94.5 745.1L94.2 743.6L96.0 743.4L97.7 743.7L98.2 745.1L96.3 745.2ZM78.8 742.6L77.9 741.6L79.0 741.0L80.8 741.7ZM96.3 756.5L96.9 755.7L98.1 756.3L97.4 757.1ZM101.0 757.3L104.7 756.1L106.9 757.0L103.6 759.1ZM86.9 747.9L87.4 747.2L88.3 746.2L88.9 747.4L89.3 748.4L88.5 749.4L87.4 748.8ZM79.5 742.9L78.9 742.2L79.3 741.4L80.1 741.0L80.7 741.7L80.8 742.3L80.3 742.9ZM80.4 742.7L82.4 743.5L84.0 745.9L82.1 747.4L79.4 746.2L79.6 744.1ZM95.5 745.4L97.0 745.3L95.8 747.6L94.3 748.9L94.1 747.0ZM100.4 758.6L101.5 757.3L102.4 756.4L103.3 757.3L103.4 758.6L102.6 759.5L101.8 759.2ZM81.1 749.9L83.0 749.5L83.1 751.2L81.6 751.3ZM97.5 744.5L97.4 746.1L94.4 745.6L94.1 744.0L94.6 742.9L96.8 743.3ZM96.3 756.1L95.3 757.3L94.8 755.7L95.2 753.2L96.5 753.8ZM94.7 751.4L93.0 752.3L91.1 752.5L89.9 751.3L91.8 749.6L94.5 750.0ZM95.6 742.6L94.8 743.5L94.2 744.2L93.4 744.2L93.2 743.9L93.0 743.2L94.6 742.5ZM101.2 756.6L101.0 754.4L103.5 754.7L105.1 755.9L103.8 757.0ZM84.4 754.5L85.9 756.8L84.4 759.5L82.6 756.9ZM94.0 754.1L94.4 752.2L96.5 752.0L97.8 753.5L95.6 755.2ZM80.3 751.7L80.6 748.3L82.9 750.7L82.7 753.6ZM78.9 750.9L77.1 750.5L79.2 748.7L80.9 748.4L81.3 749.2ZM99.4 755.5L101.6 755.1L103.0 755.8L103.0 757.9L101.0 757.0ZM80.1 757.8L79.1 758.5L77.8 757.9L78.3 756.7L78.8 755.8L80.1 755.9L81.0 756.9ZM82.8 754.4L82.5 756.1L81.2 755.7L80.4 754.5L79.6 752.0L81.5 752.6L83.3 752.1Z" fill="#000" stroke="#000" stroke-width="1" stroke-linejoin="round"/>
<path d="M141.7 755.8L144.0 755.5L144.5 757.2L143.1 758.2ZM119.3 756.6L119.4 757.8L119.6 758.7L118.1 759.1L116.4 758.7L115.9 757.5L117.7 757.2ZM122.4 742.4L122.1 740.7L122.8 740.1L123.4 741.3L123.6 742.7L123.2 743.5L122.6 743.4ZM142.3 750.1L140.4 751.3L140.4 749.8L140.8 748.6L142.1 747.6L142.6 748.3ZM121.0 750.7L120.3 752.2L118.3 751.2L118.3 750.1L119.9 749.5ZM123.7 753.1L122.6 750.2L124.8 749.8L127.1 750.2L127.9 752.8L126.2 753.9ZM117.5 749.2L116.0 747.9L115.6 746.6L116.4 746.0L118.2 747.1L118.8 748.9ZM144.0 754.2L145.2 753.1L146.2 754.5L146.4 755.7L145.6 756.6L144.4 756.4L143.2 755.5ZM137.8 749.2L137.2 751.9L135.8 751.5L134.8 750.7L136.2 749.0L137.2 748.1ZM130.1 757.5L128.3 758.6L127.8 757.0L129.6 754.8L130.6 756.0ZM118.3 752.9L117.7 753.7L116.9 754.2L116.5 753.6L116.9 752.8L117.8 752.3ZM135.5 751.2L133.5 749.1L135.3 746.8L137.0 748.7L137.1 750.8ZM131.5 752.7L130.3 753.1L129.7 752.0L129.2 750.6L130.6 751.0L131.2 751.6ZM146.9 749.4L147.6 749.9L147.7 750.8L147.0 751.0L146.3 750.7L146.0 749.9L146.1 749.2ZM125.3 757.0L123.6 756.7L123.5 754.9L124.8 754.1L125.9 753.9L126.5 754.9L127.1 756.6Z" fill="#5e4f4b" stroke="#000" stroke-width="1" stroke-linejoin="round"/>
<path d="M116.6 748.5L117.1 749.1L117.1 749.9L116.7 750.1L116.2 749.6L116.0 748.8L116.0 747.9ZM113.8 749.6L113.2 747.4L114.9 747.8L115.4 749.4ZM145.4 750.1L143.8 749.2L144.6 748.5L145.4 748.0L147.4 748.3L147.6 749.5L146.8 750.1ZM145.1 748.4L143.8 748.6L143.2 747.2L144.5 746.8ZM144.1 758.2L143.8 756.2L145.1 755.7L145.4 757.9L144.8 759.5ZM124.9 747.7L126.2 747.5L127.4 748.5L127.0 749.4L125.7 750.2L124.3 749.0L123.9 748.0ZM114.7 743.8L115.4 744.0L116.2 745.3L115.2 746.8L114.0 746.0L113.2 744.3ZM139.3 751.7L139.9 750.3L141.5 750.0L142.3 750.5L142.3 751.7L140.7 752.0ZM123.1 756.4L122.7 754.6L123.5 752.9L125.2 752.7L126.4 753.9L126.1 755.6L124.8 756.5ZM134.3 744.9L134.2 746.4L133.2 747.5L132.1 745.9L132.2 743.3L133.2 742.4L134.5 742.6ZM145.7 757.7L146.5 757.4L147.3 757.9L146.9 758.9L145.9 759.0L145.2 758.5ZM117.0 749.5L118.0 750.4L117.7 751.6L116.9 750.6ZM142.3 745.7L139.2 747.3L138.9 744.1L141.3 742.3ZM138.1 752.1L138.4 750.8L139.7 751.0L140.1 752.3L138.9 752.5ZM125.2 756.6L124.7 755.5L124.4 754.1L126.6 754.1L127.5 755.3L127.3 756.9ZM139.5 753.9L137.3 755.2L134.8 754.3L137.4 752.8ZM131.4 744.7L132.8 746.3L131.7 747.1L130.2 746.1L129.7 745.0ZM114.4 758.3L115.0 758.9L113.6 759.8L113.0 759.1ZM146.4 747.6L145.7 748.1L144.8 747.8L144.5 747.2L145.6 747.2ZM142.1 753.5L143.7 756.1L141.3 757.2L138.4 754.5ZM124.6 748.5L125.9 747.9L127.1 748.8L126.2 749.3ZM137.2 758.4L135.8 757.3L138.0 754.3L139.4 756.0ZM114.1 743.1L116.5 742.7L117.7 743.9L117.3 745.0L115.8 746.4L114.8 744.8ZM133.1 748.2L131.7 747.3L131.0 745.9L133.0 746.2L134.0 746.9ZM119.0 751.6L117.1 751.5L115.5 749.7L116.7 748.4L118.4 748.6L120.2 749.3L120.0 750.8ZM119.5 745.7L117.7 746.6L115.7 746.6L116.8 745.1L118.8 744.2ZM117.1 748.2L116.1 747.4L116.9 746.3L118.0 747.0L119.0 747.7L118.3 749.0ZM130.8 752.8L128.9 754.5L127.7 752.5L128.5 749.9L131.0 749.3L131.3 751.3ZM135.1 757.3L134.3 758.3L133.8 756.9L133.3 755.7L134.5 755.7L135.5 755.6L135.7 756.7ZM122.1 743.7L121.9 742.7L121.8 742.0L123.1 742.3L123.6 742.9L123.5 743.5ZM121.1 745.3L119.7 744.8L119.1 743.1L120.7 742.2L122.6 742.9L123.1 744.9ZM128.1 740.6L130.3 741.0L129.9 743.2L126.4 743.1ZM127.4 750.5L127.8 751.5L126.8 752.0L126.0 751.4L125.7 750.5L126.3 750.0L127.2 749.4ZM142.7 746.3L141.9 748.3L139.6 748.0L140.4 745.5ZM126.9 745.2L125.9 746.8L124.1 749.0L123.4 746.6L123.3 744.0L125.6 744.3Z" fill="#000" stroke="#000" stroke-width="1" stroke-linejoin="round"/>
<path d="M794.7 580.0L793.9 579.1L795.5 578.0L797.1 577.4L797.5 578.5L796.4 580.1ZM799.8 628.6L802.0 628.6L802.7 630.1L799.6 630.5ZM795.7 575.6L796.1 573.3L797.6 572.8L798.5 573.7L798.6 575.1L798.1 576.8L796.7 577.1ZM799.8 638.7L799.1 638.2L800.0 637.6L800.5 637.0L801.2 637.5L801.1 638.3L800.6 639.0ZM802.5 635.0L804.7 635.6L803.1 637.9L801.0 636.7ZM802.5 618.9L802.5 620.4L801.1 621.1L799.6 620.2L800.2 618.8L800.8 617.9L801.9 617.9ZM799.3 601.6L799.2 599.1L800.3 599.5L800.5 601.5ZM800.2 646.5L799.5 648.0L798.7 649.8L797.3 648.5L797.5 646.6L798.9 645.4ZM795.0 616.2L795.6 614.8L797.0 614.4L796.9 616.6L796.2 617.9ZM799.6 637.2L798.8 637.4L798.0 636.9L798.5 636.0L799.5 636.3ZM799.5 571.5L799.1 572.3L799.1 573.2L798.2 572.3L797.2 571.4L797.5 570.8L798.2 570.4ZM804.1 584.0L803.1 583.7L802.8 582.7L804.4 582.7ZM797.5 622.3L796.6 622.7L796.6 620.9L796.7 619.9L797.4 618.5L798.3 619.7L798.6 621.8ZM796.8 613.8L797.2 615.7L796.3 616.4L794.8 616.8L794.3 614.5L795.5 614.0ZM796.8 634.1L796.8 632.4L799.0 632.9L798.5 635.3ZM799.1 596.9L799.8 598.6L798.8 599.1L797.6 597.4ZM798.8 611.8L798.1 611.0L798.3 609.9L799.6 609.6L800.3 610.5L799.9 611.5ZM799.7 594.1L799.9 591.9L801.7 591.4L802.9 591.7L802.6 593.2L801.3 594.9ZM799.6 620.5L799.9 621.7L798.9 622.5L798.2 622.2L798.4 621.3ZM797.3 596.9L798.3 598.8L796.0 599.8L794.1 598.6L793.5 596.8L794.9 595.6L796.6 595.5ZM799.4 586.8L800.1 587.2L800.8 587.9L800.0 588.5L799.3 588.9L798.7 588.2L798.8 587.4ZM802.9 636.3L803.8 636.6L805.0 637.1L803.6 637.9L802.6 638.6L801.7 638.1L802.3 637.2Z" fill="#5e4f4b" stroke="#000" stroke-width="1" stroke-linejoin="round"/>
<path d="M799.2 576.0L799.0 574.8L799.2 573.8L800.0 573.8L800.3 574.9ZM806.1 575.6L804.7 576.9L803.5 577.5L801.9 577.1L801.2 575.5L802.5 573.8L804.1 575.1ZM799.3 592.7L800.2 591.6L801.8 592.2L802.8 593.0L801.7 593.7L800.7 594.4L799.0 594.0ZM796.3 625.1L795.1 624.8L794.1 623.9L794.8 622.6L796.0 621.2L797.6 622.2L797.6 624.1ZM797.9 574.3L797.3 574.7L796.5 573.8L796.3 572.8L797.6 573.4ZM799.2 617.6L799.9 617.2L800.9 618.5L800.0 619.0L798.7 618.7ZM802.2 638.6L803.3 637.5L804.3 637.9L803.9 640.0L802.6 639.9ZM794.6 629.9L796.4 628.4L798.3 628.0L799.0 630.4L796.6 632.2ZM795.8 615.3L795.1 615.3L794.9 614.5L796.2 614.0L797.0 613.9L797.4 614.4L796.6 615.1ZM798.2 569.8L801.7 569.8L803.2 572.0L799.9 572.2ZM803.7 566.2L804.5 566.7L805.1 567.6L803.7 568.9L802.1 568.8L802.0 567.7L802.3 566.7ZM793.7 582.5L794.5 581.7L795.2 583.6L794.1 584.1ZM798.2 605.5L800.6 603.7L802.6 603.7L800.4 605.9ZM797.4 649.7L798.7 649.8L798.9 650.7L797.2 651.3L796.1 650.3ZM798.3 620.8L799.4 620.3L800.1 621.1L800.5 622.2L799.3 622.1L798.5 621.9ZM799.0 616.8L798.0 617.5L796.9 615.6L797.1 613.9L798.5 614.7L799.4 615.0L799.5 616.3ZM802.1 609.6L800.4 610.6L798.9 609.6L800.5 607.4L802.9 607.3ZM799.0 602.0L799.9 601.0L800.7 600.7L801.5 601.3L800.9 602.1L800.2 602.5ZM797.4 637.9L798.5 638.5L798.3 639.5L797.4 640.4L796.3 639.5L796.0 638.2ZM802.2 568.8L802.0 570.3L800.4 570.9L800.0 569.4L800.4 568.7ZM801.7 581.5L800.4 581.3L798.9 580.3L799.7 578.8L801.7 578.8L802.3 580.4ZM801.4 626.2L802.3 626.5L803.6 627.3L804.6 629.1L803.2 629.3L801.9 627.9L801.0 626.9ZM798.7 570.2L798.6 568.6L801.1 568.3L802.2 569.6L800.7 571.3ZM797.1 580.6L797.6 580.8L797.1 581.6L796.3 582.0L795.6 582.0L795.7 581.3L796.4 580.4ZM803.3 586.2L803.3 587.8L802.7 588.1L801.9 588.4L802.0 586.7L802.2 585.3L802.7 585.7ZM797.5 652.8L798.2 652.1L799.9 652.9L799.3 653.8L798.3 654.1L797.3 653.4ZM800.3 641.2L798.6 640.7L799.9 640.1L801.2 640.5ZM796.7 609.8L797.3 608.8L797.8 608.8L798.2 610.0L797.5 610.2ZM803.1 629.1L802.4 630.2L801.2 628.8L802.4 627.3ZM802.8 572.4L805.0 572.5L805.2 574.3L804.0 575.4L801.5 574.6ZM800.4 619.1L799.3 620.0L798.0 620.0L797.4 619.5L798.9 618.4L800.6 618.3ZM801.2 590.6L800.0 592.9L797.9 591.5L798.8 588.8ZM800.3 607.5L798.7 607.4L797.7 606.6L797.7 605.4L799.5 605.4L800.2 606.5ZM803.3 578.5L804.1 579.0L803.5 579.5L803.0 579.6L802.3 579.4L801.6 578.7L802.4 578.2ZM803.9 587.4L803.1 587.7L802.3 587.4L802.4 586.1L803.3 585.5L804.4 584.9L804.6 586.3ZM795.7 603.8L795.3 602.4L797.4 602.9L798.8 603.9L797.7 604.8ZM799.7 607.0L800.5 606.2L801.6 607.3L801.5 608.3L801.4 609.1L800.5 608.8L799.5 608.0ZM797.9 648.4L799.2 647.6L799.5 649.8L798.3 650.5ZM796.7 624.7L798.2 625.0L798.3 626.5L796.9 626.5L795.8 625.9ZM800.6 581.4L800.3 579.8L800.5 577.9L801.3 578.1L801.9 578.5L801.4 579.9ZM802.0 646.9L801.3 649.6L799.5 647.2L800.2 644.6ZM802.6 631.1L801.8 630.2L802.6 630.0L803.4 630.2L803.6 630.9L803.4 631.3ZM802.1 619.6L802.1 620.5L800.8 622.0L800.3 621.0L801.2 619.4ZM798.0 571.5L798.9 572.2L798.8 572.8L798.4 573.5L797.4 573.4L797.1 572.4ZM795.1 603.9L795.2 602.7L796.1 602.0L796.8 601.9L797.5 602.5L796.7 603.6L795.6 604.8ZM799.2 570.8L800.1 572.2L799.2 573.5L798.3 571.5ZM800.0 583.4L801.6 583.4L801.4 586.0L799.8 586.5L799.5 585.2ZM799.7 624.1L800.6 623.0L801.6 623.2L801.0 624.2ZM796.5 593.8L795.3 592.4L796.8 591.3L799.5 591.3L798.4 593.8ZM801.2 604.1L799.9 604.5L799.6 603.4L799.8 602.4L801.0 602.7L801.9 603.3ZM796.4 585.4L795.6 585.8L794.8 585.3L795.3 584.0L796.8 584.2ZM801.8 642.5L800.9 641.7L801.3 640.7L802.0 640.1L802.9 641.9L802.3 642.6ZM797.8 611.2L798.0 610.0L799.6 610.5L800.6 612.1L798.9 613.3ZM798.0 610.3L797.3 611.1L796.5 611.6L796.2 611.0L797.1 610.1L797.9 608.9L798.3 609.3ZM803.3 649.0L802.4 649.8L801.5 649.9L801.3 649.4L802.4 649.0ZM800.1 578.3L798.9 579.2L798.2 579.6L796.8 579.6L796.8 578.1L797.7 577.3L798.7 577.8ZM797.4 608.1L796.8 607.9L797.0 607.0L797.8 606.3L798.3 606.4L798.2 607.1L798.0 608.0ZM800.8 570.8L800.6 571.4L800.3 571.8L799.8 571.0L799.5 570.2L799.4 569.2L800.1 569.5Z" fill="#000" stroke="#000" stroke-width="1" stroke-linejoin="round"/>
<path d="M803.0 576.0 L801.2 574.8 L799.0 574.8 L797.0 574.5 L795.2 575.3 L793.0 576.0 L791.4 575.8 L789.0 575.0 M802.0 596.0 L800.2 595.1 L797.9 594.2 L796.0 594.0 L792.9 595.0 L791.0 596.0 L788.5 595.7 L787.0 595.0 M802.0 607.0 L800.3 606.1 L797.0 606.0 L794.9 607.5 L793.0 608.0 L791.0 607.0 M802.0 620.0 L800.0 618.6 L797.8 619.3 L796.0 618.0 L793.4 619.0 L791.0 620.0 L789.1 619.9 L786.0 619.0 M802.0 633.0 L799.9 631.5 L797.0 631.0 L794.0 633.5 L792.0 632.7 M803.0 647.0 L800.8 646.8 L798.7 645.1 L797.0 645.0 L795.7 645.3 L793.0 647.0 L790.8 647.4 L789.0 646.5 M800.0 563.0 L797.3 561.7 L796.0 561.5" fill="none" stroke="#000" stroke-width="2" stroke-linejoin="round"/>
<path d="M643.9 701.7L644.6 702.5L644.4 703.1L643.6 702.5ZM677.7 750.1L677.0 750.3L676.5 749.9L676.1 749.1L676.7 748.0L677.8 748.5L678.2 749.4ZM644.1 706.5L643.6 705.7L643.5 705.1L644.3 704.9L644.7 705.9ZM700.7 761.6L700.7 762.6L700.2 762.4L700.0 761.3L700.4 761.1ZM641.1 703.0L641.3 701.4L642.0 700.7L642.9 701.5L642.2 703.1ZM670.7 743.4L671.4 743.0L672.4 743.1L672.8 743.8L672.2 744.4L671.2 744.3L670.3 744.0ZM713.2 790.9L712.5 790.5L712.6 789.6L712.8 789.2L713.4 789.0L713.6 790.1ZM672.4 740.1L673.0 740.1L673.7 741.2L673.2 741.7L672.6 740.9ZM696.3 763.1L695.9 761.8L696.0 761.2L696.5 760.6L697.3 761.5L698.0 762.7L697.5 763.6ZM665.1 733.0L665.5 732.4L666.3 731.7L666.4 732.5L665.9 733.5L665.0 734.1ZM713.7 786.4L714.5 787.3L714.0 788.6L712.8 788.8L711.4 788.3L711.4 786.8L712.5 785.7ZM658.6 727.7L658.6 726.8L659.3 726.1L660.3 726.3L660.2 727.7L659.1 728.3ZM691.3 761.4L692.1 760.8L693.0 760.4L693.1 760.9L692.8 761.4L692.1 762.0L691.5 761.8ZM693.2 759.9L692.8 757.8L694.5 758.2L696.1 759.1L694.9 760.5Z" fill="#5e4f4b" stroke="#000" stroke-width="1" stroke-linejoin="round"/>
<path d="M695.3 763.1L695.3 764.0L694.2 764.0L693.7 763.3ZM652.6 721.1L654.1 720.5L654.5 722.0L654.3 723.5L652.8 723.0ZM704.4 779.6L705.1 779.0L705.7 779.5L705.7 780.5L704.9 781.0L704.3 780.3ZM655.3 716.1L655.1 717.8L653.9 717.5L652.9 717.1L652.8 715.2L654.3 715.5ZM672.6 745.2L671.6 744.4L671.9 743.7L673.1 744.3L673.9 744.8L674.5 745.8L673.5 746.1ZM702.0 761.2L701.3 762.1L700.7 762.8L700.4 762.3L700.2 761.6L701.0 760.6L701.8 760.4ZM655.7 721.1L656.9 720.5L657.9 721.5L657.0 722.3L656.0 722.4L654.8 722.0ZM703.7 767.5L703.4 768.9L702.8 767.2L702.6 766.1L703.2 765.9L704.2 766.4ZM688.0 761.4L687.7 761.6L687.3 761.1L687.1 760.3L687.5 759.9L687.8 760.7ZM661.6 731.4L660.8 731.9L660.2 731.8L660.4 730.3L661.5 728.9L661.6 730.2ZM707.4 786.2L706.7 786.1L706.9 785.3L708.0 785.3L708.3 785.7ZM679.2 752.4L678.3 752.7L676.9 751.6L677.4 750.4L679.3 751.2ZM708.8 784.9L709.5 784.1L710.4 783.7L711.6 784.1L711.5 785.5L710.8 786.5L709.8 785.6ZM669.2 739.5L669.7 740.0L670.0 740.8L669.1 740.6L668.5 739.8L668.4 739.1ZM683.7 767.0L683.2 765.3L684.7 765.8L684.8 766.9ZM640.0 696.5L638.8 696.8L638.3 696.3L638.3 695.3L639.3 695.8ZM694.8 761.0L694.3 761.4L693.4 761.3L692.6 761.0L693.2 760.7L693.6 760.6L694.8 760.5ZM684.1 764.2L685.3 764.4L685.4 765.7L684.4 765.8ZM672.1 738.5L672.2 739.5L671.4 740.1L670.9 739.5L670.9 738.7ZM682.8 760.6L681.9 762.0L680.7 760.8L681.3 759.2L682.5 758.8ZM706.8 786.8L706.3 785.5L707.6 784.9L708.7 784.6L710.0 785.5L709.4 786.9L708.0 786.9ZM703.2 775.7L704.5 775.9L703.0 777.0L701.5 776.7ZM696.2 760.9L697.3 761.6L697.5 762.7L696.1 762.0ZM682.4 763.8L682.6 763.4L683.3 763.8L683.2 764.6ZM706.2 779.1L706.2 779.6L705.9 780.3L705.4 780.0L705.2 779.7L705.4 779.0L705.9 778.6ZM654.4 720.8L654.4 719.9L655.4 720.5L656.0 721.0L655.7 721.5L654.9 721.7ZM701.6 762.1L701.7 763.5L700.3 764.4L699.0 765.0L698.9 763.7L700.2 762.2ZM709.5 782.0L708.8 782.3L707.9 782.0L707.2 781.1L707.5 780.0L709.0 780.8L709.7 781.4ZM695.8 763.7L694.6 763.9L693.7 763.7L694.0 763.1L694.9 762.7L695.9 762.5L696.4 763.0ZM641.4 699.1L640.0 698.7L639.4 697.7L640.9 697.3L642.6 697.7L643.1 699.0ZM674.5 744.9L673.1 745.2L672.2 742.8L673.9 742.4ZM696.8 759.8L696.6 757.9L698.8 757.5L699.1 759.9ZM706.1 773.3L707.3 774.4L706.6 776.1L704.3 776.1L704.9 774.1ZM659.9 726.6L659.1 727.0L658.4 726.4L659.5 725.6L660.6 725.3ZM662.4 729.9L662.1 730.9L661.1 731.3L660.1 731.7L659.8 731.0L660.3 730.1L661.4 729.8ZM677.7 747.9L676.8 747.9L676.2 747.5L676.0 746.8L676.6 746.4L677.3 746.6L678.0 747.1ZM687.9 759.5L688.6 759.5L688.9 759.9L688.7 760.2L688.2 760.3L687.5 760.2L687.2 759.7ZM688.8 757.5L689.3 756.4L690.2 756.1L691.0 756.3L691.7 757.3L690.9 758.2L689.8 758.4ZM698.9 757.8L699.3 760.0L697.2 760.5L697.2 758.8ZM701.6 771.7L700.7 771.8L701.0 770.7L701.7 770.8ZM711.6 791.0L711.4 789.5L712.8 789.5L713.7 790.2L714.0 791.7L712.6 791.7ZM643.0 702.5L642.6 703.8L641.4 703.2L641.8 701.4ZM696.6 764.4L696.9 763.2L697.7 763.6L698.3 764.6L697.1 765.2ZM697.8 759.0L697.6 759.7L697.0 760.0L696.2 759.7L696.5 759.0L697.1 758.7ZM705.5 775.0L705.3 773.1L706.2 773.1L706.7 774.2L706.7 775.6ZM645.9 709.0L645.5 708.0L646.9 708.2L648.3 708.3L648.7 709.4L647.9 710.2L646.6 709.5Z" fill="#000" stroke="#000" stroke-width="1" stroke-linejoin="round"/>
<path d="M635.4 694.3L635.8 693.5L636.9 693.8L637.3 695.2L635.9 695.1ZM638.0 694.4L637.7 695.1L637.2 695.0L636.6 694.3L636.7 693.5L637.4 693.5ZM598.6 672.8L599.5 673.0L599.7 674.1L599.4 674.9L598.7 674.8L598.3 674.2L598.2 673.5ZM617.3 681.6L616.4 682.3L615.7 681.4L616.5 680.9ZM615.5 679.5L615.2 679.8L614.6 679.6L613.7 679.5L613.6 679.0L614.1 678.7L615.0 679.0ZM615.0 679.5L615.8 679.6L616.0 680.4L615.4 681.1L614.6 681.3L614.7 680.5ZM598.5 676.1L598.6 676.5L598.1 676.9L597.7 676.5L597.0 676.2L597.5 675.7L598.1 675.8ZM604.1 675.6L604.7 675.3L604.9 676.0L604.9 676.5L604.5 677.2L603.9 676.7L603.5 676.0ZM620.0 682.5L619.9 681.7L620.5 680.9L621.0 681.9L621.4 682.5L621.0 683.2L620.4 683.0Z" fill="#5e4f4b" stroke="#000" stroke-width="1" stroke-linejoin="round"/>
<path d="M595.5 679.7L594.3 678.7L594.2 677.3L595.4 677.2L595.7 678.5ZM620.8 681.7L620.2 682.3L619.3 682.4L619.0 681.4L620.1 681.2ZM623.7 684.5L622.2 684.5L622.6 682.8L624.2 682.3L625.5 682.8L624.9 684.3ZM584.5 680.9L584.6 682.0L584.1 683.0L583.4 682.7L583.5 681.5ZM627.1 686.7L627.8 685.5L628.5 686.5L628.6 687.4L627.9 687.9L626.9 687.9ZM604.1 675.3L603.4 675.9L603.1 675.7L603.3 674.9L604.3 674.1L604.8 674.4ZM621.9 681.7L622.9 682.3L622.6 683.7L621.3 683.4L620.6 682.8L620.7 681.6ZM608.1 675.5L608.9 675.6L609.1 676.2L608.8 676.8L608.0 677.3L607.3 676.3ZM634.7 690.0L636.2 690.6L635.8 691.5L634.9 692.0L633.4 691.3L633.4 690.2ZM628.9 684.8L629.5 686.3L629.1 687.3L628.3 687.4L628.1 685.1ZM598.9 673.7L598.3 672.3L599.7 673.0L599.9 674.3ZM621.9 679.6L622.1 681.0L621.3 681.8L620.4 682.1L620.2 681.3L620.5 680.4ZM616.6 679.0L617.5 678.9L617.3 680.3L616.7 681.3L615.8 681.6L615.6 680.7L615.9 679.6ZM632.3 687.3L632.7 687.0L633.2 687.0L633.4 687.6L632.9 688.0L632.2 688.1ZM590.1 678.3L591.4 679.4L589.9 680.6L588.3 680.1L588.2 679.0ZM592.7 677.8L592.5 678.8L591.9 678.8L592.0 677.4ZM613.9 678.9L613.7 678.1L614.1 678.2L614.4 678.5L614.4 679.2L614.2 679.3ZM635.1 688.6L635.4 689.1L634.9 690.0L634.2 689.8L634.0 689.2ZM627.4 685.6L628.5 686.5L627.5 687.6L626.3 687.3L625.5 686.8L625.3 685.6L626.5 685.0ZM610.4 677.1L610.6 678.0L610.2 678.8L609.4 679.2L608.7 678.2L609.1 677.2L609.7 676.6ZM617.5 679.5L618.3 678.5L619.4 678.9L619.0 680.0L618.4 680.8L617.3 681.0L617.1 680.1Z" fill="#000" stroke="#000" stroke-width="1" stroke-linejoin="round"/>
<path d="M251.5 678.5L253.9 686L254.3 691M253.6 696L252 702M249.5 706L246.7 710M243 714.5L239 719M236 722L231 727M227 730L222 734.5M219 737L216 739.5M241 665L247 664.5M257 661L268 663M271 663L285.6 665M312 664.5L334 660.5" fill="none" stroke="#000" stroke-width="1.3"/>
<path d="M15 720L20 716L27 715L34 718L41 722L36 727L30 730L22 727L15 723Z" fill="#5e4f4b" stroke="#000" stroke-width="1"/>
<path d="M182.0 6.0 L185.6 10.9 L189.0 15.0 L192.5 20.9 L196.0 27.0 L197.8 32.4 L199.1 37.2 L200.0 42.0 L199.9 46.9 L199.9 53.1 L200.5 58.4 L201.1 63.1 L201.3 68.4 L201.0 74.0 L199.9 79.8 L200.0 86.4 L198.6 92.0 L198.0 98.0 L196.1 104.1 L193.9 109.4 L191.0 115.3 L189.0 121.0 L187.4 125.9 L185.4 130.3 L183.0 135.8 L181.1 140.5 L179.0 145.0 L176.9 149.3 L174.4 154.0 L171.7 158.2 L169.7 163.0 L167.0 167.0 L165.1 171.9 L162.4 177.1 L160.2 181.7 L157.4 186.8 L155.0 192.0 L152.0 197.2 L147.8 201.6 L145.0 207.0 L146.3 212.1 L148.6 216.8 L150.0 222.0 L155.1 224.1 L161.0 226.0 M241.0 6.0 L236.8 10.6 L232.1 15.2 L228.0 20.0 L227.4 26.6 L227.2 32.9 L227.0 39.0 L226.0 44.7 L224.8 51.2 L224.0 57.0 L219.4 60.4 L213.7 62.8 L208.6 65.7 L204.0 69.0 L201.0 74.0 M241.0 6.0 L244.4 11.7 L248.0 17.0 L251.7 22.1 L254.3 26.9 L258.0 32.0 L259.6 37.4 L262.1 43.3 L264.0 49.0 L268.2 53.8 L273.0 59.0 L278.4 59.5 L283.1 59.5 L288.0 60.0 L292.5 57.9 L296.8 55.5 L302.0 53.0 L307.5 54.1 L312.0 55.0 L316.5 57.5 L322.3 60.7 L327.0 64.0 L330.9 67.5 L335.2 70.5 L339.0 74.0 L344.7 78.8 L350.0 82.7 L354.5 85.3 L359.2 88.5 L363.5 90.8 L367.8 96.0 L371.7 100.3 L376.6 105.1 L381.0 109.0 L385.6 112.2 L390.6 115.0 L395.0 117.4 L400.0 120.6 L402.3 127.1 L404.9 132.8 M404.0 133.5 L397.4 135.5 L393.3 141.0 L386.9 140.8 L381.0 141.0 L374.7 144.2 L367.6 146.4 L362.0 147.6 L356.2 148.6 L350.0 150.4 L344.0 153.8 L339.0 158.0 L333.5 158.7 L328.8 159.9 L323.5 161.0 L317.7 161.8 L312.1 163.0 L307.7 164.5 L302.0 165.0 L296.4 165.8 L289.9 167.8 L283.7 168.3 L278.0 170.0 L272.7 171.0 L268.2 173.0 L263.5 173.8 L258.2 175.9 L253.0 177.0 L247.7 179.1 L243.5 182.3 L237.6 184.2 L233.0 187.0 L227.2 190.7 L221.0 195.0 L216.7 197.4 L211.7 200.1 L206.4 203.5 L202.0 207.0 L197.0 209.7 L192.1 212.5 L187.8 215.7 L183.5 218.4 L179.9 221.7 L175.0 224.5 M161.0 222.0 L168.2 222.1 L175.0 222.0 L175.0 230.6 L167.7 230.8 L161.0 230.6 L161.0 222.0 M161.0 226.0 L156.4 225.5 L151.1 225.7 L145.4 226.0 L141.0 225.4 L135.5 225.7 L130.3 227.7 L125.4 229.7 L121.3 231.2 L115.8 233.3 L111.0 235.6 L105.7 237.3 L101.4 238.7 L96.1 240.5 L91.4 242.3 L85.8 243.1 L81.0 245.0 L76.1 246.8 L70.7 248.0 L65.3 249.6 L59.3 251.3 L54.2 253.2 L49.0 255.0 L43.1 255.8 L36.7 255.8 L30.6 256.0 L24.6 256.5 L18.2 256.2 L12.0 257.1 L6.0 257.0 M163.8 230.6 L164.9 235.9 L165.4 240.6 L165.9 245.5 L167.6 251.0 L167.8 256.0 L168.7 261.0 L169.7 266.3 L170.6 271.9 L172.0 277.9 L172.4 283.0 L173.6 288.5 L172.9 295.5 L172.4 301.5 L172.4 308.0 L172.7 312.9 L173.9 317.4 L174.4 322.9 L175.4 327.7 L175.8 332.7 L177.0 337.8 L178.1 343.5 L179.6 349.6 L180.8 356.2 L182.0 362.0 L181.8 367.6 L182.7 373.6 L183.1 379.1 L183.4 384.1 L183.5 390.0 L180.6 395.1 L177.0 399.7 L174.6 405.0 L171.7 409.8 L169.7 414.3 L167.7 418.8 L165.0 424.0 L163.7 429.4 L161.9 436.2 L161.0 441.6 L159.5 446.4 L158.2 451.8 L157.4 456.6 L156.0 461.1 L155.0 466.0 L152.2 473.0 L150.0 479.8 L147.7 485.1 L145.1 490.1 L143.0 495.0 L140.0 500.7 L138.3 506.3 L137.7 511.9 L135.5 517.4 L134.4 522.5 L133.0 527.8 L132.4 534.0 L131.9 540.3 L130.6 546.3 L130.0 552.0 L129.8 557.8 L129.7 563.3 L129.8 569.3 L130.2 574.3 L130.0 580.0 L130.0 584.6 L129.2 590.1 L128.0 595.0 L128.0 600.0 L127.4 605.5 L127.1 610.1 L127.3 614.6 L127.0 620.0 L128.2 625.1 L128.6 629.8 L128.9 634.8 L130.0 640.0 L130.5 644.7 L132.0 649.9 L133.0 655.0 L132.9 660.3 L132.0 666.4 L132.0 672.0 M6.0 460.5 L11.4 460.8 L16.0 461.2 L21.4 462.0 L27.0 462.4 L31.7 463.4 L37.0 463.7 L42.0 464.1 L48.0 465.9 L52.7 466.2 L58.1 467.0 L63.7 468.6 L68.9 469.0 L74.0 470.0 L80.0 472.4 L85.0 474.2 L91.0 476.0 L96.1 476.0 L102.1 474.9 L107.4 474.4 L112.2 474.1 L118.0 473.6 L122.6 473.6 L128.4 473.7 L132.8 473.3 L138.0 473.6 L144.1 476.7 L150.0 479.8 L156.2 479.3 L161.5 479.3 L167.2 478.8 L173.0 479.0 L178.6 478.5 L184.7 478.5 L190.0 478.4 L195.3 477.3 L200.1 476.9 L205.7 476.0 L211.1 476.0 L216.3 475.6 L221.7 474.8 L227.1 474.2 L231.8 474.6 L237.6 474.5 L242.5 474.2 L248.3 474.1 L253.4 473.8 L258.6 474.0 L264.4 472.5 L270.0 471.0 L275.4 467.8 L281.7 464.0 L285.8 460.7 L289.7 456.6 L293.0 452.4 L297.0 448.7 L300.6 445.0 L304.3 441.1 L308.4 438.2 L312.5 434.2 L315.8 431.2 L319.6 428.0 L324.3 424.2 L327.7 420.6 L330.8 416.5 L334.6 412.1 L337.8 408.3 L341.0 404.0 L346.8 403.3 L352.0 402.0 L357.6 401.1 L362.8 399.8 L368.0 399.0 L373.1 397.0 L378.7 395.4 L384.2 393.2 L390.0 390.8 L395.2 386.9 L400.7 383.4 L406.0 380.0 L405.0 382.0 M257.0 474.8 L255.3 479.6 L252.2 483.9 L250.0 488.7 L248.2 493.2 L246.0 498.0 L243.8 502.9 L241.6 508.2 L238.6 513.3 L236.5 518.0 L233.5 523.4 L231.0 529.8 L229.0 535.0 L224.9 540.3 L221.3 544.6 L216.7 550.0 L216.7 554.5 L216.0 560.3 L215.2 565.4 L215.2 570.0 L214.2 574.7 L214.0 580.0 L211.5 585.0 L209.8 589.7 L207.7 594.6 L205.6 600.0 L203.3 605.1 L201.1 609.9 L199.4 614.8 L197.4 620.1 L195.8 625.1 L194.5 629.6 L192.9 635.5 L190.3 640.6 L188.1 646.3 L186.8 650.8 L184.6 656.7 L181.1 660.6 L178.1 665.8 L175.4 669.5 L172.0 674.0 L168.3 677.5 L164.0 681.9 L160.0 686.0 M474.0 6.0 L472.8 12.4 L472.7 18.5 L471.9 24.1 L471.0 30.0 L468.3 36.0 L466.7 42.1 L464.0 48.0 L459.1 50.0 L453.9 51.5 L448.7 53.7 L443.6 55.6 L439.3 58.5 L434.0 60.0 L431.7 67.3 L429.0 74.0 L427.9 80.0 L423.9 86.3 L420.4 92.0 L418.3 97.5 L416.4 102.3 L412.7 107.2 L409.6 112.5 L411.0 120.6 L408.3 126.5 L405.5 133.0 L404.5 140.6 L404.0 147.7 L403.5 153.6 L402.5 158.4 L401.5 164.0 L399.4 170.8 L397.4 177.5 L396.8 184.2 L396.0 190.0 L395.6 195.5 L395.0 200.0 L395.4 205.5 L395.4 211.0 L396.3 216.2 L396.7 221.9 L396.9 228.2 L398.0 233.0 L398.0 239.0 L397.3 244.0 L396.0 248.8 L395.6 253.9 L394.9 258.6 L394.0 264.0 L394.7 269.4 L394.8 274.6 L396.1 280.2 L396.4 285.2 L397.1 290.4 L397.6 295.6 L398.0 301.0 L398.3 306.5 L398.7 311.6 L398.7 316.6 L399.3 322.0 L399.4 327.2 L399.5 332.7 L400.0 337.8 L401.1 343.5 L401.5 349.9 L402.2 356.1 L402.8 362.0 L403.3 366.5 L403.8 372.0 L404.6 377.4 L405.0 382.0 L404.4 389.2 L403.5 396.0 L405.4 401.0 L407.2 405.9 L409.6 410.2 L411.6 415.0 L414.5 420.5 L417.5 425.6 L419.3 431.5 L422.5 436.9 L424.3 441.4 L427.2 446.6 L428.6 451.2 L430.6 455.9 L433.0 461.0 L435.5 467.0 L438.7 472.0 L437.0 477.2 L434.5 483.1 L433.0 488.0 L430.8 493.1 L428.1 499.1 L425.6 504.4 L422.5 510.0 L419.3 514.2 L416.4 519.0 L413.6 523.7 L410.5 528.4 L407.3 533.4 L404.3 537.9 L400.8 542.5 L397.0 546.8 L393.3 551.1 L389.7 555.8 L386.6 560.0 L382.6 565.0 L379.0 569.5 L374.2 572.4 L369.7 575.2 L365.2 578.0 L360.8 580.0 L356.2 582.8 L352.0 585.8 L346.6 588.0 L342.5 590.4 L336.9 593.2 L331.6 594.9 L327.4 597.5 L322.0 600.0 L315.2 603.2 L309.0 607.0 L307.8 614.8 L307.1 620.2 L305.8 624.9 L305.0 629.6 M588.0 6.0 L587.6 11.0 L587.1 16.5 L587.0 22.0 L589.1 27.3 L591.3 31.9 L594.0 37.0 L599.2 41.5 L604.0 47.0 L604.1 52.8 L603.5 58.0 L603.0 64.0 L600.7 70.3 L599.0 76.0 L601.1 81.5 L602.7 87.7 L604.0 94.0 L600.3 98.3 L597.1 102.8 L594.6 106.5 L591.0 111.0 L593.3 116.0 L596.6 120.5 L599.0 126.0 L602.5 129.9 L605.4 134.2 L608.3 138.8 L612.0 143.0 L615.0 149.0 M405.0 134.0 L408.0 136.0 L417.7 134.0 L423.8 133.7 L430.8 132.9 L436.7 132.0 L442.1 132.6 L447.4 133.0 L453.0 133.5 L458.7 133.6 L464.3 134.2 L470.0 134.0 L476.5 135.2 L482.4 135.8 L488.0 137.0 L492.6 136.9 L498.0 137.6 L503.2 137.9 L508.3 137.5 L512.6 137.8 L518.0 138.0 L522.8 141.9 L528.0 145.0 L532.8 147.8 L537.1 150.8 L541.2 153.3 L546.1 156.5 L550.0 159.0 L555.7 159.2 L561.0 158.6 L567.0 158.0 L572.1 158.8 L576.6 160.1 L582.0 161.0 L588.4 160.2 L594.0 160.0 L598.9 158.0 L602.7 155.1 L607.5 152.3 L612.0 150.0 L621.0 148.0 L625.6 148.4 L631.4 149.7 L636.0 150.0 L641.5 149.3 L646.0 148.2 L651.0 148.0 L659.0 143.0 L663.1 140.1 L667.9 136.6 L671.6 134.0 L676.6 131.4 L681.8 129.5 L686.3 127.8 L691.0 125.6 L695.2 123.0 L699.9 120.2 L704.3 117.6 L709.1 116.0 L713.4 113.0 L719.6 109.4 L725.8 106.0 L730.1 102.8 L734.6 100.6 L738.3 97.5 L743.0 94.8 L747.6 93.0 L752.4 91.1 L757.8 88.7 L762.3 87.5 L767.3 85.6 L772.8 84.5 L777.9 82.2 L782.4 81.0 L787.3 79.3 L791.5 77.6 L797.0 75.5 L801.5 74.3 L806.0 72.6 M594.0 160.0 L591.0 164.0 L587.1 168.4 L584.0 172.0 L579.6 177.2 L575.8 181.6 L572.0 187.0 L569.0 190.0 L565.6 194.5 L562.5 198.7 L559.4 202.8 L556.2 206.7 L553.6 210.7 L549.1 214.6 L545.0 218.1 L540.5 222.2 L535.5 226.0 L530.6 229.7 L525.7 234.2 L520.0 237.9 L525.0 242.2 L530.0 247.0 L533.0 252.2 L535.8 257.7 L538.0 262.4 L539.2 268.3 L539.7 274.2 L541.2 279.2 L541.6 284.9 L543.0 291.0 L546.0 295.8 L549.8 300.2 L552.6 304.9 L556.0 309.0 L560.0 313.1 L564.6 317.4 L569.0 322.0 L571.8 326.9 L574.4 331.0 L576.9 335.6 L579.4 340.4 L582.0 345.0 L582.6 350.6 L584.1 355.7 L584.7 360.7 L587.7 365.5 L591.8 371.2 L595.0 376.0 L597.7 380.8 L600.1 384.4 L602.8 389.0 L605.1 393.3 L607.3 398.3 L609.5 402.7 L612.0 407.0 L616.1 410.3 L620.0 414.9 L624.1 418.6 L628.0 422.0 L632.4 427.2 L636.5 431.5 L634.2 436.8 L632.5 442.6 L631.0 447.7 L630.6 452.9 L630.8 457.3 L630.6 462.6 L630.1 468.0 L630.3 472.6 L630.2 477.5 L629.4 483.4 L629.7 488.0 L630.8 493.4 L631.6 498.2 L631.8 503.0 L632.5 508.4 L633.6 512.9 L633.8 518.0 L636.2 523.5 L639.1 529.2 L642.3 534.5 L644.6 539.8 L645.5 545.3 L646.9 550.7 L649.0 556.2 L650.0 561.5 L651.3 567.2 L653.1 574.0 L654.0 579.3 L655.4 585.8 L657.2 591.3 L658.6 597.0 L661.0 601.9 L663.3 606.6 L666.2 612.0 L668.5 617.3 L671.0 622.0 L674.9 625.6 L678.6 629.9 L682.9 633.8 L686.6 637.6 L690.7 641.3 L694.6 645.4 L697.9 648.8 L702.0 653.0 L705.3 658.0 L708.7 662.7 L711.7 667.2 L714.5 671.8 L715.8 676.6 L718.0 681.5 L719.2 686.7 L720.3 691.3 L722.3 696.6 L724.7 702.2 L727.9 706.9 L730.0 713.1 L733.0 718.0 L735.4 723.0 L738.6 727.9 L741.5 731.8 L744.0 737.0 L745.4 742.7 L745.9 748.3 L747.3 753.3 L748.7 758.8 L749.8 764.2 L750.9 769.1 L752.2 774.9 L752.5 780.3 L753.6 785.6 L755.0 791.0 M408.0 137.0 L411.5 141.3 L414.1 144.8 L417.7 149.0 L423.3 153.9 L427.9 158.6 L431.0 163.2 L434.4 167.1 L438.0 172.0 L440.5 176.1 L442.4 181.2 L445.6 185.1 L447.5 190.0 L454.0 195.0 L458.0 198.3 L461.1 201.9 L464.8 206.3 L469.0 209.7 L472.6 214.0 L475.0 218.9 L478.4 224.0 L481.7 229.0 L486.3 231.5 L491.2 233.5 L496.5 235.6 L501.9 235.8 L507.6 235.3 L513.7 235.6 L520.0 237.9 M520.0 237.9 L513.5 238.2 L506.0 239.0 L504.1 244.2 L502.7 249.0 L499.9 254.2 L498.6 259.1 L496.5 264.0 L493.4 269.2 L490.1 273.8 L487.7 279.1 L484.9 283.3 L481.7 288.5 L478.6 292.7 L475.7 296.2 L473.3 300.7 L469.5 304.5 L466.5 309.3 L464.0 313.0 L460.6 318.1 L458.4 323.3 L455.1 327.8 L452.0 333.0 L448.1 336.6 L443.5 339.3 L439.7 342.9 L436.1 346.2 L431.4 349.6 L427.5 352.6 L423.5 355.8 L419.6 359.9 L416.5 363.4 L412.7 367.0 L409.5 371.7 L405.9 377.1 L403.0 382.0 M412.7 367.0 L419.0 365.9 L426.0 364.7 L432.0 363.6 L437.2 363.4 L442.0 363.7 L446.7 364.1 L451.9 364.4 L457.0 365.0 L463.6 364.1 L469.2 363.1 L475.4 363.0 L481.7 362.0 L487.8 361.3 L494.0 359.9 L499.9 359.0 L506.0 357.5 L511.9 356.2 L517.7 355.9 L523.6 354.4 L530.0 353.8 L535.4 353.3 L540.6 352.6 L545.9 351.7 L551.0 352.0 L555.8 352.0 L561.9 352.4 L566.5 352.7 L572.3 352.7 L577.0 353.0 L581.9 353.3 L587.0 353.0 L593.2 354.0 L598.9 355.3 L604.5 357.1 L610.5 358.0 L615.5 359.4 L620.8 360.4 L625.7 360.9 L630.8 362.4 L636.4 363.0 L642.5 364.1 L647.7 365.7 L653.3 366.1 L658.8 367.8 L664.8 368.5 L670.3 368.9 L675.4 369.6 L680.5 369.2 L685.6 370.3 L690.6 370.2 L696.0 370.3 L701.0 371.0 L705.9 371.4 L711.9 371.0 L716.8 371.6 L721.3 371.5 L727.0 372.0 L732.0 372.2 L737.0 371.9 L742.6 372.3 L748.1 372.3 L752.8 372.0 L758.9 369.1 L765.7 366.0 L770.1 363.4 L774.4 360.5 L778.4 358.2 L783.3 355.5 L787.4 353.1 L791.6 350.0 L796.2 346.7 L801.5 343.5 L806.0 340.0 M587.0 342.6 L590.7 339.0 L595.7 335.1 L599.5 332.2 L603.8 328.2 L608.0 324.5 L613.3 322.7 L618.3 320.7 L623.7 318.1 L628.8 315.9 L633.8 314.0 L637.7 311.4 L642.0 308.7 L647.1 306.8 L650.8 303.4 L655.2 301.1 L659.7 298.6 L663.6 296.3 L668.0 293.4 L672.4 290.9 L676.5 288.2 L681.5 285.1 L685.5 283.0 L690.3 280.6 L696.1 279.2 L700.6 277.4 L706.0 275.0 L709.9 271.4 L714.6 267.9 L718.2 263.7 L722.5 261.0 L727.0 257.0 L732.5 254.3 L736.8 252.1 L742.4 249.5 L746.6 247.3 L751.9 244.5 L756.3 241.9 L760.6 239.0 L767.0 236.2 L772.9 233.2 L778.7 231.0 L784.4 229.1 L790.1 227.7 L795.0 225.8 L800.6 223.9 L806.0 222.0 M579.5 359.4 L573.8 363.0 L568.9 367.3 L564.0 371.0 L560.7 375.6 L556.6 380.0 L555.2 384.9 L552.8 389.3 L551.6 394.5 L549.8 399.0 L546.5 403.0 L543.1 406.4 L539.7 410.3 L536.8 413.8 L533.5 418.0 L530.6 421.5 L527.0 425.8 L523.8 429.8 L520.0 434.0 L516.8 438.8 L514.4 443.5 L511.8 447.7 L507.6 450.3 L503.2 453.2 L498.5 455.4 L494.5 458.4 L490.0 461.0 L484.1 462.6 L479.1 464.5 L473.8 466.7 L468.2 469.0 L463.0 470.7 L457.2 470.6 L450.9 471.8 L444.9 472.2 L438.7 472.0 M636.5 431.5 L640.7 435.7 L645.3 440.2 L650.0 445.0 L654.3 446.7 L659.3 449.2 L664.2 450.3 L668.8 452.9 L673.0 454.1 L678.2 456.2 L682.5 458.5 L687.7 459.9 L693.6 462.2 L699.2 463.8 L704.5 465.0 L709.6 466.7 L714.6 467.2 L720.1 467.9 L725.5 468.9 L730.8 469.7 L736.7 470.7 L742.5 470.8 L747.6 471.7 L752.5 471.9 L758.4 472.0 L763.1 473.5 L768.1 476.3 L772.0 478.5 L777.0 480.0 L781.8 481.9 L786.2 483.0 L791.5 485.5 L796.0 487.0 L800.7 489.9 L806.0 493.8 M659.0 143.0 L664.6 147.7 L670.0 152.7 L671.8 159.2 L674.0 165.0 L679.1 168.3 L684.0 172.4 L685.4 178.8 L686.4 184.7 L691.3 186.8 L696.1 188.1 L701.0 189.6 L705.6 189.0 L710.8 188.7 L716.0 188.4 L721.5 186.8 L727.2 185.5 L732.3 184.8 L738.0 183.5 L743.7 182.4 L750.7 181.9 L756.4 180.4 L762.7 179.8 L767.9 178.9 L772.1 177.3 L777.5 176.3 L782.4 174.9 L789.4 174.0 L797.0 172.4 L806.0 175.4 M716.0 188.4 L717.1 194.5 L718.0 200.0 L722.9 202.9 L727.0 205.5 L731.0 210.5 L734.7 215.9 L739.6 215.8 L745.0 215.9 L747.9 220.3 L750.0 224.9 L752.8 228.8 L755.4 233.6 L758.2 237.6 L760.6 241.7 L761.7 247.4 L763.1 252.2 L764.3 257.2 L765.7 262.4 L767.1 267.5 L769.1 273.0 L771.0 278.0 L773.9 281.6 L777.5 285.7 L781.0 289.1 L783.8 293.5 L788.1 296.3 L792.7 298.4 L796.8 301.0 L801.4 304.9 L806.0 309.0 M160.0 686.0 L163.5 681.6 L167.7 678.4 L172.0 674.0 L174.8 669.1 L178.4 664.9 L181.6 659.9 L184.6 655.4 L192.0 658.0 L197.5 655.8 L203.6 654.5 L209.0 653.0 L213.8 651.0 L219.0 649.3 L224.0 648.0 L229.5 645.9 L235.0 644.7 L241.0 643.0 L247.1 642.1 L253.6 641.9 L261.2 642.5 L268.0 644.0 L272.9 643.1 L277.6 642.4 L283.0 641.9 L287.9 639.6 L293.0 637.0 L298.8 633.2 L305.0 629.6 L309.3 626.4 L312.7 623.0 L319.2 623.7 L326.1 625.4 L332.4 625.9 L337.0 627.5 L342.0 628.3 L347.0 629.6 L351.5 630.5 L357.0 632.0 L362.7 634.2 L369.0 637.0 L375.7 637.5 L381.7 637.0 L385.2 633.6 L389.0 629.6 L396.5 624.6 L401.1 622.9 L406.0 621.0 L412.0 620.2 L418.6 618.5 L424.0 618.9 L429.7 619.1 L434.8 619.4 L439.7 618.4 L444.6 617.0 L450.8 618.9 L457.0 620.6 L461.7 619.0 L466.5 618.6 L471.8 616.4 L476.6 615.7 L482.1 616.2 L488.2 617.1 L494.0 617.0 L500.9 616.1 L507.4 616.6 L513.6 615.7 L519.6 618.6 L524.9 620.7 L530.8 623.0 L536.7 625.0 L542.5 626.7 L548.0 628.0 L552.8 629.8 L558.0 631.5 L562.7 632.6 L567.8 634.0 L573.1 636.3 L577.9 637.6 L582.6 640.0 L589.5 639.3 L597.0 639.0 L602.2 639.2 L607.2 639.9 L611.7 640.7 L617.0 641.6 L623.2 642.7 L629.8 643.0 L635.1 644.5 L641.7 645.0 L646.7 646.5 L651.7 646.8 L656.2 648.0 L661.2 649.2 L666.5 650.9 L671.0 651.6 L675.9 653.4 L681.8 654.1 L686.9 655.9 L691.9 656.7 L697.0 658.4 L702.0 659.4 L707.0 659.9 L712.0 660.1 L717.6 661.0 L723.1 660.4 L728.2 660.2 L733.4 659.7 L737.9 659.7 L743.3 658.9 L748.7 658.8 L754.2 658.0 L760.3 657.4 L765.4 656.3 L771.1 655.1 L776.6 654.7 L786.0 651.6 M801.5 560.0 L799.1 565.3 L797.6 570.4 L795.0 575.5 L792.2 581.1 L790.3 585.6 L787.5 591.0 L786.3 596.8 L785.7 603.2 L784.4 609.7 L785.1 615.3 L785.5 620.6 L785.3 625.5 L786.0 631.4 L785.6 636.1 L785.0 642.1 L784.4 647.0 L786.0 656.0 L788.6 662.3 L792.0 668.7 L795.2 674.5 L798.4 681.0 L800.6 685.4 L803.1 689.3 L806.0 694.0 M806.0 537.0 L804.3 542.8 L803.5 547.3 L801.7 553.0 L799.9 558.4 L797.4 563.8 L796.0 569.6 L794.2 574.5 L792.5 580.1 L789.8 586.1 L788.0 591.0 M778.0 656.0 L779.0 649.0 L785.0 646.5 L792.0 650.0 L794.0 658.0 L790.0 665.0 L783.0 666.0 L778.0 660.0 L778.0 656.0 M595.0 348.0 L593.7 354.0 L590.0 358.4 L585.0 360.0 L580.0 358.4 L576.3 354.0 L575.0 348.0 L576.3 342.0 L580.0 337.6 L585.0 336.0 L590.0 337.6 L593.7 342.0 L595.0 348.0 M583.0 293.5 L579.6 298.3 L577.0 303.6 L574.0 309.0 L572.5 314.2 L571.8 319.2 L570.0 324.5 L572.2 328.9 L575.7 333.4 L578.0 338.0 M394.7 99.6 L399.7 99.7 L405.5 100.3 L410.7 101.2 L416.4 102.3 L422.3 104.8 L428.6 107.0 L435.3 112.5 L436.2 118.8 L436.7 126.0 L435.0 133.1 L434.0 139.6 L433.0 145.3 L431.0 150.6 L430.0 155.8 L423.4 159.4 L417.7 162.6 L412.0 163.8 L407.2 164.4 L401.5 165.3 L394.3 165.7 L386.6 165.3 L382.2 162.1 L377.0 158.6 L373.1 153.0 L369.0 147.7 L367.5 141.9 L365.6 136.9 L367.9 129.7 L370.3 123.3 L373.5 118.7 L377.4 113.5 L381.0 109.0 L386.0 105.7 L390.2 102.7 L394.7 99.6 M6.0 628.0 L8.7 634.5 L12.0 640.0 L12.9 645.4 L13.1 650.4 L14.0 655.0 L15.4 661.9 L16.0 668.0 L22.7 666.2 L30.0 665.0 L34.6 662.1 L40.2 659.6 L45.0 657.4 L50.0 655.0 L55.2 652.5 L60.2 651.5 L64.8 648.9 L70.0 647.0 L75.2 646.3 L80.3 646.5 L84.7 645.5 L90.0 645.0 L94.6 644.6 L99.9 644.5 L105.2 644.0 L110.0 643.0 L116.3 642.3 L121.9 641.2 L128.0 640.0 L133.1 640.3 L139.4 641.5 L144.2 641.5 L150.0 642.0 L154.9 643.6 L160.1 644.8 L165.4 646.5 L170.0 648.0 L175.1 650.7 L180.2 652.9 L184.6 655.4 M90.0 645.0 L92.6 650.3 L95.0 655.0 L98.1 658.9 L102.0 663.9 L105.0 668.0 L110.2 670.0 L114.7 671.7 L120.0 673.0 L126.6 674.4 L133.0 675.0 L138.7 677.0 L143.9 678.0 L150.0 680.0 L155.1 683.2 L160.0 686.0 M128.0 640.0 L129.6 644.6 L131.7 649.6 L133.0 655.0 L133.1 660.4 L132.5 666.4 L132.0 672.0 M146.5 473.6 L148.0 470.0 L154.0 468.7 L156.0 474.0 M627.0 420.6 L629.0 428.0 L632.4 434.0 L636.5 431.5" stroke="#87700a" stroke-linejoin="round"/>
<path d="M6.0 105.2 L13.2 105.2 L20.1 105.2 L27.0 105.2 L34.2 105.0 L41.4 105.3 L48.5 105.2 L55.7 105.1 L63.0 105.0 L69.4 105.2 L76.9 105.1 L83.8 105.1 L90.8 105.4 L98.3 105.0 L105.2 105.2 L112.0 105.4 L119.3 105.5 L126.7 105.5 L133.3 104.9 L140.8 104.9 L147.8 105.0 L154.7 105.2 L158.0 109.0 L160.0 113.0 L161.0 120.0 L157.0 128.0 L152.0 133.0 L148.0 137.0 L143.0 143.0 L138.0 149.0 L145.1 148.7 L151.7 149.3 L159.0 149.0 L166.3 149.2 L172.8 149.1 L179.9 149.0 L187.0 149.0 M209.0 105.0 L215.9 104.9 L222.9 105.0 L229.8 105.4 L236.9 105.3 L244.2 105.4 L250.8 105.7 L258.3 105.7 L265.0 105.5 L272.5 105.8 L280.4 105.3 L287.9 105.9 L295.7 106.1 L303.5 106.2 L311.0 106.0 L312.0 97.0 L311.0 89.5 L322.0 91.6 L329.4 91.4 L336.5 91.1 L343.5 91.1 L350.4 91.3 L357.2 91.4 L364.7 91.1 L371.5 91.4 L378.7 90.8 L385.7 91.4 L392.8 90.9 L400.0 91.0 L407.1 91.6 L414.4 91.5 L421.4 91.5 L428.1 92.1 L435.6 92.2 L442.3 93.0 L449.6 92.7 L456.6 93.0 L464.0 93.6 L471.3 93.8 L478.9 93.7 L486.2 93.8 L493.7 93.8 L501.1 93.9 L508.7 94.1 L515.8 94.2 L523.2 94.4 L530.7 94.9 L538.0 94.8 L545.6 95.3 L552.6 95.2 L559.9 95.2 L567.3 95.9 L574.4 95.9 L581.9 96.0 L589.2 96.3 L596.7 96.2 L604.0 96.5 L612.0 96.2 L619.7 96.9 L627.7 96.7 L636.0 96.8 L644.1 96.3 L652.3 96.3 L660.3 96.4 L668.1 96.3 L675.7 96.1 L684.0 96.0 L691.8 96.1 L699.4 95.9 L706.5 95.6 L714.4 95.2 L722.2 95.2 L729.6 95.2 L737.0 95.6 L744.9 95.3 L752.5 95.1 L760.3 94.6 L767.6 94.8 L777.2 94.2 L787.0 94.0 L796.6 95.9 L806.0 98.0 M145.0 238.5 L152.5 238.3 L159.2 238.8 L166.7 238.5 L173.7 238.7 L180.7 238.7 L187.9 238.7 L195.0 238.8 L202.8 238.2 L209.4 238.8 L217.1 238.4 L224.3 238.6 L231.1 238.6 L238.4 238.2 L245.9 238.7 L252.6 238.4 L260.0 238.5 L268.0 238.2 L275.6 238.1 L284.0 237.6 L291.3 237.7 L299.4 237.5 L306.8 237.9 L313.1 237.7 L320.3 237.5 L327.3 237.8 L335.0 238.2 L341.6 238.2 L348.8 237.7 L356.0 237.9 L363.1 237.9 L370.1 238.2 L376.9 238.1 L383.9 238.5 L391.0 238.8 L398.0 238.5 L405.3 238.8 L412.3 238.8 L419.9 239.0 L427.1 238.7 L434.7 238.6 L441.7 239.1 L449.2 238.9 L456.0 239.2 L463.6 238.9 L470.8 238.9 L478.5 239.4 L485.8 239.4 L492.8 239.3 L500.0 239.2 L508.0 239.0 L515.0 239.1 L522.3 239.1 L530.0 239.3 L537.4 238.9 L544.9 239.1 L551.7 238.8 L559.3 238.8 L566.6 238.6 L573.8 238.8 L580.9 238.7 L588.5 238.6 L596.3 238.6 L603.3 238.6 L610.8 238.2 L618.3 238.4 L626.0 238.2 L633.5 238.5 L641.0 238.3 L649.0 238.1 L656.4 238.0 L664.1 238.1 L671.2 238.1 L679.0 237.9 M299.4 237.5 L302.0 242.0 L306.8 248.0 L305.8 256.1 L305.1 264.2 L304.6 272.5 L303.6 280.1 L303.0 288.5 L302.1 295.8 L301.3 302.7 L300.6 309.7 L299.9 317.0 L298.9 323.9 L297.6 330.6 L297.0 337.8 L296.6 344.9 L296.2 352.1 L295.3 358.7 L295.0 365.7 L294.3 372.8 L293.8 380.0 L292.8 387.8 L292.0 395.5 L290.6 403.4 L290.1 411.1 L289.0 418.7 L288.2 426.5 L287.0 434.0 L286.3 441.2 L285.1 449.2 L284.9 456.6 L283.7 464.1 L283.3 471.9 L282.1 479.1 L281.4 487.0 L280.6 494.6 L280.0 501.9 L279.7 511.1 L279.5 520.8 L279.8 528.7 L280.5 536.7 L280.5 545.1 L280.6 553.1 L281.7 561.6 L281.7 569.5 L282.2 577.4 L283.0 585.0 L283.4 592.4 L283.8 600.0 L284.1 608.2 L284.5 616.3 L284.5 624.3 L285.2 632.0 L285.5 639.9 L285.6 648.0 M492.8 239.3 L493.8 246.4 L495.2 253.2 L496.1 260.5 L497.2 267.3 L498.1 274.7 L499.2 281.6 L500.0 288.5 L501.5 295.6 L502.6 302.4 L503.8 310.0 L505.3 316.4 L506.1 323.5 L507.8 330.5 L508.8 337.8 L510.2 344.6 L511.1 352.2 L512.1 359.0 L513.4 366.1 L514.4 373.1 L515.9 380.0 L517.1 387.6 L518.5 394.6 L520.0 401.7 L521.5 411.0 L523.7 420.1 L525.4 428.8 L528.3 435.7 L531.0 443.1 L533.5 450.4 L536.5 458.8 L540.0 466.7 L537.6 474.8 L545.7 481.6 L536.0 488.0 L532.0 499.0 L531.6 505.9 L530.7 513.1 L530.5 520.0 L530.3 527.3 L530.4 534.8 L530.8 542.5 L531.4 550.5 L531.9 558.6 L532.0 566.9 L534.0 580.0 L535.8 587.4 L539.5 597.0 L542.0 603.4 M345.0 595.3 L352.7 595.4 L360.1 595.2 L367.2 595.3 L375.3 595.0 L382.3 594.6 L389.8 595.2 L397.4 594.6 L405.0 594.3 L412.7 594.8 L420.0 594.5 L427.1 594.2 L434.8 594.7 L441.9 594.3 L449.3 594.5 L455.9 594.8 L463.6 594.2 L470.9 594.5 L478.0 594.1 L484.9 594.6 L492.0 594.2 L499.3 594.4 L506.6 594.5 L514.1 594.5 L521.6 594.7 L528.3 594.2 L535.8 594.3 M345.0 595.3 L342.0 600.0 L343.5 607.0 L349.6 614.8 L354.6 624.6 L358.0 632.0 L357.0 639.4 L354.6 644.0 M546.8 619.4 L554.6 619.9 L562.3 620.5 L569.7 621.0 L577.4 621.6 L584.7 622.6 L592.4 623.0 L599.7 623.1 L606.3 623.5 L613.7 624.2 L620.7 624.7 L627.4 624.9 L634.3 625.1 L641.7 625.6 L649.3 626.0 L656.9 626.5 L664.1 627.4 L671.4 628.0 L679.0 628.1 L686.6 629.0 L693.5 629.5 L701.2 629.9 L708.4 630.2 L715.5 630.7 L722.5 630.9 L729.4 631.1 L736.5 631.4 L744.0 632.0 L745.0 640.0 L747.0 647.0 L751.8 651.0 L758.0 650.0 L759.6 637.6 L758.0 629.7 L756.5 622.0 L761.0 611.0 L770.4 609.7 L779.8 614.0 L786.0 616.0 L792.0 617.5 M6.0 415.3 L13.3 415.5 L20.4 415.6 L28.1 415.1 L35.2 415.1 L42.1 415.1 L49.5 415.0 L56.6 415.5 L64.5 415.6 L71.2 415.0 L78.8 415.3 M44.0 594.0 L51.4 593.9 L58.1 594.2 L65.3 593.9 L72.2 593.8 L79.6 594.3 L86.3 593.9 L93.7 593.9 L100.8 594.1 L107.7 593.8 L114.9 594.3 L121.8 594.1 L129.4 594.2 L136.2 594.4 L143.6 594.5 L150.4 594.1 L157.6 594.4 L164.8 594.2 L171.8 594.5 L178.8 593.9 L186.0 594.2 M186.0 594.5 L183.0 601.0 L180.0 609.0 L178.5 615.0 L177.0 624.0 L181.0 630.0 L184.7 638.8 L188.3 644.0 L191.0 651.0 L193.0 658.0 L194.6 666.0 L197.0 670.0 M679.0 237.9 L686.1 235.6 L693.4 233.9 L701.0 231.4 L708.8 228.4 L716.6 225.0 L724.3 223.0 L732.0 221.0 L745.0 220.3 L753.2 220.9 L761.8 220.9 L770.4 221.5 L778.7 221.6 L788.1 222.1 L796.8 222.8 L806.0 223.0 M679.0 237.9 L672.6 245.6 L664.8 254.7 L661.0 263.7 L670.0 272.8 L676.4 277.1 L683.0 281.8 L694.6 284.4 L701.0 296.0 L706.0 309.0 L711.3 316.6 L716.6 324.5 L721.6 330.4 L727.0 336.0 L733.3 342.0 L739.9 347.8 L744.8 354.0 L750.0 360.7 L760.6 368.5 L767.0 378.8 L772.0 390.8 L780.0 399.0 L790.9 407.0 L797.6 415.0 L799.0 428.8 L801.9 435.7 L804.4 442.3 L805.3 450.5 L806.0 458.5 M588.5 238.6 L588.9 231.1 L589.8 223.6 L595.0 215.9 L602.2 213.5 L609.0 210.7 L611.8 200.0 L615.0 194.0 L620.0 192.0 L627.4 189.6 L634.6 187.0 L641.8 187.4 L649.4 188.4 L659.0 181.0 L669.0 175.0 L675.4 170.9 L681.4 167.5 L688.8 168.7 L692.5 162.5 L693.7 155.0 L700.0 154.0 L704.8 149.0 L711.0 144.0 L716.0 145.0 L718.0 152.7 L725.8 146.5 L733.0 139.0 L744.0 135.0 L750.0 139.0 L757.8 138.0 L762.7 130.5 L767.4 124.2 L772.5 118.0 L782.0 119.5 L780.0 115.8 L783.6 103.5 L787.0 94.0 M636.0 96.5 L644.5 90.0 L651.9 88.1 L659.0 86.0 L668.0 84.6 L676.5 82.5 L681.0 74.0 L688.3 71.8 L696.0 70.0 L697.0 61.5 L707.0 55.0 L708.5 48.0 L715.5 44.2 L723.0 40.6 L731.5 37.1 L740.5 33.0 L746.8 27.0 L753.0 21.0 L761.5 15.0 L757.8 11.0 L750.0 6.0 M761.5 15.0 L766.0 13.5 L765.0 22.0 L770.0 29.5 L780.0 37.0 L787.0 42.0 L797.0 39.5 L806.0 33.0 M202.0 6.0 L202.0 9.7 L202.9 12.4 L204.0 15.0 L204.9 18.0 L206.1 21.7 L208.0 25.0 L205.7 28.1 L204.3 30.6 L202.0 34.0 L203.4 38.0 L206.0 42.0 L207.1 44.7 L208.3 47.0 L209.1 50.6 L211.0 53.0 L213.7 56.3 L216.0 59.0 M221.0 58.0 L226.0 53.0 L229.7 48.5 L233.0 44.0 L236.6 42.0 L241.0 39.0 L248.0 41.0 L253.0 43.4 L258.0 46.0 L262.7 47.9 L268.0 50.0 L272.1 51.9 L275.0 54.0 L280.0 53.0 L283.0 47.0 L280.9 42.5 L278.0 39.0 L277.0 32.0 L280.0 25.0 L284.1 23.2 L288.0 22.0 L291.7 21.1 L295.9 20.8 L300.0 20.0 L304.4 18.9 L309.0 17.0 L309.0 11.0 L305.0 6.0 M216.0 59.0 L216.5 58.0 L217.4 58.3 L218.3 58.8 L219.1 59.3 L219.9 59.9 L220.7 60.2 L221.6 60.3 L222.5 60.1 L223.3 59.7 L224.2 59.0 L225.1 58.3 L226.2 57.7 L227.4 57.4 L228.8 57.6 L230.0 58.4 L230.8 59.6 L230.8 60.8 L230.3 61.8 L229.6 62.6 L228.7 63.3 L227.8 63.9 L227.1 64.6 L226.6 65.3 L226.5 66.1 L226.8 66.9 L227.5 67.6 L228.4 68.2 L229.3 68.6 L230.3 69.0 L231.2 69.5 L231.9 70.2 L232.3 71.0 L232.4 72.0 L232.0 73.0 L231.2 73.6 L230.2 73.9 L229.2 74.4 L228.6 75.2 L228.7 76.1 L229.4 76.9 L230.4 77.5 L231.5 78.1 L232.3 79.0 L232.4 80.1 L232.2 80.9 L231.9 81.6 L231.5 82.0 L231.1 82.1 L230.6 82.1 L230.2 81.9 L229.8 81.6 L229.4 81.3 L229.0 80.8 L228.6 80.5 L228.2 80.1 L227.8 79.9 L227.3 79.7 L226.7 79.8 L226.0 80.0 L225.4 80.4 L224.8 81.1 L224.4 81.8 L224.1 82.7 L224.0 83.6 L224.1 84.5 L224.4 85.2 L224.8 85.9 L225.3 86.4 L225.8 86.7 L226.4 86.8 L226.9 86.8 L227.3 86.6 L227.8 86.4 L228.2 86.1 L228.7 85.9 L229.2 85.7 L229.7 85.7 L230.3 85.8 L230.8 86.1 L231.3 86.7 L231.7 87.4 L231.9 88.4 L231.9 89.4 L231.6 90.5 L231.0 91.4 L230.1 92.0 L229.0 92.2 L228.0 92.1 L227.0 91.7 L226.0 91.2 L225.1 90.8 L224.1 90.5 L223.0 90.4 L222.1 90.6 L221.3 91.0 L221.0 91.6 L221.0 92.4 L221.4 93.2 L222.1 94.0 L222.8 94.8 L223.7 95.4 L224.6 96.0 L225.4 96.7 L226.1 97.5 L226.4 98.7 L226.0 100.0 L224.9 101.3 L223.0 102.1 L221.0 102.2 L219.7 101.7 L218.9 101.0 L218.6 100.2 L218.6 99.4 L218.7 98.7 L218.9 97.9 L219.1 97.2 L219.2 96.4 L219.3 95.7 L219.2 94.9 L219.1 94.2 L218.7 93.5 L218.1 92.9 L217.2 92.4 L216.1 92.1 L214.7 92.1 L213.4 92.4 L212.4 93.1 L211.8 93.9 L211.7 94.7 L211.9 95.4 L212.1 96.1 L212.3 96.8 L212.5 97.5 L212.6 98.2 L212.8 99.0 L213.1 99.5 L213.7 99.8 L214.1 100.1 L214.0 100.5 L213.7 101.1 L213.1 101.8 L212.4 102.3 L211.7 102.6 L210.9 102.8 L210.2 102.7 L209.6 102.5 L209.0 102.2 L208.4 101.9 L207.9 101.6 L207.3 101.3 L206.6 101.1 L205.9 101.0 L205.2 101.2 L204.4 101.5 L203.8 101.9 L203.2 102.5 L202.8 103.2 L202.6 103.9 L202.6 104.6 L202.7 105.3 L203.0 105.9 L203.4 106.5 L203.8 107.1 L204.3 107.5 L204.8 107.9 L205.4 108.3 L205.9 108.7 L206.3 109.1 L206.6 109.6 L206.7 110.2 L206.4 110.9 L205.9 111.6 L205.0 112.3 L203.9 112.7 L202.7 112.8 L201.6 112.4 L200.6 111.7 L199.7 111.2 L198.6 111.2 L197.9 111.8 L197.6 112.9 L197.8 114.0 L198.2 115.1 L198.5 116.0 L198.8 116.2 L198.8 116.0 L198.6 116.0 L198.4 116.3 L198.1 116.6 L197.8 116.9 L197.4 117.1 L197.0 117.2 L196.5 117.1 L196.1 117.0 L195.8 116.8 L195.4 116.5 L195.1 116.2 L194.8 115.9 L194.5 115.7 L194.0 115.6 L193.5 115.8 L193.0 116.4 L192.6 117.3 L192.4 118.6 L192.6 119.9 L193.0 121.1 L193.5 122.0 L194.1 122.8 L194.7 123.3 L195.4 123.6 L196.0 123.8 L196.6 123.8 L197.1 123.7 L197.6 123.7 L198.0 123.5 L198.3 123.3 L198.5 123.0 L198.7 122.6 L198.7 122.2 L198.8 121.8 L198.9 121.4 L199.2 121.1 L199.5 120.8 L200.0 120.6 L200.6 120.6 L201.3 120.8 L202.2 121.3 L203.0 122.6 L203.2 125.6 L201.4 128.5 L199.6 129.6 L198.2 129.9 L197.1 129.7 L196.4 129.3 L196.0 128.7 L195.8 128.0 L195.8 127.3 L196.0 126.6 L196.1 125.9 L196.2 125.2 L196.2 124.5 L196.1 123.8 L195.7 123.1 L195.2 122.6 L194.6 122.1 L193.7 121.9 L192.7 122.0 L191.7 122.5 L190.6 123.2 L189.8 124.3 L189.4 125.4 L189.6 126.1 L190.3 126.6 L191.0 126.9 L191.6 127.3 L192.2 127.7 L192.7 128.2 L193.0 128.8 L193.3 129.5 L193.4 130.2 L193.4 130.8 L194.0 130.9 L195.2 128.0 L194.8 127.4 L194.7 128.1 L194.6 129.2 L194.2 130.3 L193.6 131.3 L192.9 132.3 L192.2 133.3 L191.6 134.2 L191.1 134.9 L190.7 135.2 L190.6 135.1 L190.8 135.3 L191.2 135.9 L191.7 136.7 L192.3 137.5 L192.8 138.3 L193.2 139.2 L193.5 140.1 L193.5 141.1 L193.2 142.0 L192.5 142.8 L191.6 143.2 L190.5 143.2 L189.4 143.2 L188.5 143.8 L188.2 144.7 L188.6 145.6 L188.9 146.4 L188.9 147.2 L188.5 148.1 L188.0 148.8 L187.6 149.7 L187.6 150.7 L188.1 151.6 L188.9 152.2 L189.8 152.8 L190.3 153.6 L190.4 154.7 L189.9 155.6 L189.1 156.2 L188.2 156.5 L187.4 157.0 L186.8 157.6 L186.6 158.4 L186.9 159.3 L187.5 160.0 L188.2 160.6 L188.9 161.4 L189.2 162.4 L189.0 163.5 L188.2 163.9 L187.3 163.9 L186.4 164.0 L185.8 164.7 L185.9 165.7 L186.3 166.5 L186.3 167.4 L185.3 168.0 L184.2 168.1 L183.2 167.8 L182.3 167.3 L181.5 167.0 L180.7 167.0 L179.9 167.3 L179.3 167.9 L178.9 168.7 L178.6 169.6 L178.3 170.5 L177.8 171.3 L177.0 171.9 L176.1 172.1 L175.2 172.2 L174.3 172.1 L173.5 172.3 L172.8 173.0 L172.8 174.0 L173.2 174.9 L174.0 175.6 L174.8 176.4 L175.5 177.2 L175.8 178.2 L175.8 179.1 L175.6 179.8 L175.3 180.3 L174.9 180.5 L174.5 180.6 L174.1 180.5 L173.7 180.3 L173.3 180.0 L173.0 179.6 L172.6 179.3 L172.3 179.0 L171.9 178.8 L171.4 178.6 L170.9 178.7 L170.4 178.9 L169.8 179.3 L169.3 179.8 L168.9 180.5 L168.6 181.3 L168.4 182.0 L168.5 182.7 L168.6 183.3 L168.9 183.9 L169.3 184.4 L169.8 184.9 L170.2 185.2 L170.7 185.5 L171.2 185.5 L171.6 185.5 L172.0 185.3 L172.4 185.0 L172.8 184.8 L173.2 184.5 L173.6 184.3 L174.1 184.3 L174.6 184.4 L175.1 184.8 L175.5 185.4 L175.7 186.4 L175.7 187.5 L175.4 188.8 L174.7 190.1 L173.7 191.1 L172.7 191.8 L171.7 192.3 L170.7 192.5 L169.9 192.6 L169.2 192.4 L168.7 192.2 L168.3 191.9 L168.1 191.6 L168.1 191.3 L168.1 191.0 L168.3 190.7 L168.6 190.4 L168.9 190.1 L169.2 189.8 L169.5 189.5 L169.8 189.2 L169.9 188.9 L170.0 188.6 L170.0 188.3 L169.8 188.0 L169.5 187.8 L169.1 187.6 L168.6 187.5 L168.0 187.4 L167.3 187.4 L166.6 187.5 L165.9 187.7 L165.1 188.0 L164.3 188.5 L163.6 189.0 L162.9 189.7 L162.3 190.4 L161.9 191.1 L161.6 191.8 L161.5 192.5 L161.4 193.1 L161.5 193.5 L161.7 193.8 L162.0 194.0 L162.3 194.1 L162.6 194.1 L163.0 193.9 L163.3 193.8 L163.7 193.6 L164.1 193.3 L164.4 193.2 L164.8 193.0 L165.1 193.0 L165.4 193.0 L165.7 193.2 L166.0 193.6 L166.1 194.0 L166.0 194.5 L165.9 195.0 L165.5 195.5 L165.0 196.0 L164.3 196.5 L163.5 197.0 L162.7 197.3 L161.7 197.6 L160.6 197.2 L159.7 196.4 L158.6 196.0 L157.6 196.4 L157.5 197.3 L157.8 198.1 L157.9 199.0 L157.3 199.6 L156.6 200.2 L155.8 200.7 L155.1 201.3 L154.6 202.1 L154.5 203.2 L154.8 204.2 L155.5 205.1 L156.3 205.8 L157.2 206.4 L158.0 207.1 L158.6 207.9 L158.8 208.7 L158.6 209.4 L158.1 209.9 L157.4 210.1 L156.6 210.2 L155.7 210.2 L154.8 210.2 L153.9 210.4 L153.0 210.8 L152.2 211.4 L151.8 212.4 L151.8 213.5 L152.3 214.4 L153.1 215.1 L154.0 215.3 L155.0 215.2 L155.9 214.8 L156.7 214.3 L157.4 213.7 L158.2 213.2 L158.9 212.9 L159.7 212.8 L160.4 213.0 L160.9 213.6 L161.1 214.6 L161.0 215.8 L160.6 216.9 L160.0 218.0 L159.4 219.0 L158.9 220.0 L158.6 221.0 L158.6 221.9 L158.9 222.7 L159.5 223.5 L160.2 224.4 L160.8 225.3 L161.1 226.6 L160.9 228.0 L160.1 229.2 L158.9 229.7 L157.8 229.4 L157.0 228.8 L156.3 228.0 L155.6 227.2 L154.7 226.5 L153.8 226.3 L153.0 226.6 L152.3 227.3 L152.1 228.3 L152.1 229.3 L152.3 230.3 L152.4 231.4 L152.3 232.3 L151.7 233.1 L150.9 233.5 L150.0 233.5 L149.0 233.4 L148.0 233.2 L147.0 233.2 L146.0 233.7 L145.5 234.6 L145.5 235.7 L146.1 236.6 L146.9 237.2 L147.6 237.9 L148.2 238.6 L148.3 239.5 L148.1 240.3 L147.5 241.0 L146.8 241.5 L145.9 241.9 L144.9 242.2 L144.0 242.7 L143.1 243.4 L142.5 244.2 L142.3 244.9 L142.4 245.5 L142.9 245.7 L143.8 245.9 L144.8 246.4 L145.7 247.1 L146.5 247.9 L147.2 248.9 L147.5 250.2 L147.0 251.6 L145.9 252.8 L144.5 253.4 L143.2 253.2 L142.4 252.5 L142.1 251.4 L142.1 250.3 L142.3 249.1 L142.4 248.0 L142.4 246.9 L142.1 245.8 L141.6 244.9 L140.8 244.5 L139.9 244.7 L139.2 245.4 L138.9 246.5 L139.0 247.6 L139.3 248.7 L139.8 249.8 L140.2 250.9 L140.4 252.0 L140.2 253.2 L139.5 254.1 L138.6 254.5 L137.7 254.3 L137.0 253.7 L136.5 252.8 L136.3 251.8 L136.3 250.7 L136.4 249.7 L136.5 248.6 L136.5 247.6 L136.2 246.6 L135.6 245.7 L134.6 245.2 L133.4 245.1 L132.2 245.7 L131.4 246.7 L131.2 247.8 L131.4 248.8 L131.9 249.7 L132.5 250.5 L133.1 251.3 L133.5 252.1 L133.6 252.8 L133.6 253.5 L133.3 254.0 L132.8 254.2 L132.0 254.2 L130.9 253.8 L129.8 253.3 L128.7 252.9 L127.6 253.0 L126.8 253.8 L126.6 254.9 L127.2 255.8 L128.1 256.6 L129.0 257.4 L129.8 258.3 L130.2 259.2 L130.0 259.9 L129.5 260.4 L128.8 260.6 L128.1 260.5 L127.3 260.3 L126.4 259.9 L125.5 259.6 L124.6 259.4 L123.6 259.3 L122.6 259.7 L121.8 260.3 L121.3 261.3 L121.2 262.4 L121.6 263.4 L122.3 264.1 L123.2 264.5 L124.1 264.6 L125.0 264.6 L125.9 264.4 L126.7 264.3 L127.5 264.2 L128.2 264.4 L128.7 264.8 L129.0 265.5 L128.9 266.4 L128.5 267.4 L127.9 268.3 L127.0 269.1 L126.0 269.9 L125.3 270.8 L124.9 271.8 L124.9 272.7 L125.3 273.6 L125.7 274.5 L125.9 275.4 L125.9 276.4 L125.4 277.3 L124.6 277.9 L124.1 278.8 L124.4 279.7 L124.8 280.7 L124.7 281.7 L124.0 282.5 L123.2 283.1 L122.4 283.7 L121.8 284.5 L121.5 285.4 L121.6 286.4 L121.8 287.4 L121.8 288.5 L121.4 289.4 L120.5 289.7 L119.6 289.6 L118.8 290.0 L118.6 291.0 L119.1 291.9 L119.6 292.8 L119.3 293.7 L118.4 294.2 L117.4 294.6 L116.4 294.8 L115.5 295.0 L114.5 295.3 L113.8 295.9 L113.1 296.6 L112.7 297.5 L112.6 298.6 L112.6 299.6 L112.8 300.8 L112.9 302.0 L113.0 303.2 L112.9 304.3 L112.4 305.3 L111.8 305.9 L111.0 306.3 L110.1 306.3 L109.2 306.1 L108.4 305.7 L107.5 305.2 L106.6 304.7 L105.7 304.3 L104.7 304.2 L103.7 304.2 L102.8 304.6 L102.0 305.3 L101.6 306.2 L101.5 307.3 L101.6 308.3 L102.1 309.2 L102.7 310.1 L103.3 310.9 L103.9 311.7 L104.5 312.6 L104.9 313.5 L105.1 314.5 L104.9 315.5 L104.5 316.3 L103.8 317.0 L102.8 317.3 L101.8 317.3 L100.8 317.2 L99.8 316.8 L98.9 316.4 L97.9 315.9 L96.9 315.6 L95.9 315.5 L94.8 315.6 L93.9 316.1 L93.1 316.9 L92.7 317.8 L92.7 318.9 L93.0 319.9 L93.6 320.8 L94.4 321.6 L95.2 322.3 L96.0 323.0 L96.7 323.8 L97.3 324.6 L97.6 325.6 L97.6 326.5 L97.3 327.4 L96.5 328.0 L95.4 328.2 L94.2 328.1 L93.1 327.6 L92.0 327.0 L90.9 326.5 L89.7 326.3 L88.6 326.4 L87.8 327.0 L87.4 327.9 L87.5 328.9 L88.1 329.8 L88.9 330.3 L89.8 330.7 L90.7 331.1 L91.6 331.7 L92.2 332.4 L92.4 333.4 L92.1 334.3 L91.5 335.1 L90.6 335.6 L89.9 336.3 L89.6 337.3 L89.8 338.3 L90.0 339.3 L90.0 340.4 L89.6 341.3 L89.1 341.9 L88.5 342.3 L87.9 342.4 L87.4 342.3 L86.9 342.1 L86.4 341.7 L85.8 341.3 L85.2 340.8 L84.5 340.5 L83.7 340.3 L82.9 340.3 L82.1 340.6 L81.3 341.2 L80.8 342.0 L80.5 342.9 L80.4 343.9 L80.7 344.7 L81.1 345.4 L81.8 346.0 L82.5 346.3 L83.3 346.5 L84.0 346.6 L84.7 346.7 L85.3 346.9 L85.9 347.1 L86.3 347.5 L86.5 348.1 L86.4 348.9 L86.1 349.7 L85.5 350.6 L84.6 351.2 L83.5 351.4 L82.4 351.6 L81.6 352.2 L81.5 353.2 L82.0 354.2 L82.7 355.1 L83.0 356.1 L82.8 357.1 L82.4 357.8 L81.9 358.4 L81.2 358.6 L80.5 358.7 L79.8 358.6 L79.1 358.4 L78.3 358.2 L77.4 358.0 L76.5 358.0 L75.5 358.2 L74.7 358.8 L74.0 359.6 L73.5 360.6 L73.5 361.7 L73.7 362.8 L74.2 363.6 L75.0 364.3 L75.8 364.7 L76.7 364.9 L77.5 365.1 L78.4 365.3 L79.2 365.5 L80.0 365.9 L80.6 366.4 L81.0 367.1 L81.1 367.9 L80.9 368.7 L80.4 369.6 L79.6 370.4 L78.8 371.2 L77.8 371.9 L76.9 372.7 L76.1 373.6 L75.6 374.6 L75.4 375.6 L75.7 376.7 L76.3 377.5 L77.1 378.2 L78.1 378.7 L79.2 379.0 L80.2 379.4 L81.1 379.8 L81.8 380.4 L82.4 381.2 L82.6 382.2 L82.2 383.2 L81.4 383.9 L80.5 384.4 L79.7 385.1 L79.4 386.1 L79.8 387.0 L80.6 387.4 L81.6 387.4 L82.6 387.4 L83.5 387.7 L84.1 388.5 L84.2 389.5 L83.9 390.5 L83.4 391.4 L82.8 392.2 L82.3 393.1 L82.0 394.0 L82.0 394.9 L82.3 395.8 L82.9 396.6 L83.7 397.4 L84.6 398.2 L85.5 399.2 L86.1 400.2 L86.4 401.4 L86.2 402.3 L85.7 403.0 L85.1 403.2 L84.4 403.1 L83.7 402.8 L83.1 402.3 L82.4 401.7 L81.7 401.2 L80.9 400.8 L80.1 400.6 L79.2 400.7 L78.4 401.1 L77.8 401.7 L77.4 402.6 L77.5 403.5 L77.9 404.4 L78.5 405.0 L79.4 405.4 L80.2 405.4 L81.1 405.3 L81.9 405.1 L82.6 404.9 L83.3 404.8 L83.9 404.8 L84.4 405.1 L84.8 405.7 L84.9 406.5 L84.6 407.4 L83.8 408.2 L82.6 408.6 L81.4 409.1 L80.6 409.8 L80.6 410.8 L81.0 411.5 L81.4 412.3 L81.4 413.3 L80.8 414.1 L80.0 414.7 L79.4 415.4 L79.1 416.4 L79.5 417.3 L80.2 418.0 L80.9 418.8 L81.1 419.7 L80.7 420.6 L80.0 421.2 L79.3 421.6 L78.7 422.3 L78.8 423.3 L79.4 424.1 L80.4 424.6 L81.5 424.9 L82.4 425.3 L82.8 426.1 L82.6 427.0 L81.9 427.7 L81.0 428.1 L80.0 428.3 L79.1 428.7 L78.4 429.4 L78.1 430.4 L78.5 431.3 L79.4 431.9 L80.3 431.9 L81.3 431.7 L82.3 431.5 L83.3 431.5 L84.1 432.0 L84.5 432.9 L84.3 433.9 L83.8 434.8 L83.2 435.7 L82.7 436.7 L82.5 437.8 L82.9 438.7 L83.7 439.2 L84.5 439.5 L85.4 439.9 L86.1 440.4 L86.6 441.3 L86.5 442.3 L86.2 443.2 L86.5 444.1 L87.3 444.8 L88.2 445.4 L88.5 446.5 L88.1 447.5 L87.5 448.4 L87.5 449.4 L87.9 450.3 L88.1 451.3 L87.3 451.9 L86.4 452.0 L85.5 451.8 L84.6 451.9 L84.0 452.6 L84.3 453.6 L85.2 454.3 L86.4 454.6 L87.6 455.0 L88.6 455.7 L88.8 456.6 L88.6 457.4 L88.1 458.1 L87.4 458.5 L86.6 458.9 L85.6 459.2 L84.6 459.5 L83.6 460.1 L82.7 461.0 L82.3 462.2 L82.4 463.7 L83.1 464.9 L84.1 465.7 L85.3 465.9 L86.5 465.8 L87.6 465.4 L88.6 464.9 L89.7 464.5 L90.6 464.3 L91.5 464.3 L92.3 464.7 L92.9 465.5 L93.0 466.6 L92.6 467.7 L91.9 468.8 L91.1 469.7 L90.5 470.7 L90.2 471.7 L90.5 472.6 L91.3 473.0 L92.3 472.9 L93.3 472.5 L94.2 471.9 L95.1 471.5 L96.2 471.4 L97.2 472.0 L97.7 473.3 L97.4 474.6 L96.6 475.5 L95.6 475.9 L94.5 476.2 L93.6 476.7 L93.0 477.3 L92.9 478.0 L93.2 478.8 L93.7 479.6 L94.2 480.5 L94.4 481.4 L94.2 482.5 L93.4 483.1 L92.4 483.1 L91.4 483.1 L90.7 483.8 L90.7 484.8 L91.0 485.7 L90.7 486.6 L89.9 487.1 L88.8 487.3 L87.8 487.6 L87.2 488.4 L87.1 489.4 L87.3 490.4 L87.1 491.3 L86.4 492.0 L85.5 492.4 L84.6 492.6 L83.7 493.0 L83.1 493.9 L83.1 494.9 L83.4 495.9 L83.7 496.8 L83.6 497.8 L83.2 498.6 L82.4 499.3 L81.6 499.8 L80.8 500.3 L80.0 500.9 L79.4 501.7 L79.1 502.6 L79.0 503.6 L79.2 504.6 L79.3 505.6 L79.4 506.5 L79.2 507.5 L78.8 508.4 L78.1 509.0 L77.2 509.5 L76.3 509.8 L75.6 510.3 L75.0 511.1 L74.8 512.1 L75.1 513.2 L75.5 514.2 L76.1 515.3 L76.4 516.5 L76.3 517.6 L75.7 518.3 L74.9 518.6 L74.0 518.5 L73.2 518.2 L72.3 517.7 L71.4 517.1 L70.4 516.7 L69.4 516.5 L68.3 516.7 L67.5 517.3 L67.2 518.2 L67.3 519.2 L67.8 520.2 L68.6 521.0 L69.6 521.6 L70.6 522.2 L71.6 522.8 L72.4 523.6 L73.0 524.6 L73.2 525.6 L72.9 526.7 L72.3 527.4 L71.4 527.8 L70.6 528.0 L69.7 527.9 L68.9 527.5 L68.2 527.1 L67.6 526.6 L66.9 526.0 L66.3 525.5 L65.5 525.2 L64.7 524.9 L63.8 525.0 L62.9 525.3 L62.2 525.8 L61.6 526.6 L61.2 527.5 L61.2 528.5 L61.4 529.4 L61.8 530.1 L62.4 530.7 L63.1 531.1 L63.8 531.5 L64.6 531.8 L65.2 532.2 L65.8 532.6 L66.2 533.1 L66.3 533.7 L66.2 534.4 L65.7 535.2 L65.0 535.9 L63.9 536.4 L62.7 536.3 L61.5 536.0 L60.3 535.8 L59.3 536.2 L58.8 537.1 L59.0 538.0 L59.5 538.7 L60.0 539.5 L60.0 540.5 L59.4 541.3 L58.7 541.9 L57.9 542.5 L57.1 543.0 L56.3 543.6 L55.7 544.3 L55.2 545.2 L54.9 546.2 L54.9 547.1 L54.9 548.1 L54.9 549.1 L54.7 550.0 L54.4 550.9 L53.6 551.5 L52.7 551.7 L51.7 551.8 L50.7 552.2 L50.1 553.0 L50.0 554.0 L50.5 554.9 L51.1 555.6 L51.7 556.5 L51.8 557.5 L51.5 558.3 L50.9 559.0 L50.4 559.8 L50.4 560.8 L50.8 561.8 L51.5 562.7 L52.0 563.7 L52.1 564.6 L52.0 565.4 L51.6 566.0 L51.2 566.4 L50.8 566.6 L50.3 566.6 L49.8 566.4 L49.4 566.1 L48.9 565.7 L48.3 565.3 L47.7 565.0 L47.1 564.8 L46.4 564.7 L45.7 564.9 L45.0 565.5 L44.5 566.3 L44.1 567.3 L44.1 568.5 L44.4 569.6 L44.9 570.5 L45.5 571.0 L46.2 571.3 L46.9 571.4 L47.6 571.2 L48.2 570.9 L48.7 570.5 L49.3 570.1 L49.8 569.8 L50.4 569.5 L51.1 569.4 L51.8 569.6 L52.5 569.9 L53.1 570.4 L53.5 571.2 L53.8 572.1 L53.8 573.1 L53.6 574.0 L53.2 574.9 L52.8 575.6 L52.2 576.0 L51.7 576.3 L51.1 576.4 L50.6 576.4 L50.2 576.2 L49.7 576.0 L49.3 575.7 L48.9 575.5 L48.5 575.4 L48.0 575.3 L47.5 575.4 L47.0 575.7 L46.4 576.1 L46.0 576.7 L45.6 577.4 L45.3 578.3 L45.3 579.1 L45.4 580.0 L45.6 580.7 L46.0 581.4 L46.5 582.0 L47.0 582.4 L47.5 582.7 L48.0 582.8 L48.5 582.8 L49.0 582.6 L49.4 582.4 L49.8 582.2 L50.2 582.0 L50.6 581.8 L51.1 581.7 L51.5 581.8 L51.9 582.0 L52.2 582.5 L52.3 583.2 L52.3 584.1 L52.1 585.1 L51.7 586.2 L50.9 587.1 L49.8 587.6 L48.8 587.9 L47.9 588.4 L47.5 589.3 L47.7 590.4 L48.1 591.5 L48.4 592.7 L48.1 593.8 L47.5 594.6 L46.7 594.9 L46.1 594.9 L45.6 594.5 L45.3 594.0 L45.1 593.4 L44.8 592.7 L44.5 592.1 L43.9 591.7 L43.3 591.5 L42.6 591.6 L44.0 594.0" stroke="#000" stroke-linejoin="round"/>
<path d="M407.01 -112.40A519.9 519.9 0 1 1 406.99 -112.40" stroke="#e3ded8"/>
<path d="M418.00 7.85A399.8 399.8 0 1 1 393.00 7.95" stroke="#e3ded8"/>
<path d="M416.50 127.86A279.8 279.8 0 1 1 394.00 128.00" stroke="#e3ded8"/>
<path d="M416.50 248.08A159.7 159.7 0 1 1 394.00 248.33" stroke="#e3ded8"/>
<path d="M413.00 368.36A39.6 39.6 0 1 1 398.50 368.82" stroke="#ff0808"/>
</svg>
</div>
<div class="panel" style="top:8px;height:318px;"></div>
<div class="panel" style="top:333px;height:113px;"></div>
<div class="panel" style="top:453px;height:348px;"></div>
<div class="btn" style="left:819px;top:16px;width:58px;height:18px;background:#5a0000;border-color:#fff #b0b0b0 #b0b0b0 #fff;"></div>
<div class="btn" style="left:883px;top:16px;width:58px;height:18px;background:#383838;border-color:#fff #b0b0b0 #b0b0b0 #fff;"></div>
<div class="btn" style="left:994px;top:16px;width:128px;height:18px;background:#383838;border-color:#fff #b0b0b0 #b0b0b0 #fff;"></div>
<div class="btn" style="left:821px;top:64px;width:82px;height:16px;border-color:#fff #b0b0b0 #b0b0b0 #fff;"></div>
<div class="btn" style="left:931px;top:64px;width:82px;height:16px;border-color:#fff #b0b0b0 #b0b0b0 #fff;"></div>
<div class="btn" style="left:1041px;top:64px;width:82px;height:16px;border-color:#fff #b0b0b0 #b0b0b0 #fff;"></div>
<div class="hl" style="left:821px;top:217px;width:303px;"></div>
<div class="bar" style="left:925px;top:227px;"></div>
<div class="bar" style="left:1028px;top:227px;"></div>
<div class="bar" style="left:925px;top:281px;"></div>
<div class="bar" style="left:1028px;top:281px;"></div>
<div class="hl" style="left:821px;top:358px;width:302px;"></div>
<svg id="graph" width="320" height="275" viewBox="812 530 320 275" shape-rendering="crispEdges" fill="none" stroke="#c8c8c8" stroke-width="1">
<path d="M822.5 777.5H1088.5M1088.5 542V779M1084 542.5H1089M1084 620.5H1089M1084 698.5H1089M1086 581.5H1090M1086 659.5H1090M1086 737.5H1090"/>
<path d="M822.5 775V778M866.5 775V778M911.5 775V778M955.5 775V778M999.5 775V778M1044.5 775V778"/>
<path d="M888.5 777L890.5 769.5H893.5L895.5 777M972.5 777L974.5 769.5H977.5L979.5 777" stroke="#ffffff" shape-rendering="auto"/>
</svg>
<div id="legend" style="position:absolute;left:8px;top:758px;width:245px;height:46px;background:#000;"></div>
<div style="position:absolute;left:9px;top:759px;width:241px;height:42px;border:1px solid #a8a8a8;"></div>
<div style="position:absolute;left:685px;top:792px;width:121px;height:14px;background:#000;"></div>
<svg style="position:absolute;left:8px;top:757px;" width="246" height="47" viewBox="8 757 246 47" fill="none" stroke-width="1.2">
<g stroke="#00e8e8"><circle cx="60.7" cy="780.6" r="3.6"/><path d="M58.5 780.6H63M83 780.6H89.5M107.7 780.6H112.3M110 778.3V782.9M132 780.6H138.6M135.3 777.3V783.9"/><circle cx="110" cy="780.6" r="3.6"/></g>
<g stroke="#f0f000"><circle cx="60.7" cy="793.6" r="3.6"/><path d="M58.5 793.6H63M83 793.6H89.5M107.7 793.6H112.3M110 791.3V795.9M132 793.6H138.6M135.3 790.3V796.9"/><circle cx="110" cy="793.6" r="3.6"/></g>
</svg>
<div class="t" style="left:823.5px;top:18px;font-size:12.5px;font-weight:bold;letter-spacing:0.04px;color:#f0dcdc;">STRIKE</div>
<div class="t" style="left:889.5px;top:18px;font-size:12.5px;font-weight:bold;letter-spacing:0.30px;color:#c8c8c8;">NOISE</div>
<div class="t" style="left:997.5px;top:18px;font-size:12.5px;font-weight:bold;letter-spacing:-0.08px;">Bng 50°</div>
<div class="t" style="left:1075.5px;top:18px;font-size:12.5px;font-weight:bold;letter-spacing:-0.13px;color:#00ff00;">414mi</div>
<div class="t" style="left:829.5px;top:65px;font-size:11px;letter-spacing:0.48px;">Strikes/min</div>
<div class="t" style="left:943.5px;top:65px;font-size:11px;letter-spacing:0.44px;">Close/min</div>
<div class="t" style="left:1049.5px;top:65px;font-size:11px;letter-spacing:0.36px;">Noises/min</div>
<div class="t" style="left:884.0px;top:95px;font-size:27px;font-weight:bold;transform:scaleX(1.1);">0</div>
<div class="t" style="left:994.0px;top:95px;font-size:27px;font-weight:bold;transform:scaleX(1.1);">0</div>
<div class="t" style="left:1104.0px;top:95px;font-size:27px;font-weight:bold;color:#c0c0c0;transform:scaleX(1.1);">0</div>
<div class="t" style="left:826.0px;top:131px;letter-spacing:-0.16px;">Total Strikes</div>
<div class="t" style="left:944.5px;top:131px;letter-spacing:-0.08px;">Total Close</div>
<div class="t" style="left:1047.5px;top:131px;letter-spacing:-0.18px;color:#c0c0c0;">Total Noises</div>
<div class="t" style="left:895.0px;top:149px;">0</div>
<div class="t" style="left:1005.0px;top:149px;">0</div>
<div class="t" style="left:1115.5px;top:149px;">2</div>
<div class="t" style="left:820.0px;top:203px;letter-spacing:-0.24px;color:#c0c0c0;">Lightning type distribution</div>
<div class="t" style="left:821.0px;top:225px;font-size:11.5px;font-weight:bold;letter-spacing:-0.31px;">Cloud-ground</div>
<div class="t" style="left:912.0px;top:225px;">+</div>
<div class="t" style="left:979.5px;top:225px;font-size:12.5px;font-weight:bold;letter-spacing:-0.70px;">0%</div>
<div class="t" style="left:1015.0px;top:225px;font-size:11.5px;font-weight:bold;">−</div>
<div class="t" style="left:1082.0px;top:225px;font-size:12.5px;font-weight:bold;letter-spacing:0.40px;">0%</div>
<div class="t" style="left:821.0px;top:249px;font-size:11.5px;font-weight:bold;letter-spacing:-0.10px;color:#c0c0c0;">Count</div>
<div class="t" style="left:926.0px;top:249px;font-size:11.5px;font-weight:bold;">0</div>
<div class="t" style="left:1028.5px;top:249px;font-size:11.5px;font-weight:bold;">0</div>
<div class="t" style="left:820.0px;top:279px;font-size:11.5px;font-weight:bold;letter-spacing:-0.16px;">Intracloud</div>
<div class="t" style="left:912.0px;top:279px;">+</div>
<div class="t" style="left:979.5px;top:279px;font-size:12.5px;font-weight:bold;letter-spacing:-0.70px;">0%</div>
<div class="t" style="left:1015.0px;top:279px;font-size:11.5px;font-weight:bold;">−</div>
<div class="t" style="left:1082.0px;top:279px;font-size:12.5px;font-weight:bold;letter-spacing:0.40px;">0%</div>
<div class="t" style="left:821.0px;top:303px;font-size:11.5px;font-weight:bold;letter-spacing:-0.10px;color:#c0c0c0;">Count</div>
<div class="t" style="left:926.0px;top:303px;font-size:11.5px;font-weight:bold;">0</div>
<div class="t" style="left:1028.5px;top:303px;font-size:11.5px;font-weight:bold;">0</div>
<div class="t" style="left:821.0px;top:340px;font-size:16px;font-weight:bold;letter-spacing:0.28px;color:#00ff00;">2/24/2026 12:25:02 AM</div>
<div class="t" style="left:820.5px;top:376px;letter-spacing:-0.25px;">Squelch</div>
<div class="t" style="left:909.0px;top:376px;">0</div>
<div class="t" style="left:980.5px;top:376px;letter-spacing:-0.22px;">Upload</div>
<div class="t" style="left:1060.5px;top:376px;letter-spacing:-0.26px;color:#c0c0c0;">Disabled</div>
<div class="t" style="left:820.5px;top:396px;letter-spacing:-0.13px;">Persistence</div>
<div class="t" style="left:908.5px;top:396px;letter-spacing:-0.36px;">90 min</div>
<div class="t" style="left:981.5px;top:396px;letter-spacing:-0.15px;">Capture</div>
<div class="t" style="left:1061.5px;top:396px;letter-spacing:-0.62px;color:#00f000;">Active</div>
<div class="t" style="left:820.5px;top:416px;letter-spacing:-0.20px;">Range</div>
<div class="t" style="left:908.5px;top:416px;letter-spacing:-0.36px;">313 mi</div>
<div class="t" style="left:980.5px;top:416px;letter-spacing:-0.49px;">Receiver</div>
<div class="t" style="left:1060.5px;top:416px;letter-spacing:-0.12px;color:#00f000;">Enabled</div>
<div class="t" style="left:820.5px;top:463px;letter-spacing:-0.56px;color:#c0c0c0;">Uptime</div>
<div class="t" style="left:909.5px;top:463px;letter-spacing:-0.22px;">1020:10</div>
<div class="t" style="left:980.5px;top:463px;letter-spacing:-0.22px;color:#c0c0c0;">Peak time</div>
<div class="t" style="left:1060.5px;top:463px;letter-spacing:0.03px;color:#c0c0c0;">Plot</div>
<div class="t" style="left:820.5px;top:486px;letter-spacing:-0.01px;color:#c0c0c0;">Peak rate</div>
<div class="t" style="left:909.5px;top:486px;letter-spacing:-0.52px;">1/min</div>
<div class="t" style="left:981.5px;top:486px;letter-spacing:-0.39px;">12:00 AM</div>
<div class="t" style="left:1060.5px;top:486px;letter-spacing:0.02px;">Strike</div>
<div class="t" style="left:822.5px;top:516px;letter-spacing:-0.16px;color:#c0c0c0;">Trend graph</div>
<div class="t" style="left:908.0px;top:516px;letter-spacing:-0.70px;">60 min</div>
<div class="t" style="left:1091.0px;top:535px;font-size:12px;letter-spacing:-0.50px;color:#c0c0c0;">30</div>
<div class="t" style="left:1091.0px;top:613px;font-size:12px;letter-spacing:-0.50px;color:#c0c0c0;">20</div>
<div class="t" style="left:1092.0px;top:691px;font-size:12px;letter-spacing:-1.50px;color:#c0c0c0;">10</div>
<div class="t" style="left:819.5px;top:781px;font-size:12px;letter-spacing:-0.70px;color:#c0c0c0;">60</div>
<div class="t" style="left:863.5px;top:781px;font-size:12px;letter-spacing:-0.80px;color:#c0c0c0;">50</div>
<div class="t" style="left:909.5px;top:781px;font-size:12px;letter-spacing:-1.80px;color:#c0c0c0;">40</div>
<div class="t" style="left:952.5px;top:781px;font-size:12px;letter-spacing:-0.50px;color:#c0c0c0;">30</div>
<div class="t" style="left:996.5px;top:781px;font-size:12px;letter-spacing:-0.50px;color:#c0c0c0;">20</div>
<div class="t" style="left:1042.0px;top:781px;font-size:12px;letter-spacing:-1.40px;color:#c0c0c0;">10</div>
<div class="t" style="left:1087.0px;top:781px;font-size:12px;color:#c0c0c0;">0</div>
<div class="t" style="left:1099.5px;top:781px;font-size:12px;letter-spacing:-1.35px;color:#c0c0c0;">min</div>
<div class="t" style="left:394.0px;top:0px;font-size:11px;letter-spacing:0.55px;color:#ffff80;">313</div>
<div class="t" style="left:395.5px;top:121px;font-size:11px;letter-spacing:-0.20px;color:#ffff80;">219</div>
<div class="t" style="left:394.5px;top:241px;font-size:11px;letter-spacing:0.05px;color:#ffff80;">125</div>
<div class="t" style="left:398.5px;top:361px;font-size:11px;letter-spacing:0.50px;color:#ffff80;">31</div>
<div class="t c" style="left:13.0px;top:760px;font-size:10px;letter-spacing:-0.48px;color:#f0f0f0;">Symbols</div>
<div class="t" style="left:53.0px;top:760px;font-size:10px;letter-spacing:-0.20px;color:#f0f0f0;">-CG</div>
<div class="t" style="left:78.0px;top:760px;font-size:10px;letter-spacing:0.80px;color:#f0f0f0;">-IC</div>
<div class="t" style="left:98.0px;top:760px;font-size:10px;letter-spacing:-0.90px;color:#f0f0f0;">+CG</div>
<div class="t" style="left:123.0px;top:760px;font-size:10px;letter-spacing:0.30px;color:#f0f0f0;">+IC</div>
<div class="t c" style="left:153.5px;top:760px;font-size:10px;letter-spacing:-0.48px;color:#f0f0f0;">Strike age color codes</div>
<div class="t c" style="left:12.0px;top:773px;font-size:10px;letter-spacing:-0.58px;color:#f0f0f0;">Recent</div>
<div class="t c" style="left:13.0px;top:786px;font-size:10px;letter-spacing:-0.20px;color:#f0f0f0;">Old</div>
<div class="t c" style="left:152.5px;top:773px;font-size:9.5px;letter-spacing:-0.85px;color:#e6dc00;">15+</div>
<div class="t c" style="left:188.5px;top:773px;font-size:9.5px;letter-spacing:-1.10px;color:#e6a800;">30+</div>
<div class="t c" style="left:223.0px;top:773px;font-size:9.5px;letter-spacing:-0.70px;color:#e68a00;">45+</div>
<div class="t c" style="left:153.5px;top:786px;font-size:9.5px;letter-spacing:-1.35px;color:#d87400;">60+</div>
<div class="t c" style="left:187.5px;top:786px;font-size:9.5px;letter-spacing:-0.60px;color:#e05000;">75+</div>
<div class="t c" style="left:223.0px;top:786px;font-size:9.5px;letter-spacing:-0.70px;color:#e02800;">90+</div>
<div class="t c" style="left:688.0px;top:792px;font-size:10px;letter-spacing:-0.41px;">©2005 Astrogenic Systems</div>

<div style="position:absolute;left:0;top:0;width:1138px;height:6px;background:#000;"></div>
</body></html>
